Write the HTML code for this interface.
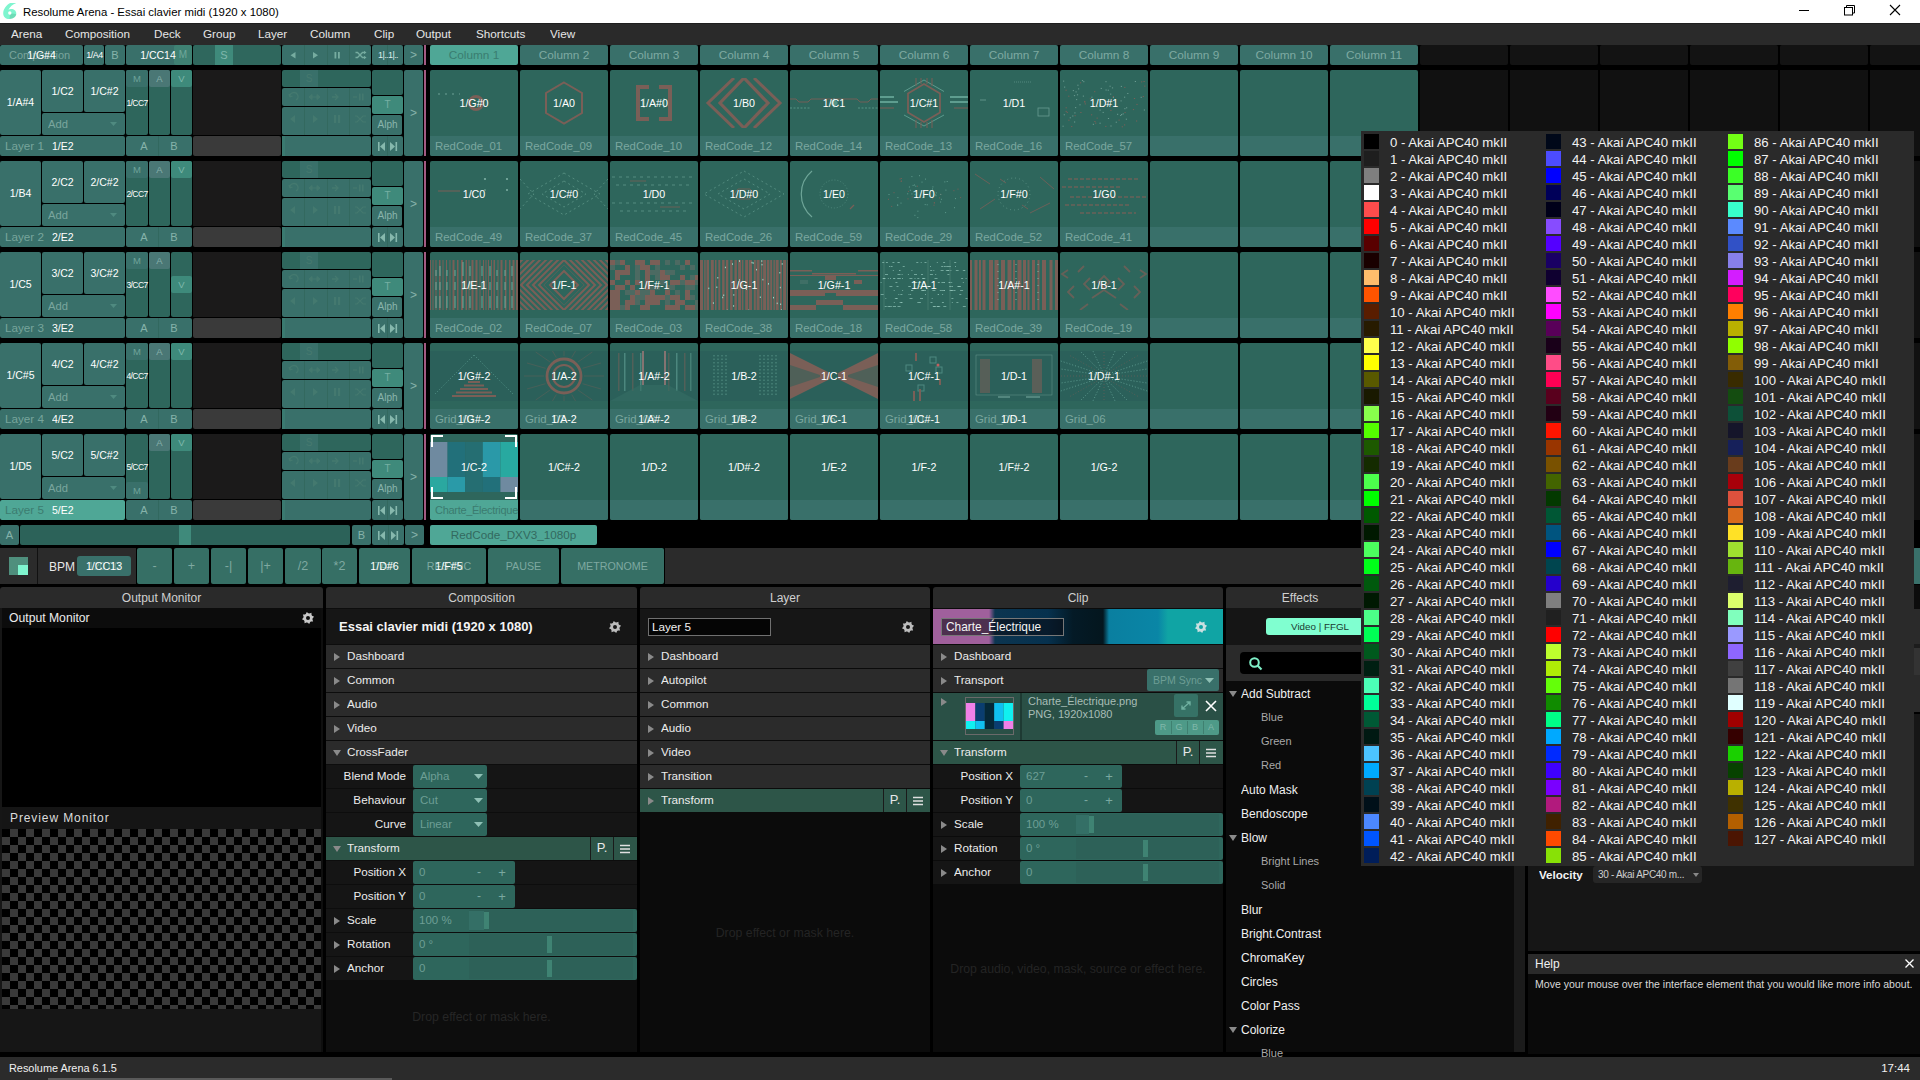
<!DOCTYPE html><html><head><meta charset="utf-8"><style>
html,body{margin:0;padding:0;}
body{width:1920px;height:1080px;position:relative;overflow:hidden;background:#000;font-family:"Liberation Sans",sans-serif;}
div{position:absolute;box-sizing:border-box;}
svg{position:absolute;}
</style></head><body>
<div style="left:0px;top:0px;width:1920px;height:23px;background:#ffffff;"></div>
<svg style="left:0px;top:0px" width="20" height="23" viewBox="0 0 20 23"><path d="M16.3 3 H10.2 C6.5 5 3.2 9 3.2 13.2 C3.2 16.8 5.8 19 9.3 19 C13.2 19 16.3 16.8 16.3 13.6 C16.3 10.6 13.8 8.9 11 9 C10 9 9.2 9.3 8.4 9.8 C10 6.8 12.5 4.6 16.3 3 Z" fill="#7ff5cf"/><path d="M10 13.5 C12.5 13.2 14.5 13.8 16.2 14.2 C15.6 17 12.8 18.8 9.6 18.9 Z" fill="#5fc7a4" fill-opacity="0.55"/><circle cx="9.8" cy="13" r="1.7" fill="#fff"/></svg>
<div style="left:23px;top:1px;width:400px;height:23px;line-height:23px;font-size:11.4px;color:#000;text-align:left;font-weight:normal;white-space:nowrap;overflow:hidden;">Resolume Arena - Essai clavier midi (1920 x 1080)</div>
<svg style="left:1790px;top:0" width="130" height="23" viewBox="0 0 130 23"><line x1="9" y1="10.5" x2="19" y2="10.5" stroke="#000" stroke-width="1"/><rect x="54.5" y="7.5" width="8" height="7.5" fill="none" stroke="#000" stroke-width="1"/><path d="M56.5 7.5 V5.5 H64.5 V13 H62.5" fill="none" stroke="#000" stroke-width="1"/><path d="M100 5 L110 15 M110 5 L100 15" stroke="#000" stroke-width="1.1"/></svg>
<div style="left:0px;top:23px;width:1920px;height:22px;background:#2a2a2a;"></div>
<div style="left:0px;top:23px;width:1920px;height:1px;background:#1e1e1e;"></div>
<div style="left:11px;top:23px;width:120px;height:22px;line-height:22px;font-size:11.7px;color:#e6e6e6;text-align:left;font-weight:normal;white-space:nowrap;overflow:hidden;">Arena</div>
<div style="left:65px;top:23px;width:120px;height:22px;line-height:22px;font-size:11.7px;color:#e6e6e6;text-align:left;font-weight:normal;white-space:nowrap;overflow:hidden;">Composition</div>
<div style="left:154px;top:23px;width:120px;height:22px;line-height:22px;font-size:11.7px;color:#e6e6e6;text-align:left;font-weight:normal;white-space:nowrap;overflow:hidden;">Deck</div>
<div style="left:203px;top:23px;width:120px;height:22px;line-height:22px;font-size:11.7px;color:#e6e6e6;text-align:left;font-weight:normal;white-space:nowrap;overflow:hidden;">Group</div>
<div style="left:258px;top:23px;width:120px;height:22px;line-height:22px;font-size:11.7px;color:#e6e6e6;text-align:left;font-weight:normal;white-space:nowrap;overflow:hidden;">Layer</div>
<div style="left:310px;top:23px;width:120px;height:22px;line-height:22px;font-size:11.7px;color:#e6e6e6;text-align:left;font-weight:normal;white-space:nowrap;overflow:hidden;">Column</div>
<div style="left:374px;top:23px;width:120px;height:22px;line-height:22px;font-size:11.7px;color:#e6e6e6;text-align:left;font-weight:normal;white-space:nowrap;overflow:hidden;">Clip</div>
<div style="left:416px;top:23px;width:120px;height:22px;line-height:22px;font-size:11.7px;color:#e6e6e6;text-align:left;font-weight:normal;white-space:nowrap;overflow:hidden;">Output</div>
<div style="left:476px;top:23px;width:120px;height:22px;line-height:22px;font-size:11.7px;color:#e6e6e6;text-align:left;font-weight:normal;white-space:nowrap;overflow:hidden;">Shortcuts</div>
<div style="left:550px;top:23px;width:120px;height:22px;line-height:22px;font-size:11.7px;color:#e6e6e6;text-align:left;font-weight:normal;white-space:nowrap;overflow:hidden;">View</div>
<div style="left:0px;top:45px;width:83px;height:20px;background:#39706a;border-radius:2px;"></div>
<div style="left:9px;top:45px;width:80px;height:20px;line-height:20px;font-size:11px;color:#7aa59d;text-align:left;font-weight:normal;white-space:nowrap;overflow:hidden;">Composition</div>
<div style="left:0px;top:45px;width:83px;height:20px;line-height:20px;font-size:10.5px;color:#ffffff;text-align:center;font-weight:normal;white-space:nowrap;overflow:hidden;">1/G#4</div>
<div style="left:84px;top:45px;width:20px;height:20px;background:#39706a;border-radius:2px;"></div>
<div style="left:84px;top:45px;width:21px;height:20px;line-height:20px;font-size:9px;color:#ffffff;text-align:center;font-weight:normal;white-space:nowrap;overflow:hidden;letter-spacing:-0.5px;">1/A4</div>
<div style="left:105px;top:45px;width:20px;height:20px;background:#39706a;border-radius:2px;"></div>
<div style="left:105px;top:45px;width:20px;height:20px;line-height:20px;font-size:11px;color:#86b3aa;text-align:center;font-weight:normal;white-space:nowrap;overflow:hidden;">B</div>
<div style="left:126px;top:45px;width:66px;height:20px;background:#39706a;border-radius:2px;"></div>
<div style="left:174px;top:45px;width:18px;height:20px;background:#3f8173;border-radius:2px;"></div>
<div style="left:174px;top:45px;width:18px;height:20px;line-height:20px;font-size:10px;color:#6fa89b;text-align:center;font-weight:normal;white-space:nowrap;overflow:hidden;">M</div>
<div style="left:138px;top:45px;width:40px;height:20px;line-height:20px;font-size:10.5px;color:#ffffff;text-align:center;font-weight:normal;white-space:nowrap;overflow:hidden;">1/CC14</div>
<div style="left:193px;top:45px;width:88px;height:20px;background:#2f675d;border-radius:2px;"></div>
<div style="left:215px;top:45px;width:18px;height:20px;background:#3f8a7b;"></div>
<div style="left:215px;top:45px;width:18px;height:20px;line-height:20px;font-size:11px;color:#7fb8ab;text-align:center;font-weight:normal;white-space:nowrap;overflow:hidden;">S</div>
<div style="left:282px;top:45px;width:89px;height:20px;background:#39706a;border-radius:2px;"></div>
<div style="left:304.25px;top:45px;width:1px;height:20px;background:#33695f;"></div>
<div style="left:326.5px;top:45px;width:1px;height:20px;background:#33695f;"></div>
<div style="left:348.75px;top:45px;width:1px;height:20px;background:#33695f;"></div>
<svg style="left:282px;top:45px" width="90" height="20" viewBox="0 0 90 20" fill="#76aca0"><path d="M13.5 7 L8.5 10.2 L13.5 13.4 Z"/><path d="M31 7 L36 10.2 L31 13.4 Z"/><rect x="52.5" y="7" width="1.8" height="6.5"/><rect x="56" y="7" width="1.8" height="6.5"/><path d="M73.5 7.5 H75.5 L80.5 12.5 H82.5 M73.5 12.5 H75.5 L80.5 7.5 H82.5" stroke="#76aca0" stroke-width="1.3" fill="none"/><path d="M82 5.8 L84.5 7.5 L82 9.2 Z M82 10.8 L84.5 12.5 L82 14.2 Z"/></svg>
<div style="left:372px;top:45px;width:31px;height:20px;background:#39706a;border-radius:2px;"></div>
<div style="left:387px;top:45px;width:1px;height:20px;background:#33695f;"></div>
<div style="left:372px;top:45px;width:32px;height:20px;line-height:20px;font-size:9px;color:#dfeeea;text-align:center;font-weight:normal;white-space:nowrap;overflow:hidden;letter-spacing:-0.6px;">1|..1|..</div>
<div style="left:404px;top:45px;width:19px;height:20px;background:#39706a;border-radius:2px;"></div>
<div style="left:404px;top:45px;width:19px;height:20px;line-height:20px;font-size:12px;color:#86b3aa;text-align:center;font-weight:normal;white-space:nowrap;overflow:hidden;">&gt;</div>
<div style="left:424px;top:45px;width:2px;height:20px;background:#a35a82;"></div>
<div style="left:0px;top:70px;width:41px;height:65px;background:#39706a;border-radius:2px;"></div>
<div style="left:0px;top:70px;width:41px;height:65px;line-height:65px;font-size:10.5px;color:#ffffff;text-align:center;font-weight:normal;white-space:nowrap;overflow:hidden;">1/A#4</div>
<div style="left:42px;top:70px;width:41px;height:42px;background:#39706a;border-radius:2px;"></div>
<div style="left:42px;top:70px;width:41px;height:42px;line-height:42px;font-size:10.5px;color:#ffffff;text-align:center;font-weight:normal;white-space:nowrap;overflow:hidden;">1/C2</div>
<div style="left:84px;top:70px;width:41px;height:42px;background:#39706a;border-radius:2px;"></div>
<div style="left:84px;top:70px;width:41px;height:42px;line-height:42px;font-size:10.5px;color:#ffffff;text-align:center;font-weight:normal;white-space:nowrap;overflow:hidden;">1/C#2</div>
<div style="left:42px;top:113px;width:83px;height:22px;background:#39706a;border-radius:2px;"></div>
<div style="left:48px;top:113px;width:60px;height:22px;line-height:22px;font-size:11.2px;color:#79a69e;text-align:left;font-weight:normal;white-space:nowrap;overflow:hidden;">Add</div>
<svg style="left:110px;top:122px" width="8" height="5"><path d="M0 0 H7 L3.5 4 Z" fill="#4f8a80"/></svg>
<div style="left:126px;top:70px;width:22px;height:65px;background:#2e665c;border-radius:2px;"></div>
<div style="left:149px;top:70px;width:21px;height:65px;background:#2e665c;border-radius:2px;"></div>
<div style="left:171px;top:70px;width:21px;height:65px;background:#2e665c;border-radius:2px;"></div>
<div style="left:126px;top:70px;width:22px;height:17px;background:#39706a;border-radius:2px;"></div>
<div style="left:126px;top:70px;width:22px;height:17px;line-height:17px;font-size:9.5px;color:#6fa39a;text-align:center;font-weight:normal;white-space:nowrap;overflow:hidden;">M</div>
<div style="left:149px;top:70px;width:21px;height:17px;background:#4a7775;border-radius:2px;"></div>
<div style="left:149px;top:70px;width:21px;height:17px;line-height:17px;font-size:9.5px;color:#86b0ab;text-align:center;font-weight:normal;white-space:nowrap;overflow:hidden;">A</div>
<div style="left:171px;top:70px;width:21px;height:17px;background:#3e8a7b;border-radius:2px;"></div>
<div style="left:171px;top:70px;width:21px;height:17px;line-height:17px;font-size:9.5px;color:#7db8ab;text-align:center;font-weight:normal;white-space:nowrap;overflow:hidden;">V</div>
<div style="left:124px;top:95px;width:26px;height:16px;line-height:16px;font-size:8.5px;color:#ffffff;text-align:center;font-weight:normal;white-space:nowrap;overflow:hidden;letter-spacing:-0.6px;">1/CC7</div>
<div style="left:0px;top:136px;width:125px;height:20px;background:#39706a;border-radius:2px;"></div>
<div style="left:5px;top:136px;width:50px;height:20px;line-height:20px;font-size:11.7px;color:#77a59c;text-align:left;font-weight:normal;white-space:nowrap;overflow:hidden;">Layer 1</div>
<div style="left:52px;top:136px;width:40px;height:20px;line-height:20px;font-size:10.5px;color:#ffffff;text-align:left;font-weight:normal;white-space:nowrap;overflow:hidden;">1/E2</div>
<div style="left:126px;top:136px;width:66px;height:20px;background:#39706a;border-radius:2px;"></div>
<div style="left:158px;top:136px;width:1px;height:20px;background:#32685f;"></div>
<div style="left:126px;top:136px;width:36px;height:20px;line-height:20px;font-size:11px;color:#86b3aa;text-align:center;font-weight:normal;white-space:nowrap;overflow:hidden;">A</div>
<div style="left:159px;top:136px;width:30px;height:20px;line-height:20px;font-size:11px;color:#86b3aa;text-align:center;font-weight:normal;white-space:nowrap;overflow:hidden;">B</div>
<div style="left:193px;top:70px;width:88px;height:65px;background:#1b1a1a;"></div>
<div style="left:193px;top:136px;width:88px;height:20px;background:#3a3a3a;border-radius:2px;"></div>
<div style="left:282px;top:70px;width:89px;height:17px;background:#2e665c;border-radius:2px;"></div>
<div style="left:300px;top:70px;width:18px;height:17px;background:#39706a;"></div>
<div style="left:300px;top:70px;width:18px;height:17px;line-height:17px;font-size:10px;color:#46796f;text-align:center;font-weight:normal;white-space:nowrap;overflow:hidden;">S</div>
<div style="left:282px;top:88px;width:89px;height:18px;background:#39706a;border-radius:2px;"></div>
<div style="left:282px;top:107px;width:89px;height:28px;background:#39706a;border-radius:2px;"></div>
<div style="left:304.25px;top:88px;width:1px;height:18px;background:#33695f;"></div>
<div style="left:304.25px;top:107px;width:1px;height:28px;background:#33695f;"></div>
<div style="left:326.5px;top:88px;width:1px;height:18px;background:#33695f;"></div>
<div style="left:326.5px;top:107px;width:1px;height:28px;background:#33695f;"></div>
<div style="left:348.75px;top:88px;width:1px;height:18px;background:#33695f;"></div>
<div style="left:348.75px;top:107px;width:1px;height:28px;background:#33695f;"></div>
<svg style="left:282px;top:88px" width="90" height="47" viewBox="0 0 90 47" fill="#44796f"><path d="M8 9 A4 4 0 1 1 14 12 M8 9 L7 6 M8 9 L10.5 8" stroke="#44796f" stroke-width="1.3" fill="none"/><path d="M27 9 L30 6.5 V11.5 Z M38 9 L35 6.5 V11.5 Z M30 9 H35" stroke="#44796f" stroke-width="1"/><path d="M50 9 H56 M53 6 L56 9 L53 12" stroke="#44796f" stroke-width="1.3" fill="none"/><path d="M71 9 H75" stroke="#44796f" stroke-width="1.3"/><rect x="77" y="5.5" width="1.6" height="7"/><rect x="80" y="5.5" width="1.6" height="7"/><path d="M13 27 L8 31 L13 35 Z"/><path d="M31 27 L36 31 L31 35 Z"/><rect x="52" y="27" width="2.2" height="8"/><rect x="56" y="27" width="2.2" height="8"/><path d="M73 28 H75 L81 34 H84 M73 34 H75 L81 28 H84" stroke="#44796f" stroke-width="1.2" fill="none"/></svg>
<div style="left:282px;top:136px;width:89px;height:20px;background:#39706a;border-radius:2px;"></div>
<div style="left:282px;top:136px;width:3px;height:20px;background:#3a7a70;"></div>
<div style="left:372px;top:70px;width:31px;height:25px;background:#2e665c;border-radius:2px;"></div>
<div style="left:372px;top:96px;width:31px;height:18px;background:#3f8a7b;border-radius:2px;"></div>
<div style="left:372px;top:96px;width:31px;height:18px;line-height:18px;font-size:10px;color:#76b0a3;text-align:center;font-weight:normal;white-space:nowrap;overflow:hidden;">T</div>
<div style="left:372px;top:115px;width:30px;height:20px;background:#39706a;border-radius:2px;"></div>
<div style="left:372px;top:115px;width:31px;height:20px;line-height:20px;font-size:10px;color:#8ab5ad;text-align:center;font-weight:normal;white-space:nowrap;overflow:hidden;">Alph</div>
<div style="left:372px;top:136px;width:31px;height:20px;background:#39706a;border-radius:2px;"></div>
<div style="left:387px;top:136px;width:1px;height:20px;background:#33695f;"></div>
<svg style="left:372px;top:136px" width="31" height="20" viewBox="0 0 31 20" fill="#86b8ad"><rect x="6" y="6" width="1.6" height="9"/><path d="M13 6 L8 10.5 L13 15 Z"/><rect x="23.5" y="6" width="1.6" height="9"/><path d="M18 6 L23 10.5 L18 15 Z"/></svg>
<div style="left:404px;top:70px;width:19px;height:86px;background:#39706a;border-radius:2px;"></div>
<div style="left:404px;top:70px;width:19px;height:86px;line-height:86px;font-size:12px;color:#86b3aa;text-align:center;font-weight:normal;white-space:nowrap;overflow:hidden;">&gt;</div>
<div style="left:424px;top:70px;width:2px;height:86px;background:#a35a82;"></div>
<div style="left:0px;top:161px;width:41px;height:65px;background:#39706a;border-radius:2px;"></div>
<div style="left:0px;top:161px;width:41px;height:65px;line-height:65px;font-size:10.5px;color:#ffffff;text-align:center;font-weight:normal;white-space:nowrap;overflow:hidden;">1/B4</div>
<div style="left:42px;top:161px;width:41px;height:42px;background:#39706a;border-radius:2px;"></div>
<div style="left:42px;top:161px;width:41px;height:42px;line-height:42px;font-size:10.5px;color:#ffffff;text-align:center;font-weight:normal;white-space:nowrap;overflow:hidden;">2/C2</div>
<div style="left:84px;top:161px;width:41px;height:42px;background:#39706a;border-radius:2px;"></div>
<div style="left:84px;top:161px;width:41px;height:42px;line-height:42px;font-size:10.5px;color:#ffffff;text-align:center;font-weight:normal;white-space:nowrap;overflow:hidden;">2/C#2</div>
<div style="left:42px;top:204px;width:83px;height:22px;background:#39706a;border-radius:2px;"></div>
<div style="left:48px;top:204px;width:60px;height:22px;line-height:22px;font-size:11.2px;color:#79a69e;text-align:left;font-weight:normal;white-space:nowrap;overflow:hidden;">Add</div>
<svg style="left:110px;top:213px" width="8" height="5"><path d="M0 0 H7 L3.5 4 Z" fill="#4f8a80"/></svg>
<div style="left:126px;top:161px;width:22px;height:65px;background:#2e665c;border-radius:2px;"></div>
<div style="left:149px;top:161px;width:21px;height:65px;background:#2e665c;border-radius:2px;"></div>
<div style="left:171px;top:161px;width:21px;height:65px;background:#2e665c;border-radius:2px;"></div>
<div style="left:126px;top:161px;width:22px;height:17px;background:#39706a;border-radius:2px;"></div>
<div style="left:126px;top:161px;width:22px;height:17px;line-height:17px;font-size:9.5px;color:#6fa39a;text-align:center;font-weight:normal;white-space:nowrap;overflow:hidden;">M</div>
<div style="left:149px;top:161px;width:21px;height:17px;background:#4a7775;border-radius:2px;"></div>
<div style="left:149px;top:161px;width:21px;height:17px;line-height:17px;font-size:9.5px;color:#86b0ab;text-align:center;font-weight:normal;white-space:nowrap;overflow:hidden;">A</div>
<div style="left:171px;top:161px;width:21px;height:17px;background:#3e8a7b;border-radius:2px;"></div>
<div style="left:171px;top:161px;width:21px;height:17px;line-height:17px;font-size:9.5px;color:#7db8ab;text-align:center;font-weight:normal;white-space:nowrap;overflow:hidden;">V</div>
<div style="left:124px;top:186px;width:26px;height:16px;line-height:16px;font-size:8.5px;color:#ffffff;text-align:center;font-weight:normal;white-space:nowrap;overflow:hidden;letter-spacing:-0.6px;">2/CC7</div>
<div style="left:0px;top:227px;width:125px;height:20px;background:#39706a;border-radius:2px;"></div>
<div style="left:5px;top:227px;width:50px;height:20px;line-height:20px;font-size:11.7px;color:#77a59c;text-align:left;font-weight:normal;white-space:nowrap;overflow:hidden;">Layer 2</div>
<div style="left:52px;top:227px;width:40px;height:20px;line-height:20px;font-size:10.5px;color:#ffffff;text-align:left;font-weight:normal;white-space:nowrap;overflow:hidden;">2/E2</div>
<div style="left:126px;top:227px;width:66px;height:20px;background:#39706a;border-radius:2px;"></div>
<div style="left:158px;top:227px;width:1px;height:20px;background:#32685f;"></div>
<div style="left:126px;top:227px;width:36px;height:20px;line-height:20px;font-size:11px;color:#86b3aa;text-align:center;font-weight:normal;white-space:nowrap;overflow:hidden;">A</div>
<div style="left:159px;top:227px;width:30px;height:20px;line-height:20px;font-size:11px;color:#86b3aa;text-align:center;font-weight:normal;white-space:nowrap;overflow:hidden;">B</div>
<div style="left:193px;top:161px;width:88px;height:65px;background:#1b1a1a;"></div>
<div style="left:193px;top:227px;width:88px;height:20px;background:#3a3a3a;border-radius:2px;"></div>
<div style="left:282px;top:161px;width:89px;height:17px;background:#2e665c;border-radius:2px;"></div>
<div style="left:300px;top:161px;width:18px;height:17px;background:#39706a;"></div>
<div style="left:300px;top:161px;width:18px;height:17px;line-height:17px;font-size:10px;color:#46796f;text-align:center;font-weight:normal;white-space:nowrap;overflow:hidden;">S</div>
<div style="left:282px;top:179px;width:89px;height:18px;background:#39706a;border-radius:2px;"></div>
<div style="left:282px;top:198px;width:89px;height:28px;background:#39706a;border-radius:2px;"></div>
<div style="left:304.25px;top:179px;width:1px;height:18px;background:#33695f;"></div>
<div style="left:304.25px;top:198px;width:1px;height:28px;background:#33695f;"></div>
<div style="left:326.5px;top:179px;width:1px;height:18px;background:#33695f;"></div>
<div style="left:326.5px;top:198px;width:1px;height:28px;background:#33695f;"></div>
<div style="left:348.75px;top:179px;width:1px;height:18px;background:#33695f;"></div>
<div style="left:348.75px;top:198px;width:1px;height:28px;background:#33695f;"></div>
<svg style="left:282px;top:179px" width="90" height="47" viewBox="0 0 90 47" fill="#44796f"><path d="M8 9 A4 4 0 1 1 14 12 M8 9 L7 6 M8 9 L10.5 8" stroke="#44796f" stroke-width="1.3" fill="none"/><path d="M27 9 L30 6.5 V11.5 Z M38 9 L35 6.5 V11.5 Z M30 9 H35" stroke="#44796f" stroke-width="1"/><path d="M50 9 H56 M53 6 L56 9 L53 12" stroke="#44796f" stroke-width="1.3" fill="none"/><path d="M71 9 H75" stroke="#44796f" stroke-width="1.3"/><rect x="77" y="5.5" width="1.6" height="7"/><rect x="80" y="5.5" width="1.6" height="7"/><path d="M13 27 L8 31 L13 35 Z"/><path d="M31 27 L36 31 L31 35 Z"/><rect x="52" y="27" width="2.2" height="8"/><rect x="56" y="27" width="2.2" height="8"/><path d="M73 28 H75 L81 34 H84 M73 34 H75 L81 28 H84" stroke="#44796f" stroke-width="1.2" fill="none"/></svg>
<div style="left:282px;top:227px;width:89px;height:20px;background:#39706a;border-radius:2px;"></div>
<div style="left:282px;top:227px;width:3px;height:20px;background:#3a7a70;"></div>
<div style="left:372px;top:161px;width:31px;height:25px;background:#2e665c;border-radius:2px;"></div>
<div style="left:372px;top:187px;width:31px;height:18px;background:#3f8a7b;border-radius:2px;"></div>
<div style="left:372px;top:187px;width:31px;height:18px;line-height:18px;font-size:10px;color:#76b0a3;text-align:center;font-weight:normal;white-space:nowrap;overflow:hidden;">T</div>
<div style="left:372px;top:206px;width:30px;height:20px;background:#39706a;border-radius:2px;"></div>
<div style="left:372px;top:206px;width:31px;height:20px;line-height:20px;font-size:10px;color:#8ab5ad;text-align:center;font-weight:normal;white-space:nowrap;overflow:hidden;">Alph</div>
<div style="left:372px;top:227px;width:31px;height:20px;background:#39706a;border-radius:2px;"></div>
<div style="left:387px;top:227px;width:1px;height:20px;background:#33695f;"></div>
<svg style="left:372px;top:227px" width="31" height="20" viewBox="0 0 31 20" fill="#86b8ad"><rect x="6" y="6" width="1.6" height="9"/><path d="M13 6 L8 10.5 L13 15 Z"/><rect x="23.5" y="6" width="1.6" height="9"/><path d="M18 6 L23 10.5 L18 15 Z"/></svg>
<div style="left:404px;top:161px;width:19px;height:86px;background:#39706a;border-radius:2px;"></div>
<div style="left:404px;top:161px;width:19px;height:86px;line-height:86px;font-size:12px;color:#86b3aa;text-align:center;font-weight:normal;white-space:nowrap;overflow:hidden;">&gt;</div>
<div style="left:424px;top:161px;width:2px;height:86px;background:#a35a82;"></div>
<div style="left:0px;top:252px;width:41px;height:65px;background:#39706a;border-radius:2px;"></div>
<div style="left:0px;top:252px;width:41px;height:65px;line-height:65px;font-size:10.5px;color:#ffffff;text-align:center;font-weight:normal;white-space:nowrap;overflow:hidden;">1/C5</div>
<div style="left:42px;top:252px;width:41px;height:42px;background:#39706a;border-radius:2px;"></div>
<div style="left:42px;top:252px;width:41px;height:42px;line-height:42px;font-size:10.5px;color:#ffffff;text-align:center;font-weight:normal;white-space:nowrap;overflow:hidden;">3/C2</div>
<div style="left:84px;top:252px;width:41px;height:42px;background:#39706a;border-radius:2px;"></div>
<div style="left:84px;top:252px;width:41px;height:42px;line-height:42px;font-size:10.5px;color:#ffffff;text-align:center;font-weight:normal;white-space:nowrap;overflow:hidden;">3/C#2</div>
<div style="left:42px;top:295px;width:83px;height:22px;background:#39706a;border-radius:2px;"></div>
<div style="left:48px;top:295px;width:60px;height:22px;line-height:22px;font-size:11.2px;color:#79a69e;text-align:left;font-weight:normal;white-space:nowrap;overflow:hidden;">Add</div>
<svg style="left:110px;top:304px" width="8" height="5"><path d="M0 0 H7 L3.5 4 Z" fill="#4f8a80"/></svg>
<div style="left:126px;top:252px;width:22px;height:65px;background:#2e665c;border-radius:2px;"></div>
<div style="left:149px;top:252px;width:21px;height:65px;background:#2e665c;border-radius:2px;"></div>
<div style="left:171px;top:252px;width:21px;height:65px;background:#2e665c;border-radius:2px;"></div>
<div style="left:126px;top:252px;width:22px;height:17px;background:#39706a;border-radius:2px;"></div>
<div style="left:126px;top:252px;width:22px;height:17px;line-height:17px;font-size:9.5px;color:#6fa39a;text-align:center;font-weight:normal;white-space:nowrap;overflow:hidden;">M</div>
<div style="left:149px;top:252px;width:21px;height:17px;background:#4a7775;border-radius:2px;"></div>
<div style="left:149px;top:252px;width:21px;height:17px;line-height:17px;font-size:9.5px;color:#86b0ab;text-align:center;font-weight:normal;white-space:nowrap;overflow:hidden;">A</div>
<div style="left:171px;top:276px;width:21px;height:17px;background:#3e8a7b;border-radius:2px;"></div>
<div style="left:171px;top:276px;width:21px;height:17px;line-height:17px;font-size:9.5px;color:#7db8ab;text-align:center;font-weight:normal;white-space:nowrap;overflow:hidden;">V</div>
<div style="left:124px;top:277px;width:26px;height:16px;line-height:16px;font-size:8.5px;color:#ffffff;text-align:center;font-weight:normal;white-space:nowrap;overflow:hidden;letter-spacing:-0.6px;">3/CC7</div>
<div style="left:0px;top:318px;width:125px;height:20px;background:#39706a;border-radius:2px;"></div>
<div style="left:5px;top:318px;width:50px;height:20px;line-height:20px;font-size:11.7px;color:#77a59c;text-align:left;font-weight:normal;white-space:nowrap;overflow:hidden;">Layer 3</div>
<div style="left:52px;top:318px;width:40px;height:20px;line-height:20px;font-size:10.5px;color:#ffffff;text-align:left;font-weight:normal;white-space:nowrap;overflow:hidden;">3/E2</div>
<div style="left:126px;top:318px;width:66px;height:20px;background:#39706a;border-radius:2px;"></div>
<div style="left:158px;top:318px;width:1px;height:20px;background:#32685f;"></div>
<div style="left:126px;top:318px;width:36px;height:20px;line-height:20px;font-size:11px;color:#86b3aa;text-align:center;font-weight:normal;white-space:nowrap;overflow:hidden;">A</div>
<div style="left:159px;top:318px;width:30px;height:20px;line-height:20px;font-size:11px;color:#86b3aa;text-align:center;font-weight:normal;white-space:nowrap;overflow:hidden;">B</div>
<div style="left:193px;top:252px;width:88px;height:65px;background:#1b1a1a;"></div>
<div style="left:193px;top:318px;width:88px;height:20px;background:#3a3a3a;border-radius:2px;"></div>
<div style="left:282px;top:252px;width:89px;height:17px;background:#2e665c;border-radius:2px;"></div>
<div style="left:300px;top:252px;width:18px;height:17px;background:#39706a;"></div>
<div style="left:300px;top:252px;width:18px;height:17px;line-height:17px;font-size:10px;color:#46796f;text-align:center;font-weight:normal;white-space:nowrap;overflow:hidden;">S</div>
<div style="left:282px;top:270px;width:89px;height:18px;background:#39706a;border-radius:2px;"></div>
<div style="left:282px;top:289px;width:89px;height:28px;background:#39706a;border-radius:2px;"></div>
<div style="left:304.25px;top:270px;width:1px;height:18px;background:#33695f;"></div>
<div style="left:304.25px;top:289px;width:1px;height:28px;background:#33695f;"></div>
<div style="left:326.5px;top:270px;width:1px;height:18px;background:#33695f;"></div>
<div style="left:326.5px;top:289px;width:1px;height:28px;background:#33695f;"></div>
<div style="left:348.75px;top:270px;width:1px;height:18px;background:#33695f;"></div>
<div style="left:348.75px;top:289px;width:1px;height:28px;background:#33695f;"></div>
<svg style="left:282px;top:270px" width="90" height="47" viewBox="0 0 90 47" fill="#44796f"><path d="M8 9 A4 4 0 1 1 14 12 M8 9 L7 6 M8 9 L10.5 8" stroke="#44796f" stroke-width="1.3" fill="none"/><path d="M27 9 L30 6.5 V11.5 Z M38 9 L35 6.5 V11.5 Z M30 9 H35" stroke="#44796f" stroke-width="1"/><path d="M50 9 H56 M53 6 L56 9 L53 12" stroke="#44796f" stroke-width="1.3" fill="none"/><path d="M71 9 H75" stroke="#44796f" stroke-width="1.3"/><rect x="77" y="5.5" width="1.6" height="7"/><rect x="80" y="5.5" width="1.6" height="7"/><path d="M13 27 L8 31 L13 35 Z"/><path d="M31 27 L36 31 L31 35 Z"/><rect x="52" y="27" width="2.2" height="8"/><rect x="56" y="27" width="2.2" height="8"/><path d="M73 28 H75 L81 34 H84 M73 34 H75 L81 28 H84" stroke="#44796f" stroke-width="1.2" fill="none"/></svg>
<div style="left:282px;top:318px;width:89px;height:20px;background:#39706a;border-radius:2px;"></div>
<div style="left:282px;top:318px;width:3px;height:20px;background:#3a7a70;"></div>
<div style="left:372px;top:252px;width:31px;height:25px;background:#2e665c;border-radius:2px;"></div>
<div style="left:372px;top:278px;width:31px;height:18px;background:#3f8a7b;border-radius:2px;"></div>
<div style="left:372px;top:278px;width:31px;height:18px;line-height:18px;font-size:10px;color:#76b0a3;text-align:center;font-weight:normal;white-space:nowrap;overflow:hidden;">T</div>
<div style="left:372px;top:297px;width:30px;height:20px;background:#39706a;border-radius:2px;"></div>
<div style="left:372px;top:297px;width:31px;height:20px;line-height:20px;font-size:10px;color:#8ab5ad;text-align:center;font-weight:normal;white-space:nowrap;overflow:hidden;">Alph</div>
<div style="left:372px;top:318px;width:31px;height:20px;background:#39706a;border-radius:2px;"></div>
<div style="left:387px;top:318px;width:1px;height:20px;background:#33695f;"></div>
<svg style="left:372px;top:318px" width="31" height="20" viewBox="0 0 31 20" fill="#86b8ad"><rect x="6" y="6" width="1.6" height="9"/><path d="M13 6 L8 10.5 L13 15 Z"/><rect x="23.5" y="6" width="1.6" height="9"/><path d="M18 6 L23 10.5 L18 15 Z"/></svg>
<div style="left:404px;top:252px;width:19px;height:86px;background:#39706a;border-radius:2px;"></div>
<div style="left:404px;top:252px;width:19px;height:86px;line-height:86px;font-size:12px;color:#86b3aa;text-align:center;font-weight:normal;white-space:nowrap;overflow:hidden;">&gt;</div>
<div style="left:424px;top:252px;width:2px;height:86px;background:#a35a82;"></div>
<div style="left:0px;top:343px;width:41px;height:65px;background:#39706a;border-radius:2px;"></div>
<div style="left:0px;top:343px;width:41px;height:65px;line-height:65px;font-size:10.5px;color:#ffffff;text-align:center;font-weight:normal;white-space:nowrap;overflow:hidden;">1/C#5</div>
<div style="left:42px;top:343px;width:41px;height:42px;background:#39706a;border-radius:2px;"></div>
<div style="left:42px;top:343px;width:41px;height:42px;line-height:42px;font-size:10.5px;color:#ffffff;text-align:center;font-weight:normal;white-space:nowrap;overflow:hidden;">4/C2</div>
<div style="left:84px;top:343px;width:41px;height:42px;background:#39706a;border-radius:2px;"></div>
<div style="left:84px;top:343px;width:41px;height:42px;line-height:42px;font-size:10.5px;color:#ffffff;text-align:center;font-weight:normal;white-space:nowrap;overflow:hidden;">4/C#2</div>
<div style="left:42px;top:386px;width:83px;height:22px;background:#39706a;border-radius:2px;"></div>
<div style="left:48px;top:386px;width:60px;height:22px;line-height:22px;font-size:11.2px;color:#79a69e;text-align:left;font-weight:normal;white-space:nowrap;overflow:hidden;">Add</div>
<svg style="left:110px;top:395px" width="8" height="5"><path d="M0 0 H7 L3.5 4 Z" fill="#4f8a80"/></svg>
<div style="left:126px;top:343px;width:22px;height:65px;background:#2e665c;border-radius:2px;"></div>
<div style="left:149px;top:343px;width:21px;height:65px;background:#2e665c;border-radius:2px;"></div>
<div style="left:171px;top:343px;width:21px;height:65px;background:#2e665c;border-radius:2px;"></div>
<div style="left:126px;top:343px;width:22px;height:17px;background:#39706a;border-radius:2px;"></div>
<div style="left:126px;top:343px;width:22px;height:17px;line-height:17px;font-size:9.5px;color:#6fa39a;text-align:center;font-weight:normal;white-space:nowrap;overflow:hidden;">M</div>
<div style="left:149px;top:343px;width:21px;height:17px;background:#4a7775;border-radius:2px;"></div>
<div style="left:149px;top:343px;width:21px;height:17px;line-height:17px;font-size:9.5px;color:#86b0ab;text-align:center;font-weight:normal;white-space:nowrap;overflow:hidden;">A</div>
<div style="left:171px;top:343px;width:21px;height:17px;background:#3e8a7b;border-radius:2px;"></div>
<div style="left:171px;top:343px;width:21px;height:17px;line-height:17px;font-size:9.5px;color:#7db8ab;text-align:center;font-weight:normal;white-space:nowrap;overflow:hidden;">V</div>
<div style="left:124px;top:368px;width:26px;height:16px;line-height:16px;font-size:8.5px;color:#ffffff;text-align:center;font-weight:normal;white-space:nowrap;overflow:hidden;letter-spacing:-0.6px;">4/CC7</div>
<div style="left:0px;top:409px;width:125px;height:20px;background:#39706a;border-radius:2px;"></div>
<div style="left:5px;top:409px;width:50px;height:20px;line-height:20px;font-size:11.7px;color:#77a59c;text-align:left;font-weight:normal;white-space:nowrap;overflow:hidden;">Layer 4</div>
<div style="left:52px;top:409px;width:40px;height:20px;line-height:20px;font-size:10.5px;color:#ffffff;text-align:left;font-weight:normal;white-space:nowrap;overflow:hidden;">4/E2</div>
<div style="left:126px;top:409px;width:66px;height:20px;background:#39706a;border-radius:2px;"></div>
<div style="left:158px;top:409px;width:1px;height:20px;background:#32685f;"></div>
<div style="left:126px;top:409px;width:36px;height:20px;line-height:20px;font-size:11px;color:#86b3aa;text-align:center;font-weight:normal;white-space:nowrap;overflow:hidden;">A</div>
<div style="left:159px;top:409px;width:30px;height:20px;line-height:20px;font-size:11px;color:#86b3aa;text-align:center;font-weight:normal;white-space:nowrap;overflow:hidden;">B</div>
<div style="left:193px;top:343px;width:88px;height:65px;background:#1b1a1a;"></div>
<div style="left:193px;top:409px;width:88px;height:20px;background:#3a3a3a;border-radius:2px;"></div>
<div style="left:282px;top:343px;width:89px;height:17px;background:#2e665c;border-radius:2px;"></div>
<div style="left:300px;top:343px;width:18px;height:17px;background:#39706a;"></div>
<div style="left:300px;top:343px;width:18px;height:17px;line-height:17px;font-size:10px;color:#46796f;text-align:center;font-weight:normal;white-space:nowrap;overflow:hidden;">S</div>
<div style="left:282px;top:361px;width:89px;height:18px;background:#39706a;border-radius:2px;"></div>
<div style="left:282px;top:380px;width:89px;height:28px;background:#39706a;border-radius:2px;"></div>
<div style="left:304.25px;top:361px;width:1px;height:18px;background:#33695f;"></div>
<div style="left:304.25px;top:380px;width:1px;height:28px;background:#33695f;"></div>
<div style="left:326.5px;top:361px;width:1px;height:18px;background:#33695f;"></div>
<div style="left:326.5px;top:380px;width:1px;height:28px;background:#33695f;"></div>
<div style="left:348.75px;top:361px;width:1px;height:18px;background:#33695f;"></div>
<div style="left:348.75px;top:380px;width:1px;height:28px;background:#33695f;"></div>
<svg style="left:282px;top:361px" width="90" height="47" viewBox="0 0 90 47" fill="#44796f"><path d="M8 9 A4 4 0 1 1 14 12 M8 9 L7 6 M8 9 L10.5 8" stroke="#44796f" stroke-width="1.3" fill="none"/><path d="M27 9 L30 6.5 V11.5 Z M38 9 L35 6.5 V11.5 Z M30 9 H35" stroke="#44796f" stroke-width="1"/><path d="M50 9 H56 M53 6 L56 9 L53 12" stroke="#44796f" stroke-width="1.3" fill="none"/><path d="M71 9 H75" stroke="#44796f" stroke-width="1.3"/><rect x="77" y="5.5" width="1.6" height="7"/><rect x="80" y="5.5" width="1.6" height="7"/><path d="M13 27 L8 31 L13 35 Z"/><path d="M31 27 L36 31 L31 35 Z"/><rect x="52" y="27" width="2.2" height="8"/><rect x="56" y="27" width="2.2" height="8"/><path d="M73 28 H75 L81 34 H84 M73 34 H75 L81 28 H84" stroke="#44796f" stroke-width="1.2" fill="none"/></svg>
<div style="left:282px;top:409px;width:89px;height:20px;background:#39706a;border-radius:2px;"></div>
<div style="left:282px;top:409px;width:3px;height:20px;background:#3a7a70;"></div>
<div style="left:372px;top:343px;width:31px;height:25px;background:#2e665c;border-radius:2px;"></div>
<div style="left:372px;top:369px;width:31px;height:18px;background:#3f8a7b;border-radius:2px;"></div>
<div style="left:372px;top:369px;width:31px;height:18px;line-height:18px;font-size:10px;color:#76b0a3;text-align:center;font-weight:normal;white-space:nowrap;overflow:hidden;">T</div>
<div style="left:372px;top:388px;width:30px;height:20px;background:#39706a;border-radius:2px;"></div>
<div style="left:372px;top:388px;width:31px;height:20px;line-height:20px;font-size:10px;color:#8ab5ad;text-align:center;font-weight:normal;white-space:nowrap;overflow:hidden;">Alph</div>
<div style="left:372px;top:409px;width:31px;height:20px;background:#39706a;border-radius:2px;"></div>
<div style="left:387px;top:409px;width:1px;height:20px;background:#33695f;"></div>
<svg style="left:372px;top:409px" width="31" height="20" viewBox="0 0 31 20" fill="#86b8ad"><rect x="6" y="6" width="1.6" height="9"/><path d="M13 6 L8 10.5 L13 15 Z"/><rect x="23.5" y="6" width="1.6" height="9"/><path d="M18 6 L23 10.5 L18 15 Z"/></svg>
<div style="left:404px;top:343px;width:19px;height:86px;background:#39706a;border-radius:2px;"></div>
<div style="left:404px;top:343px;width:19px;height:86px;line-height:86px;font-size:12px;color:#86b3aa;text-align:center;font-weight:normal;white-space:nowrap;overflow:hidden;">&gt;</div>
<div style="left:424px;top:343px;width:2px;height:86px;background:#a35a82;"></div>
<div style="left:0px;top:434px;width:41px;height:65px;background:#39706a;border-radius:2px;"></div>
<div style="left:0px;top:434px;width:41px;height:65px;line-height:65px;font-size:10.5px;color:#ffffff;text-align:center;font-weight:normal;white-space:nowrap;overflow:hidden;">1/D5</div>
<div style="left:42px;top:434px;width:41px;height:42px;background:#39706a;border-radius:2px;"></div>
<div style="left:42px;top:434px;width:41px;height:42px;line-height:42px;font-size:10.5px;color:#ffffff;text-align:center;font-weight:normal;white-space:nowrap;overflow:hidden;">5/C2</div>
<div style="left:84px;top:434px;width:41px;height:42px;background:#39706a;border-radius:2px;"></div>
<div style="left:84px;top:434px;width:41px;height:42px;line-height:42px;font-size:10.5px;color:#ffffff;text-align:center;font-weight:normal;white-space:nowrap;overflow:hidden;">5/C#2</div>
<div style="left:42px;top:477px;width:83px;height:22px;background:#39706a;border-radius:2px;"></div>
<div style="left:48px;top:477px;width:60px;height:22px;line-height:22px;font-size:11.2px;color:#79a69e;text-align:left;font-weight:normal;white-space:nowrap;overflow:hidden;">Add</div>
<svg style="left:110px;top:486px" width="8" height="5"><path d="M0 0 H7 L3.5 4 Z" fill="#4f8a80"/></svg>
<div style="left:126px;top:434px;width:22px;height:65px;background:#2e665c;border-radius:2px;"></div>
<div style="left:149px;top:434px;width:21px;height:65px;background:#2e665c;border-radius:2px;"></div>
<div style="left:171px;top:434px;width:21px;height:65px;background:#2e665c;border-radius:2px;"></div>
<div style="left:126px;top:482px;width:22px;height:17px;background:#39706a;border-radius:2px;"></div>
<div style="left:126px;top:482px;width:22px;height:17px;line-height:17px;font-size:9.5px;color:#6fa39a;text-align:center;font-weight:normal;white-space:nowrap;overflow:hidden;">M</div>
<div style="left:149px;top:434px;width:21px;height:17px;background:#4a7775;border-radius:2px;"></div>
<div style="left:149px;top:434px;width:21px;height:17px;line-height:17px;font-size:9.5px;color:#86b0ab;text-align:center;font-weight:normal;white-space:nowrap;overflow:hidden;">A</div>
<div style="left:171px;top:434px;width:21px;height:17px;background:#3e8a7b;border-radius:2px;"></div>
<div style="left:171px;top:434px;width:21px;height:17px;line-height:17px;font-size:9.5px;color:#7db8ab;text-align:center;font-weight:normal;white-space:nowrap;overflow:hidden;">V</div>
<div style="left:124px;top:459px;width:26px;height:16px;line-height:16px;font-size:8.5px;color:#ffffff;text-align:center;font-weight:normal;white-space:nowrap;overflow:hidden;letter-spacing:-0.6px;">5/CC7</div>
<div style="left:0px;top:500px;width:125px;height:20px;background:#4fa796;border-radius:2px;"></div>
<div style="left:5px;top:500px;width:50px;height:20px;line-height:20px;font-size:11.7px;color:#3c7c70;text-align:left;font-weight:normal;white-space:nowrap;overflow:hidden;">Layer 5</div>
<div style="left:52px;top:500px;width:40px;height:20px;line-height:20px;font-size:10.5px;color:#ffffff;text-align:left;font-weight:normal;white-space:nowrap;overflow:hidden;">5/E2</div>
<div style="left:126px;top:500px;width:66px;height:20px;background:#39706a;border-radius:2px;"></div>
<div style="left:158px;top:500px;width:1px;height:20px;background:#32685f;"></div>
<div style="left:126px;top:500px;width:36px;height:20px;line-height:20px;font-size:11px;color:#86b3aa;text-align:center;font-weight:normal;white-space:nowrap;overflow:hidden;">A</div>
<div style="left:159px;top:500px;width:30px;height:20px;line-height:20px;font-size:11px;color:#86b3aa;text-align:center;font-weight:normal;white-space:nowrap;overflow:hidden;">B</div>
<div style="left:193px;top:434px;width:88px;height:65px;background:#1b1a1a;"></div>
<div style="left:193px;top:500px;width:88px;height:20px;background:#3a3a3a;border-radius:2px;"></div>
<div style="left:282px;top:434px;width:89px;height:17px;background:#2e665c;border-radius:2px;"></div>
<div style="left:300px;top:434px;width:18px;height:17px;background:#39706a;"></div>
<div style="left:300px;top:434px;width:18px;height:17px;line-height:17px;font-size:10px;color:#46796f;text-align:center;font-weight:normal;white-space:nowrap;overflow:hidden;">S</div>
<div style="left:282px;top:452px;width:89px;height:18px;background:#39706a;border-radius:2px;"></div>
<div style="left:282px;top:471px;width:89px;height:28px;background:#39706a;border-radius:2px;"></div>
<div style="left:304.25px;top:452px;width:1px;height:18px;background:#33695f;"></div>
<div style="left:304.25px;top:471px;width:1px;height:28px;background:#33695f;"></div>
<div style="left:326.5px;top:452px;width:1px;height:18px;background:#33695f;"></div>
<div style="left:326.5px;top:471px;width:1px;height:28px;background:#33695f;"></div>
<div style="left:348.75px;top:452px;width:1px;height:18px;background:#33695f;"></div>
<div style="left:348.75px;top:471px;width:1px;height:28px;background:#33695f;"></div>
<svg style="left:282px;top:452px" width="90" height="47" viewBox="0 0 90 47" fill="#44796f"><path d="M8 9 A4 4 0 1 1 14 12 M8 9 L7 6 M8 9 L10.5 8" stroke="#44796f" stroke-width="1.3" fill="none"/><path d="M27 9 L30 6.5 V11.5 Z M38 9 L35 6.5 V11.5 Z M30 9 H35" stroke="#44796f" stroke-width="1"/><path d="M50 9 H56 M53 6 L56 9 L53 12" stroke="#44796f" stroke-width="1.3" fill="none"/><path d="M71 9 H75" stroke="#44796f" stroke-width="1.3"/><rect x="77" y="5.5" width="1.6" height="7"/><rect x="80" y="5.5" width="1.6" height="7"/><path d="M13 27 L8 31 L13 35 Z"/><path d="M31 27 L36 31 L31 35 Z"/><rect x="52" y="27" width="2.2" height="8"/><rect x="56" y="27" width="2.2" height="8"/><path d="M73 28 H75 L81 34 H84 M73 34 H75 L81 28 H84" stroke="#44796f" stroke-width="1.2" fill="none"/></svg>
<div style="left:282px;top:500px;width:89px;height:20px;background:#39706a;border-radius:2px;"></div>
<div style="left:282px;top:500px;width:3px;height:20px;background:#3a7a70;"></div>
<div style="left:372px;top:434px;width:31px;height:25px;background:#2e665c;border-radius:2px;"></div>
<div style="left:372px;top:460px;width:31px;height:18px;background:#3f8a7b;border-radius:2px;"></div>
<div style="left:372px;top:460px;width:31px;height:18px;line-height:18px;font-size:10px;color:#76b0a3;text-align:center;font-weight:normal;white-space:nowrap;overflow:hidden;">T</div>
<div style="left:372px;top:479px;width:30px;height:20px;background:#39706a;border-radius:2px;"></div>
<div style="left:372px;top:479px;width:31px;height:20px;line-height:20px;font-size:10px;color:#8ab5ad;text-align:center;font-weight:normal;white-space:nowrap;overflow:hidden;">Alph</div>
<div style="left:372px;top:500px;width:31px;height:20px;background:#39706a;border-radius:2px;"></div>
<div style="left:387px;top:500px;width:1px;height:20px;background:#33695f;"></div>
<svg style="left:372px;top:500px" width="31" height="20" viewBox="0 0 31 20" fill="#86b8ad"><rect x="6" y="6" width="1.6" height="9"/><path d="M13 6 L8 10.5 L13 15 Z"/><rect x="23.5" y="6" width="1.6" height="9"/><path d="M18 6 L23 10.5 L18 15 Z"/></svg>
<div style="left:404px;top:434px;width:19px;height:86px;background:#39706a;border-radius:2px;"></div>
<div style="left:404px;top:434px;width:19px;height:86px;line-height:86px;font-size:12px;color:#86b3aa;text-align:center;font-weight:normal;white-space:nowrap;overflow:hidden;">&gt;</div>
<div style="left:424px;top:434px;width:2px;height:86px;background:#a35a82;"></div>
<div style="left:430px;top:45px;width:88px;height:20px;background:#4fa796;border-radius:2px;"></div>
<div style="left:430px;top:45px;width:88px;height:20px;line-height:20px;font-size:11.8px;color:#3a7d70;text-align:center;font-weight:normal;white-space:nowrap;overflow:hidden;">Column 1</div>
<div style="left:520px;top:45px;width:88px;height:20px;background:#39706a;border-radius:2px;"></div>
<div style="left:520px;top:45px;width:88px;height:20px;line-height:20px;font-size:11.8px;color:#7eaaa2;text-align:center;font-weight:normal;white-space:nowrap;overflow:hidden;">Column 2</div>
<div style="left:610px;top:45px;width:88px;height:20px;background:#39706a;border-radius:2px;"></div>
<div style="left:610px;top:45px;width:88px;height:20px;line-height:20px;font-size:11.8px;color:#7eaaa2;text-align:center;font-weight:normal;white-space:nowrap;overflow:hidden;">Column 3</div>
<div style="left:700px;top:45px;width:88px;height:20px;background:#39706a;border-radius:2px;"></div>
<div style="left:700px;top:45px;width:88px;height:20px;line-height:20px;font-size:11.8px;color:#7eaaa2;text-align:center;font-weight:normal;white-space:nowrap;overflow:hidden;">Column 4</div>
<div style="left:790px;top:45px;width:88px;height:20px;background:#39706a;border-radius:2px;"></div>
<div style="left:790px;top:45px;width:88px;height:20px;line-height:20px;font-size:11.8px;color:#7eaaa2;text-align:center;font-weight:normal;white-space:nowrap;overflow:hidden;">Column 5</div>
<div style="left:880px;top:45px;width:88px;height:20px;background:#39706a;border-radius:2px;"></div>
<div style="left:880px;top:45px;width:88px;height:20px;line-height:20px;font-size:11.8px;color:#7eaaa2;text-align:center;font-weight:normal;white-space:nowrap;overflow:hidden;">Column 6</div>
<div style="left:970px;top:45px;width:88px;height:20px;background:#39706a;border-radius:2px;"></div>
<div style="left:970px;top:45px;width:88px;height:20px;line-height:20px;font-size:11.8px;color:#7eaaa2;text-align:center;font-weight:normal;white-space:nowrap;overflow:hidden;">Column 7</div>
<div style="left:1060px;top:45px;width:88px;height:20px;background:#39706a;border-radius:2px;"></div>
<div style="left:1060px;top:45px;width:88px;height:20px;line-height:20px;font-size:11.8px;color:#7eaaa2;text-align:center;font-weight:normal;white-space:nowrap;overflow:hidden;">Column 8</div>
<div style="left:1150px;top:45px;width:88px;height:20px;background:#39706a;border-radius:2px;"></div>
<div style="left:1150px;top:45px;width:88px;height:20px;line-height:20px;font-size:11.8px;color:#7eaaa2;text-align:center;font-weight:normal;white-space:nowrap;overflow:hidden;">Column 9</div>
<div style="left:1240px;top:45px;width:88px;height:20px;background:#39706a;border-radius:2px;"></div>
<div style="left:1240px;top:45px;width:88px;height:20px;line-height:20px;font-size:11.8px;color:#7eaaa2;text-align:center;font-weight:normal;white-space:nowrap;overflow:hidden;">Column 10</div>
<div style="left:1330px;top:45px;width:88px;height:20px;background:#39706a;border-radius:2px;"></div>
<div style="left:1330px;top:45px;width:88px;height:20px;line-height:20px;font-size:11.8px;color:#7eaaa2;text-align:center;font-weight:normal;white-space:nowrap;overflow:hidden;">Column 11</div>
<div style="left:1420px;top:45px;width:88px;height:20px;background:#131313;border-radius:2px;"></div>
<div style="left:1420px;top:70px;width:88px;height:86px;background:#111111;border-radius:0 0 2px 2px;"></div>
<div style="left:1420px;top:161px;width:88px;height:86px;background:#111111;border-radius:0 0 2px 2px;"></div>
<div style="left:1420px;top:252px;width:88px;height:86px;background:#111111;border-radius:0 0 2px 2px;"></div>
<div style="left:1420px;top:343px;width:88px;height:86px;background:#111111;border-radius:0 0 2px 2px;"></div>
<div style="left:1420px;top:434px;width:88px;height:86px;background:#111111;border-radius:0 0 2px 2px;"></div>
<div style="left:1510px;top:45px;width:88px;height:20px;background:#131313;border-radius:2px;"></div>
<div style="left:1510px;top:70px;width:88px;height:86px;background:#111111;border-radius:0 0 2px 2px;"></div>
<div style="left:1510px;top:161px;width:88px;height:86px;background:#111111;border-radius:0 0 2px 2px;"></div>
<div style="left:1510px;top:252px;width:88px;height:86px;background:#111111;border-radius:0 0 2px 2px;"></div>
<div style="left:1510px;top:343px;width:88px;height:86px;background:#111111;border-radius:0 0 2px 2px;"></div>
<div style="left:1510px;top:434px;width:88px;height:86px;background:#111111;border-radius:0 0 2px 2px;"></div>
<div style="left:1600px;top:45px;width:88px;height:20px;background:#131313;border-radius:2px;"></div>
<div style="left:1600px;top:70px;width:88px;height:86px;background:#111111;border-radius:0 0 2px 2px;"></div>
<div style="left:1600px;top:161px;width:88px;height:86px;background:#111111;border-radius:0 0 2px 2px;"></div>
<div style="left:1600px;top:252px;width:88px;height:86px;background:#111111;border-radius:0 0 2px 2px;"></div>
<div style="left:1600px;top:343px;width:88px;height:86px;background:#111111;border-radius:0 0 2px 2px;"></div>
<div style="left:1600px;top:434px;width:88px;height:86px;background:#111111;border-radius:0 0 2px 2px;"></div>
<div style="left:1690px;top:45px;width:88px;height:20px;background:#131313;border-radius:2px;"></div>
<div style="left:1690px;top:70px;width:88px;height:86px;background:#111111;border-radius:0 0 2px 2px;"></div>
<div style="left:1690px;top:161px;width:88px;height:86px;background:#111111;border-radius:0 0 2px 2px;"></div>
<div style="left:1690px;top:252px;width:88px;height:86px;background:#111111;border-radius:0 0 2px 2px;"></div>
<div style="left:1690px;top:343px;width:88px;height:86px;background:#111111;border-radius:0 0 2px 2px;"></div>
<div style="left:1690px;top:434px;width:88px;height:86px;background:#111111;border-radius:0 0 2px 2px;"></div>
<div style="left:1780px;top:45px;width:88px;height:20px;background:#131313;border-radius:2px;"></div>
<div style="left:1780px;top:70px;width:88px;height:86px;background:#111111;border-radius:0 0 2px 2px;"></div>
<div style="left:1780px;top:161px;width:88px;height:86px;background:#111111;border-radius:0 0 2px 2px;"></div>
<div style="left:1780px;top:252px;width:88px;height:86px;background:#111111;border-radius:0 0 2px 2px;"></div>
<div style="left:1780px;top:343px;width:88px;height:86px;background:#111111;border-radius:0 0 2px 2px;"></div>
<div style="left:1780px;top:434px;width:88px;height:86px;background:#111111;border-radius:0 0 2px 2px;"></div>
<div style="left:1870px;top:45px;width:88px;height:20px;background:#131313;border-radius:2px;"></div>
<div style="left:1870px;top:70px;width:88px;height:86px;background:#111111;border-radius:0 0 2px 2px;"></div>
<div style="left:1870px;top:161px;width:88px;height:86px;background:#111111;border-radius:0 0 2px 2px;"></div>
<div style="left:1870px;top:252px;width:88px;height:86px;background:#111111;border-radius:0 0 2px 2px;"></div>
<div style="left:1870px;top:343px;width:88px;height:86px;background:#111111;border-radius:0 0 2px 2px;"></div>
<div style="left:1870px;top:434px;width:88px;height:86px;background:#111111;border-radius:0 0 2px 2px;"></div>
<div style="left:430px;top:70px;width:88px;height:86px;background:#2e665c;border-radius:2px;"></div>
<svg style="left:430px;top:78px" width="88" height="50" viewBox="0 0 88 50"><circle cx="46" cy="25" r="6.5" fill="none" stroke="#7a5f57" stroke-width="3"/><path d="M8 16 H30" stroke="#7fb0a5" stroke-width="0.8" stroke-dasharray="2 5"/></svg>
<div style="left:430px;top:136px;width:88px;height:20px;background:#39706a;border-radius:0 0 2px 2px;"></div>
<div style="left:435px;top:136px;width:84px;height:20px;line-height:20px;font-size:11.4px;color:#7ba79f;text-align:left;font-weight:normal;white-space:nowrap;overflow:hidden;">RedCode_01</div>
<div style="left:430px;top:78px;width:88px;height:50px;line-height:50px;font-size:10.7px;color:#ffffff;text-align:center;font-weight:normal;white-space:nowrap;overflow:hidden;">1/G#0</div>
<div style="left:520px;top:70px;width:88px;height:86px;background:#2e665c;border-radius:2px;"></div>
<svg style="left:520px;top:78px" width="88" height="50" viewBox="0 0 88 50"><path d="M44 4.5 L62 15 V35 L44 45.5 L26 35 V15 Z" fill="none" stroke="#7a5f57" stroke-width="2"/></svg>
<div style="left:520px;top:136px;width:88px;height:20px;background:#39706a;border-radius:0 0 2px 2px;"></div>
<div style="left:525px;top:136px;width:84px;height:20px;line-height:20px;font-size:11.4px;color:#7ba79f;text-align:left;font-weight:normal;white-space:nowrap;overflow:hidden;">RedCode_09</div>
<div style="left:520px;top:78px;width:88px;height:50px;line-height:50px;font-size:10.7px;color:#ffffff;text-align:center;font-weight:normal;white-space:nowrap;overflow:hidden;">1/A0</div>
<div style="left:610px;top:70px;width:88px;height:86px;background:#2e665c;border-radius:2px;"></div>
<svg style="left:610px;top:78px" width="88" height="50" viewBox="0 0 88 50"><path d="M39 9 H28 V41 H39 M49 9 H60 V41 H49" fill="none" stroke="#7a5f57" stroke-width="4"/><path d="M34 20 V30 M54 20 V30" stroke="#7fc4b4" stroke-width="1" stroke-opacity="0.6"/></svg>
<div style="left:610px;top:136px;width:88px;height:20px;background:#39706a;border-radius:0 0 2px 2px;"></div>
<div style="left:615px;top:136px;width:84px;height:20px;line-height:20px;font-size:11.4px;color:#7ba79f;text-align:left;font-weight:normal;white-space:nowrap;overflow:hidden;">RedCode_10</div>
<div style="left:610px;top:78px;width:88px;height:50px;line-height:50px;font-size:10.7px;color:#ffffff;text-align:center;font-weight:normal;white-space:nowrap;overflow:hidden;">1/A#0</div>
<div style="left:700px;top:70px;width:88px;height:86px;background:#2e665c;border-radius:2px;"></div>
<svg style="left:700px;top:78px" width="88" height="50" viewBox="0 0 88 50"><path d="M34 0 L8 25 L34 50 M54 0 L80 25 L54 50" fill="none" stroke="#7a5f57" stroke-width="3"/><path d="M44 0 L68 25 L44 50 L20 25 Z" fill="none" stroke="#7a5f57" stroke-width="3.2"/></svg>
<div style="left:700px;top:136px;width:88px;height:20px;background:#39706a;border-radius:0 0 2px 2px;"></div>
<div style="left:705px;top:136px;width:84px;height:20px;line-height:20px;font-size:11.4px;color:#7ba79f;text-align:left;font-weight:normal;white-space:nowrap;overflow:hidden;">RedCode_12</div>
<div style="left:700px;top:78px;width:88px;height:50px;line-height:50px;font-size:10.7px;color:#ffffff;text-align:center;font-weight:normal;white-space:nowrap;overflow:hidden;">1/B0</div>
<div style="left:790px;top:70px;width:88px;height:86px;background:#2e665c;border-radius:2px;"></div>
<svg style="left:790px;top:78px" width="88" height="50" viewBox="0 0 88 50"><path d="M0 21 H6 L9 24 H18 L21 21 H67 L70 24 H78 L81 21 H88" fill="none" stroke="#7a5f57" stroke-width="0.9"/><path d="M0 30 H20 M68 30 H88" stroke="#7fc4b4" stroke-opacity="0.6" stroke-width="0.8" stroke-dasharray="2 1.5"/><path d="M44 20 L48 25 L44 30 L40 25 Z" fill="#7fc4b4" fill-opacity="0.5"/></svg>
<div style="left:790px;top:136px;width:88px;height:20px;background:#39706a;border-radius:0 0 2px 2px;"></div>
<div style="left:795px;top:136px;width:84px;height:20px;line-height:20px;font-size:11.4px;color:#7ba79f;text-align:left;font-weight:normal;white-space:nowrap;overflow:hidden;">RedCode_14</div>
<div style="left:790px;top:78px;width:88px;height:50px;line-height:50px;font-size:10.7px;color:#ffffff;text-align:center;font-weight:normal;white-space:nowrap;overflow:hidden;">1/C1</div>
<div style="left:880px;top:70px;width:88px;height:86px;background:#2e665c;border-radius:2px;"></div>
<svg style="left:880px;top:78px" width="88" height="50" viewBox="0 0 88 50"><path d="M44 6 L60 15.5 V34.5 L44 44 L28 34.5 V15.5 Z" fill="none" stroke="#7a5f57" stroke-width="1.8"/><path d="M44 2 L64 13.5 M44 2 L24 13.5 M24 37 L44 48 L64 37" fill="none" stroke="#7fc4b4" stroke-width="0.8" stroke-opacity="0.7"/><path d="M0 19 H14 M0 24 H18 M70 19 H88 M70 24 H88" stroke="#6fb0a0" stroke-width="1.6"/><path d="M0 30 H14 M74 30 H88" stroke="#7a5f57" stroke-width="1.2"/><path d="M36 0 V8 M41 0 V6 M47 0 V6 M52 0 V8 M36 42 V50 M41 44 V50 M47 44 V50 M52 42 V50" stroke="#7a5f57" stroke-width="1"/></svg>
<div style="left:880px;top:136px;width:88px;height:20px;background:#39706a;border-radius:0 0 2px 2px;"></div>
<div style="left:885px;top:136px;width:84px;height:20px;line-height:20px;font-size:11.4px;color:#7ba79f;text-align:left;font-weight:normal;white-space:nowrap;overflow:hidden;">RedCode_13</div>
<div style="left:880px;top:78px;width:88px;height:50px;line-height:50px;font-size:10.7px;color:#ffffff;text-align:center;font-weight:normal;white-space:nowrap;overflow:hidden;">1/C#1</div>
<div style="left:970px;top:70px;width:88px;height:86px;background:#2e665c;border-radius:2px;"></div>
<svg style="left:970px;top:78px" width="88" height="50" viewBox="0 0 88 50"><rect x="68" y="30" width="11" height="8" fill="none" stroke="#8fc0b5" stroke-width="0.8" stroke-opacity="0.6"/><path d="M10 22 H16" stroke="#8fc0b5" stroke-opacity="0.5"/><path d="M44 4 H62" stroke="#8fc0b5" stroke-width="1" stroke-opacity="0.4" stroke-dasharray="1 1"/></svg>
<div style="left:970px;top:136px;width:88px;height:20px;background:#39706a;border-radius:0 0 2px 2px;"></div>
<div style="left:975px;top:136px;width:84px;height:20px;line-height:20px;font-size:11.4px;color:#7ba79f;text-align:left;font-weight:normal;white-space:nowrap;overflow:hidden;">RedCode_16</div>
<div style="left:970px;top:78px;width:88px;height:50px;line-height:50px;font-size:10.7px;color:#ffffff;text-align:center;font-weight:normal;white-space:nowrap;overflow:hidden;">1/D1</div>
<div style="left:1060px;top:70px;width:88px;height:86px;background:#2e665c;border-radius:2px;"></div>
<svg style="left:1060px;top:78px" width="88" height="50" viewBox="0 0 88 50"><rect x="5.6" y="29.3" width="1.2" height="1" fill="#7a5f57"/><rect x="45.2" y="47.9" width="1.2" height="1" fill="#7a5f57"/><rect x="83.8" y="31.5" width="1.2" height="1" fill="#6a9a90"/><rect x="3.7" y="36.3" width="1.2" height="1" fill="#6a9a90"/><rect x="52.8" y="19.1" width="1.2" height="1" fill="#6a9a90"/><rect x="57.0" y="35.8" width="1.2" height="1" fill="#6a9a90"/><rect x="47.9" y="40.0" width="1.2" height="1" fill="#6a9a90"/><rect x="49.5" y="7.7" width="1.2" height="1" fill="#6a9a90"/><rect x="15.0" y="29.1" width="1.2" height="1" fill="#6a9a90"/><rect x="66.0" y="29.3" width="1.2" height="1" fill="#6a9a90"/><rect x="45.5" y="11.5" width="1.2" height="1" fill="#6a9a90"/><rect x="73.9" y="20.0" width="1.2" height="1" fill="#7a5f57"/><rect x="39.5" y="31.6" width="1.2" height="1" fill="#6a9a90"/><rect x="81.1" y="3.4" width="1.2" height="1" fill="#7a5f57"/><rect x="45.4" y="3.2" width="1.2" height="1" fill="#6a9a90"/><rect x="50.1" y="15.6" width="1.2" height="1" fill="#6a9a90"/><rect x="31.3" y="18.7" width="1.2" height="1" fill="#6a9a90"/><rect x="24.2" y="23.6" width="1.2" height="1" fill="#7a5f57"/><rect x="6.7" y="33.9" width="1.2" height="1" fill="#7a5f57"/><rect x="15.5" y="13.4" width="1.2" height="1" fill="#6a9a90"/><rect x="14.3" y="34.4" width="1.2" height="1" fill="#6a9a90"/><rect x="83.5" y="3.0" width="1.2" height="1" fill="#7a5f57"/><rect x="58.5" y="41.6" width="1.2" height="1" fill="#7a5f57"/><rect x="74.8" y="3.0" width="1.2" height="1" fill="#6a9a90"/><rect x="4.0" y="8.6" width="1.2" height="1" fill="#6a9a90"/><rect x="39.5" y="44.7" width="1.2" height="1" fill="#6a9a90"/><rect x="39.5" y="26.6" width="1.2" height="1" fill="#6a9a90"/><rect x="16.0" y="21.1" width="1.2" height="1" fill="#6a9a90"/><rect x="36.6" y="39.6" width="1.2" height="1" fill="#7a5f57"/><rect x="11.1" y="48.1" width="1.2" height="1" fill="#7a5f57"/><rect x="14.0" y="43.5" width="1.2" height="1" fill="#6a9a90"/><rect x="76.0" y="42.5" width="1.2" height="1" fill="#7a5f57"/><rect x="50.3" y="31.9" width="1.2" height="1" fill="#7a5f57"/><rect x="52.8" y="18.0" width="1.2" height="1" fill="#7a5f57"/><rect x="35.2" y="27.6" width="1.2" height="1" fill="#7a5f57"/><rect x="64.0" y="18.7" width="1.2" height="1" fill="#6a9a90"/><rect x="37.0" y="28.2" width="1.2" height="1" fill="#6a9a90"/><rect x="76.4" y="25.9" width="1.2" height="1" fill="#7a5f57"/><rect x="8.3" y="41.7" width="1.2" height="1" fill="#7a5f57"/><rect x="24.7" y="25.4" width="1.2" height="1" fill="#7a5f57"/><rect x="55.7" y="43.7" width="1.2" height="1" fill="#6a9a90"/><rect x="61.0" y="36.0" width="1.2" height="1" fill="#6a9a90"/><rect x="3.0" y="2.6" width="1.2" height="1" fill="#6a9a90"/><rect x="65.8" y="40.7" width="1.2" height="1" fill="#6a9a90"/><rect x="21.9" y="2.1" width="1.2" height="1" fill="#6a9a90"/><rect x="5.6" y="32.9" width="1.2" height="1" fill="#7a5f57"/><rect x="60.1" y="37.0" width="1.2" height="1" fill="#6a9a90"/><rect x="45.5" y="24.0" width="1.2" height="1" fill="#7a5f57"/><rect x="23.2" y="3.2" width="1.2" height="1" fill="#6a9a90"/><rect x="14.5" y="37.2" width="1.2" height="1" fill="#7a5f57"/><rect x="40.7" y="9.9" width="1.2" height="1" fill="#6a9a90"/><rect x="12.2" y="37.5" width="1.2" height="1" fill="#6a9a90"/><rect x="47.9" y="26.8" width="1.2" height="1" fill="#6a9a90"/><rect x="60.5" y="22.4" width="1.2" height="1" fill="#6a9a90"/><rect x="17.3" y="6.7" width="1.2" height="1" fill="#6a9a90"/><rect x="18.0" y="10.4" width="1.2" height="1" fill="#6a9a90"/><rect x="84.2" y="7.6" width="1.2" height="1" fill="#7a5f57"/><rect x="22.8" y="17.6" width="1.2" height="1" fill="#6a9a90"/><rect x="47.7" y="11.7" width="1.2" height="1" fill="#6a9a90"/><rect x="16.9" y="16.3" width="1.2" height="1" fill="#6a9a90"/><rect x="64.5" y="34.1" width="1.2" height="1" fill="#7a5f57"/><rect x="20.3" y="34.0" width="1.2" height="1" fill="#7a5f57"/><rect x="19.4" y="26.3" width="1.2" height="1" fill="#6a9a90"/><rect x="34.3" y="43.0" width="1.2" height="1" fill="#7a5f57"/><rect x="82.7" y="18.0" width="1.2" height="1" fill="#7a5f57"/><rect x="34.1" y="13.2" width="1.2" height="1" fill="#7a5f57"/><rect x="29.8" y="20.2" width="1.2" height="1" fill="#7a5f57"/><rect x="61.7" y="48.3" width="1.2" height="1" fill="#7a5f57"/><rect x="13.9" y="17.1" width="1.2" height="1" fill="#6a9a90"/><rect x="31.0" y="36.3" width="1.2" height="1" fill="#7a5f57"/><rect x="20.0" y="4.3" width="1.2" height="1" fill="#7a5f57"/><rect x="42.6" y="33.9" width="1.2" height="1" fill="#6a9a90"/><rect x="12.8" y="12.1" width="1.2" height="1" fill="#6a9a90"/><rect x="72.9" y="31.1" width="1.2" height="1" fill="#7a5f57"/><rect x="64.0" y="46.4" width="1.2" height="1" fill="#7a5f57"/><rect x="51.9" y="9.4" width="1.2" height="1" fill="#6a9a90"/><rect x="64.3" y="30.2" width="1.2" height="1" fill="#6a9a90"/><rect x="50.4" y="47.5" width="1.2" height="1" fill="#6a9a90"/><rect x="8.2" y="17.7" width="1.2" height="1" fill="#7a5f57"/><rect x="60.8" y="7.9" width="1.2" height="1" fill="#6a9a90"/><rect x="2.5" y="47.7" width="1.2" height="1" fill="#6a9a90"/><rect x="62.6" y="35.4" width="1.2" height="1" fill="#6a9a90"/><rect x="5.5" y="11.7" width="1.2" height="1" fill="#7a5f57"/><rect x="64.2" y="8.9" width="1.2" height="1" fill="#7a5f57"/><rect x="24.1" y="22.9" width="1.2" height="1" fill="#7a5f57"/><rect x="32.8" y="45.8" width="1.2" height="1" fill="#6a9a90"/><rect x="9.7" y="39.3" width="1.2" height="1" fill="#6a9a90"/><rect x="67.2" y="15.0" width="1.2" height="1" fill="#6a9a90"/><rect x="80.6" y="18.8" width="1.2" height="1" fill="#6a9a90"/><rect x="35.1" y="44.6" width="1.2" height="1" fill="#7a5f57"/></svg>
<div style="left:1060px;top:136px;width:88px;height:20px;background:#39706a;border-radius:0 0 2px 2px;"></div>
<div style="left:1065px;top:136px;width:84px;height:20px;line-height:20px;font-size:11.4px;color:#7ba79f;text-align:left;font-weight:normal;white-space:nowrap;overflow:hidden;">RedCode_57</div>
<div style="left:1060px;top:78px;width:88px;height:50px;line-height:50px;font-size:10.7px;color:#ffffff;text-align:center;font-weight:normal;white-space:nowrap;overflow:hidden;">1/D#1</div>
<div style="left:1150px;top:70px;width:88px;height:86px;background:#2e665c;border-radius:2px;"></div>
<div style="left:1150px;top:136px;width:88px;height:20px;background:#39706a;border-radius:0 0 2px 2px;"></div>
<div style="left:1240px;top:70px;width:88px;height:86px;background:#2e665c;border-radius:2px;"></div>
<div style="left:1240px;top:136px;width:88px;height:20px;background:#39706a;border-radius:0 0 2px 2px;"></div>
<div style="left:1330px;top:70px;width:88px;height:86px;background:#2e665c;border-radius:2px;"></div>
<div style="left:1330px;top:136px;width:88px;height:20px;background:#39706a;border-radius:0 0 2px 2px;"></div>
<div style="left:430px;top:161px;width:88px;height:86px;background:#2e665c;border-radius:2px;"></div>
<svg style="left:430px;top:169px" width="88" height="50" viewBox="0 0 88 50"><path d="M8 22 H30" stroke="#7a5f57" stroke-width="1"/><circle cx="55" cy="10" r="1.1" fill="#7fb0a5"/><circle cx="77" cy="10" r="1.1" fill="#7fb0a5"/><circle cx="77" cy="21" r="1" fill="#7fb0a5"/><circle cx="55" cy="21" r="0.8" fill="#7fb0a5"/></svg>
<div style="left:430px;top:227px;width:88px;height:20px;background:#39706a;border-radius:0 0 2px 2px;"></div>
<div style="left:435px;top:227px;width:84px;height:20px;line-height:20px;font-size:11.4px;color:#7ba79f;text-align:left;font-weight:normal;white-space:nowrap;overflow:hidden;">RedCode_49</div>
<div style="left:430px;top:169px;width:88px;height:50px;line-height:50px;font-size:10.7px;color:#ffffff;text-align:center;font-weight:normal;white-space:nowrap;overflow:hidden;">1/C0</div>
<div style="left:520px;top:161px;width:88px;height:86px;background:#2e665c;border-radius:2px;"></div>
<svg style="left:520px;top:169px" width="88" height="50" viewBox="0 0 88 50"><path d="M44 4 L80 25 L44 46 L8 25 Z M44 12 L66 25 L44 38 L22 25 Z M0 10 L14 25 L0 40 M88 10 L74 25 L88 40" fill="none" stroke="#5d9588" stroke-width="0.8" stroke-dasharray="2 3"/></svg>
<div style="left:520px;top:227px;width:88px;height:20px;background:#39706a;border-radius:0 0 2px 2px;"></div>
<div style="left:525px;top:227px;width:84px;height:20px;line-height:20px;font-size:11.4px;color:#7ba79f;text-align:left;font-weight:normal;white-space:nowrap;overflow:hidden;">RedCode_37</div>
<div style="left:520px;top:169px;width:88px;height:50px;line-height:50px;font-size:10.7px;color:#ffffff;text-align:center;font-weight:normal;white-space:nowrap;overflow:hidden;">1/C#0</div>
<div style="left:610px;top:161px;width:88px;height:86px;background:#2e665c;border-radius:2px;"></div>
<svg style="left:610px;top:169px" width="88" height="50" viewBox="0 0 88 50"><path d="M2 8 H86 M6 16 H82 M2 34 H86 M10 42 H80" stroke="#5f978a" stroke-width="0.8" stroke-dasharray="3 4"/><path d="M20 12 H36 M50 38 H70" stroke="#7a5f57" stroke-width="0.8"/></svg>
<div style="left:610px;top:227px;width:88px;height:20px;background:#39706a;border-radius:0 0 2px 2px;"></div>
<div style="left:615px;top:227px;width:84px;height:20px;line-height:20px;font-size:11.4px;color:#7ba79f;text-align:left;font-weight:normal;white-space:nowrap;overflow:hidden;">RedCode_45</div>
<div style="left:610px;top:169px;width:88px;height:50px;line-height:50px;font-size:10.7px;color:#ffffff;text-align:center;font-weight:normal;white-space:nowrap;overflow:hidden;">1/D0</div>
<div style="left:700px;top:161px;width:88px;height:86px;background:#2e665c;border-radius:2px;"></div>
<svg style="left:700px;top:169px" width="88" height="50" viewBox="0 0 88 50"><path d="M44 2 L84 25 L44 48 L4 25 Z M44 10 L70 25 L44 40 L18 25 Z" fill="none" stroke="#5a9386" stroke-width="0.8" stroke-dasharray="2 3"/><path d="M38 20 H50 L54 25 L50 30 H38 L34 25 Z" fill="none" stroke="#7a5f57" stroke-width="0.8"/></svg>
<div style="left:700px;top:227px;width:88px;height:20px;background:#39706a;border-radius:0 0 2px 2px;"></div>
<div style="left:705px;top:227px;width:84px;height:20px;line-height:20px;font-size:11.4px;color:#7ba79f;text-align:left;font-weight:normal;white-space:nowrap;overflow:hidden;">RedCode_26</div>
<div style="left:700px;top:169px;width:88px;height:50px;line-height:50px;font-size:10.7px;color:#ffffff;text-align:center;font-weight:normal;white-space:nowrap;overflow:hidden;">1/D#0</div>
<div style="left:790px;top:161px;width:88px;height:86px;background:#2e665c;border-radius:2px;"></div>
<svg style="left:790px;top:169px" width="88" height="50" viewBox="0 0 88 50"><path d="M22 2 A30 30 0 0 0 22 48" fill="none" stroke="#6ea598" stroke-width="1.2"/><circle cx="44" cy="25" r="14" fill="none" stroke="#5a9386" stroke-width="0.7" stroke-dasharray="1 2"/><path d="M60 40 L64 36" stroke="#7a5f57" stroke-width="1.2"/></svg>
<div style="left:790px;top:227px;width:88px;height:20px;background:#39706a;border-radius:0 0 2px 2px;"></div>
<div style="left:795px;top:227px;width:84px;height:20px;line-height:20px;font-size:11.4px;color:#7ba79f;text-align:left;font-weight:normal;white-space:nowrap;overflow:hidden;">RedCode_59</div>
<div style="left:790px;top:169px;width:88px;height:50px;line-height:50px;font-size:10.7px;color:#ffffff;text-align:center;font-weight:normal;white-space:nowrap;overflow:hidden;">1/E0</div>
<div style="left:880px;top:161px;width:88px;height:86px;background:#2e665c;border-radius:2px;"></div>
<svg style="left:880px;top:169px" width="88" height="50" viewBox="0 0 88 50"><rect x="27.9" y="21.9" width="1" height="1" fill="#7a5f57"/><rect x="52.4" y="17.4" width="1" height="1" fill="#5f9a8d"/><rect x="27.2" y="24.3" width="1" height="1" fill="#5f9a8d"/><rect x="11.2" y="36.9" width="1" height="1" fill="#7a5f57"/><rect x="60.1" y="32.5" width="1" height="1" fill="#5f9a8d"/><rect x="46.7" y="35.3" width="1" height="1" fill="#5f9a8d"/><rect x="60.3" y="24.9" width="1" height="1" fill="#7a5f57"/><rect x="28.9" y="17.5" width="1" height="1" fill="#5f9a8d"/><rect x="41.5" y="12.6" width="1" height="1" fill="#5f9a8d"/><rect x="53.5" y="35.7" width="1" height="1" fill="#7a5f57"/><rect x="17.2" y="35.8" width="1" height="1" fill="#5f9a8d"/><rect x="33.1" y="22.2" width="1" height="1" fill="#5f9a8d"/><rect x="36.9" y="16.7" width="1" height="1" fill="#7a5f57"/><rect x="31.4" y="24.4" width="1" height="1" fill="#5f9a8d"/><rect x="17.1" y="35.4" width="1" height="1" fill="#5f9a8d"/><rect x="13.5" y="23.2" width="1" height="1" fill="#7a5f57"/><rect x="45.0" y="9.6" width="1" height="1" fill="#5f9a8d"/><rect x="32.6" y="15.9" width="1" height="1" fill="#5f9a8d"/><rect x="20.7" y="12.0" width="1" height="1" fill="#7a5f57"/><rect x="74.0" y="38.2" width="1" height="1" fill="#5f9a8d"/><rect x="37.4" y="29.5" width="1" height="1" fill="#5f9a8d"/><rect x="53.8" y="33.3" width="1" height="1" fill="#7a5f57"/><rect x="60.9" y="29.8" width="1" height="1" fill="#5f9a8d"/><rect x="20.5" y="33.6" width="1" height="1" fill="#5f9a8d"/><rect x="8.0" y="29.8" width="1" height="1" fill="#7a5f57"/><rect x="35.3" y="16.7" width="1" height="1" fill="#5f9a8d"/><rect x="64.3" y="12.4" width="1" height="1" fill="#5f9a8d"/><rect x="73.4" y="21.2" width="1" height="1" fill="#7a5f57"/><rect x="55.8" y="23.4" width="1" height="1" fill="#5f9a8d"/><rect x="37.3" y="48.1" width="1" height="1" fill="#5f9a8d"/><rect x="80.1" y="28.1" width="1" height="1" fill="#7a5f57"/><rect x="52.3" y="21.8" width="1" height="1" fill="#5f9a8d"/><rect x="65.1" y="43.1" width="1" height="1" fill="#5f9a8d"/><rect x="77.5" y="19.6" width="1" height="1" fill="#7a5f57"/><rect x="39.0" y="6.2" width="1" height="1" fill="#5f9a8d"/><rect x="42.1" y="28.1" width="1" height="1" fill="#5f9a8d"/><rect x="19.6" y="9.5" width="1" height="1" fill="#7a5f57"/><rect x="65.4" y="20.6" width="1" height="1" fill="#5f9a8d"/><rect x="55.1" y="25.4" width="1" height="1" fill="#5f9a8d"/><rect x="31.7" y="27.5" width="1" height="1" fill="#7a5f57"/><rect x="55.5" y="26.2" width="1" height="1" fill="#5f9a8d"/><rect x="34.5" y="25.0" width="1" height="1" fill="#5f9a8d"/><rect x="52.2" y="29.3" width="1" height="1" fill="#7a5f57"/><rect x="75.0" y="29.1" width="1" height="1" fill="#5f9a8d"/><rect x="52.0" y="19.5" width="1" height="1" fill="#5f9a8d"/><rect x="20.8" y="9.0" width="1" height="1" fill="#7a5f57"/><rect x="44.7" y="35.1" width="1" height="1" fill="#5f9a8d"/><rect x="66.7" y="12.0" width="1" height="1" fill="#5f9a8d"/><rect x="20.8" y="11.4" width="1" height="1" fill="#7a5f57"/><rect x="29.8" y="20.7" width="1" height="1" fill="#5f9a8d"/><rect x="31.4" y="7.1" width="1" height="1" fill="#5f9a8d"/><rect x="59.1" y="28.4" width="1" height="1" fill="#7a5f57"/><rect x="34.4" y="45.8" width="1" height="1" fill="#5f9a8d"/><rect x="37.4" y="41.7" width="1" height="1" fill="#5f9a8d"/><rect x="27.5" y="29.4" width="1" height="1" fill="#7a5f57"/><rect x="8.5" y="25.0" width="1" height="1" fill="#5f9a8d"/><rect x="34.0" y="15.5" width="1" height="1" fill="#5f9a8d"/><rect x="53.9" y="33.4" width="1" height="1" fill="#7a5f57"/><rect x="17.4" y="28.1" width="1" height="1" fill="#5f9a8d"/><rect x="60.2" y="24.9" width="1" height="1" fill="#5f9a8d"/></svg>
<div style="left:880px;top:227px;width:88px;height:20px;background:#39706a;border-radius:0 0 2px 2px;"></div>
<div style="left:885px;top:227px;width:84px;height:20px;line-height:20px;font-size:11.4px;color:#7ba79f;text-align:left;font-weight:normal;white-space:nowrap;overflow:hidden;">RedCode_29</div>
<div style="left:880px;top:169px;width:88px;height:50px;line-height:50px;font-size:10.7px;color:#ffffff;text-align:center;font-weight:normal;white-space:nowrap;overflow:hidden;">1/F0</div>
<div style="left:970px;top:161px;width:88px;height:86px;background:#2e665c;border-radius:2px;"></div>
<svg style="left:970px;top:169px" width="88" height="50" viewBox="0 0 88 50"><path d="M5 5 L20 15 M70 8 L84 20 M10 40 L25 30 M60 44 L80 34 M30 10 L36 14 M52 36 L58 40" stroke="#7a5f57" stroke-width="1" stroke-opacity="0.8"/><circle cx="44" cy="25" r="16" fill="none" stroke="#6a9f92" stroke-width="0.7" stroke-dasharray="1 3"/></svg>
<div style="left:970px;top:227px;width:88px;height:20px;background:#39706a;border-radius:0 0 2px 2px;"></div>
<div style="left:975px;top:227px;width:84px;height:20px;line-height:20px;font-size:11.4px;color:#7ba79f;text-align:left;font-weight:normal;white-space:nowrap;overflow:hidden;">RedCode_52</div>
<div style="left:970px;top:169px;width:88px;height:50px;line-height:50px;font-size:10.7px;color:#ffffff;text-align:center;font-weight:normal;white-space:nowrap;overflow:hidden;">1/F#0</div>
<div style="left:1060px;top:161px;width:88px;height:86px;background:#2e665c;border-radius:2px;"></div>
<svg style="left:1060px;top:169px" width="88" height="50" viewBox="0 0 88 50"><path d="M8 10 H80 M2 18 H60 M10 28 H86 M5 36 H70 M20 44 H76" stroke="#7a5f57" stroke-width="1.3" stroke-dasharray="4 2" stroke-opacity="0.8"/></svg>
<div style="left:1060px;top:227px;width:88px;height:20px;background:#39706a;border-radius:0 0 2px 2px;"></div>
<div style="left:1065px;top:227px;width:84px;height:20px;line-height:20px;font-size:11.4px;color:#7ba79f;text-align:left;font-weight:normal;white-space:nowrap;overflow:hidden;">RedCode_41</div>
<div style="left:1060px;top:169px;width:88px;height:50px;line-height:50px;font-size:10.7px;color:#ffffff;text-align:center;font-weight:normal;white-space:nowrap;overflow:hidden;">1/G0</div>
<div style="left:1150px;top:161px;width:88px;height:86px;background:#2e665c;border-radius:2px;"></div>
<div style="left:1150px;top:227px;width:88px;height:20px;background:#39706a;border-radius:0 0 2px 2px;"></div>
<div style="left:1240px;top:161px;width:88px;height:86px;background:#2e665c;border-radius:2px;"></div>
<div style="left:1240px;top:227px;width:88px;height:20px;background:#39706a;border-radius:0 0 2px 2px;"></div>
<div style="left:1330px;top:161px;width:88px;height:86px;background:#2e665c;border-radius:2px;"></div>
<div style="left:1330px;top:227px;width:88px;height:20px;background:#39706a;border-radius:0 0 2px 2px;"></div>
<div style="left:430px;top:252px;width:88px;height:86px;background:#2e665c;border-radius:2px;"></div>
<svg style="left:430px;top:260px" width="88" height="50" viewBox="0 0 88 50"><rect x="0.0" y="0" width="1" height="50" fill="#7a5f57"/><rect x="2.5" y="0" width="1" height="50" fill="#7a5f57"/><rect x="5.5" y="0" width="1" height="50" fill="#7a5f57"/><rect x="9.0" y="0" width="1.5" height="50" fill="#7a5f57"/><rect x="12.5" y="0" width="1" height="50" fill="#7a5f57"/><rect x="16.0" y="0" width="1" height="50" fill="#7a5f57"/><rect x="19.5" y="0" width="1" height="50" fill="#7a5f57"/><rect x="22.5" y="0" width="2" height="50" fill="#7a5f57"/><rect x="27.0" y="0" width="1.5" height="50" fill="#7a5f57"/><rect x="31.0" y="0" width="2" height="50" fill="#7a5f57"/><rect x="35.5" y="0" width="1.5" height="50" fill="#7a5f57"/><rect x="38.5" y="0" width="1" height="50" fill="#7a5f57"/><rect x="41.5" y="0" width="2" height="50" fill="#7a5f57"/><rect x="45.5" y="0" width="2" height="50" fill="#7a5f57"/><rect x="49.5" y="0" width="1" height="50" fill="#7a5f57"/><rect x="53.0" y="0" width="1" height="50" fill="#7a5f57"/><rect x="55.5" y="0" width="1" height="50" fill="#7a5f57"/><rect x="58.0" y="0" width="1" height="50" fill="#7a5f57"/><rect x="61.0" y="0" width="1" height="50" fill="#7a5f57"/><rect x="63.5" y="0" width="1.5" height="50" fill="#7a5f57"/><rect x="67.5" y="0" width="1" height="50" fill="#7a5f57"/><rect x="70.5" y="0" width="2" height="50" fill="#7a5f57"/><rect x="75.0" y="0" width="1.5" height="50" fill="#7a5f57"/><rect x="79.0" y="0" width="1.5" height="50" fill="#7a5f57"/><rect x="82.5" y="0" width="2" height="50" fill="#7a5f57"/><rect x="86.0" y="0" width="2" height="50" fill="#7a5f57"/><path d="M6 10 V16 M6 22 V30 M6 36 V48" stroke="#7fc4b4" stroke-width="0.9" stroke-opacity="0.8"/><path d="M10 6 V16 M10 22 V30 M10 36 V48" stroke="#7fc4b4" stroke-width="0.9" stroke-opacity="0.8"/><path d="M17 10 V16 M17 22 V30 M17 36 V48" stroke="#7fc4b4" stroke-width="0.9" stroke-opacity="0.8"/><path d="M25 10 V16 M25 22 V30 M25 36 V48" stroke="#7fc4b4" stroke-width="0.9" stroke-opacity="0.8"/><path d="M33 2 V16 M33 22 V30 M33 36 V48" stroke="#7fc4b4" stroke-width="0.9" stroke-opacity="0.8"/><path d="M40 6 V16 M40 22 V30 M40 36 V48" stroke="#7fc4b4" stroke-width="0.9" stroke-opacity="0.8"/><path d="M52 6 V16 M52 22 V30 M52 36 V48" stroke="#7fc4b4" stroke-width="0.9" stroke-opacity="0.8"/><path d="M60 6 V16 M60 22 V30 M60 36 V48" stroke="#7fc4b4" stroke-width="0.9" stroke-opacity="0.8"/><path d="M67 10 V16 M67 22 V30 M67 36 V48" stroke="#7fc4b4" stroke-width="0.9" stroke-opacity="0.8"/><path d="M75 10 V16 M75 22 V30 M75 36 V48" stroke="#7fc4b4" stroke-width="0.9" stroke-opacity="0.8"/><path d="M82 6 V16 M82 22 V30 M82 36 V48" stroke="#7fc4b4" stroke-width="0.9" stroke-opacity="0.8"/></svg>
<div style="left:430px;top:318px;width:88px;height:20px;background:#39706a;border-radius:0 0 2px 2px;"></div>
<div style="left:435px;top:318px;width:84px;height:20px;line-height:20px;font-size:11.4px;color:#7ba79f;text-align:left;font-weight:normal;white-space:nowrap;overflow:hidden;">RedCode_02</div>
<div style="left:430px;top:260px;width:88px;height:50px;line-height:50px;font-size:10.7px;color:#ffffff;text-align:center;font-weight:normal;white-space:nowrap;overflow:hidden;">1/E-1</div>
<div style="left:520px;top:252px;width:88px;height:86px;background:#2e665c;border-radius:2px;"></div>
<svg style="left:520px;top:260px" width="88" height="50" viewBox="0 0 88 50"><rect x="0" y="0" width="88" height="50" fill="#7a5f57"/><path d="M44 3 L66 25 L44 47 L22 25 Z" fill="none" stroke="#2e665c" stroke-width="2.2"/><path d="M44 -3 L72 25 L44 53 L16 25 Z" fill="none" stroke="#2e665c" stroke-width="2.2"/><path d="M44 -9 L78 25 L44 59 L10 25 Z" fill="none" stroke="#2e665c" stroke-width="2.2"/><path d="M44 -15 L84 25 L44 65 L4 25 Z" fill="none" stroke="#2e665c" stroke-width="2.2"/><path d="M44 -21 L90 25 L44 71 L-2 25 Z" fill="none" stroke="#2e665c" stroke-width="2.2"/><path d="M44 -27 L96 25 L44 77 L-8 25 Z" fill="none" stroke="#2e665c" stroke-width="2.2"/><path d="M44 -33 L102 25 L44 83 L-14 25 Z" fill="none" stroke="#2e665c" stroke-width="2.2"/><path d="M44 -39 L108 25 L44 89 L-20 25 Z" fill="none" stroke="#2e665c" stroke-width="2.2"/><path d="M44 5 L64 25 L44 45 L24 25 Z" fill="#2e665c"/><path d="M44 11 L58 25 L44 39 L30 25 Z" fill="none" stroke="#7a5f57" stroke-width="2"/></svg>
<div style="left:520px;top:318px;width:88px;height:20px;background:#39706a;border-radius:0 0 2px 2px;"></div>
<div style="left:525px;top:318px;width:84px;height:20px;line-height:20px;font-size:11.4px;color:#7ba79f;text-align:left;font-weight:normal;white-space:nowrap;overflow:hidden;">RedCode_07</div>
<div style="left:520px;top:260px;width:88px;height:50px;line-height:50px;font-size:10.7px;color:#ffffff;text-align:center;font-weight:normal;white-space:nowrap;overflow:hidden;">1/F-1</div>
<div style="left:610px;top:252px;width:88px;height:86px;background:#2e665c;border-radius:2px;"></div>
<svg style="left:610px;top:260px" width="88" height="50" viewBox="0 0 88 50"><rect x="0" y="0" width="5" height="5" fill="#7a5f57"/><rect x="5" y="0" width="5" height="5" fill="#4c6a62"/><rect x="10" y="0" width="5" height="5" fill="#7a5f57"/><rect x="25" y="0" width="5" height="5" fill="#7a5f57"/><rect x="30" y="0" width="5" height="5" fill="#7a5f57"/><rect x="40" y="0" width="5" height="5" fill="#7a5f57"/><rect x="45" y="0" width="5" height="5" fill="#7a5f57"/><rect x="55" y="0" width="5" height="5" fill="#4c6a62"/><rect x="65" y="0" width="5" height="5" fill="#4c6a62"/><rect x="75" y="0" width="5" height="5" fill="#7a5f57"/><rect x="0" y="5" width="5" height="5" fill="#4c6a62"/><rect x="15" y="5" width="5" height="5" fill="#7a5f57"/><rect x="25" y="5" width="5" height="5" fill="#4c6a62"/><rect x="30" y="5" width="5" height="5" fill="#7a5f57"/><rect x="35" y="5" width="5" height="5" fill="#7a5f57"/><rect x="45" y="5" width="5" height="5" fill="#4c6a62"/><rect x="70" y="5" width="5" height="5" fill="#4c6a62"/><rect x="80" y="5" width="5" height="5" fill="#4c6a62"/><rect x="5" y="10" width="5" height="5" fill="#7a5f57"/><rect x="10" y="10" width="5" height="5" fill="#7a5f57"/><rect x="15" y="10" width="5" height="5" fill="#7a5f57"/><rect x="25" y="10" width="5" height="5" fill="#4c6a62"/><rect x="35" y="10" width="5" height="5" fill="#7a5f57"/><rect x="40" y="10" width="5" height="5" fill="#4c6a62"/><rect x="45" y="10" width="5" height="5" fill="#4c6a62"/><rect x="50" y="10" width="5" height="5" fill="#7a5f57"/><rect x="55" y="10" width="5" height="5" fill="#4c6a62"/><rect x="60" y="10" width="5" height="5" fill="#4c6a62"/><rect x="5" y="15" width="5" height="5" fill="#7a5f57"/><rect x="25" y="15" width="5" height="5" fill="#4c6a62"/><rect x="35" y="15" width="5" height="5" fill="#7a5f57"/><rect x="45" y="15" width="5" height="5" fill="#4c6a62"/><rect x="50" y="15" width="5" height="5" fill="#7a5f57"/><rect x="55" y="15" width="5" height="5" fill="#7a5f57"/><rect x="70" y="15" width="5" height="5" fill="#7a5f57"/><rect x="80" y="15" width="5" height="5" fill="#4c6a62"/><rect x="85" y="15" width="5" height="5" fill="#7a5f57"/><rect x="0" y="20" width="5" height="5" fill="#7a5f57"/><rect x="15" y="20" width="5" height="5" fill="#7a5f57"/><rect x="25" y="20" width="5" height="5" fill="#7a5f57"/><rect x="35" y="20" width="5" height="5" fill="#7a5f57"/><rect x="50" y="20" width="5" height="5" fill="#4c6a62"/><rect x="60" y="20" width="5" height="5" fill="#7a5f57"/><rect x="65" y="20" width="5" height="5" fill="#7a5f57"/><rect x="70" y="20" width="5" height="5" fill="#4c6a62"/><rect x="75" y="20" width="5" height="5" fill="#7a5f57"/><rect x="80" y="20" width="5" height="5" fill="#7a5f57"/><rect x="85" y="20" width="5" height="5" fill="#4c6a62"/><rect x="5" y="25" width="5" height="5" fill="#7a5f57"/><rect x="10" y="25" width="5" height="5" fill="#7a5f57"/><rect x="20" y="25" width="5" height="5" fill="#7a5f57"/><rect x="35" y="25" width="5" height="5" fill="#7a5f57"/><rect x="40" y="25" width="5" height="5" fill="#4c6a62"/><rect x="45" y="25" width="5" height="5" fill="#4c6a62"/><rect x="55" y="25" width="5" height="5" fill="#4c6a62"/><rect x="60" y="25" width="5" height="5" fill="#4c6a62"/><rect x="75" y="25" width="5" height="5" fill="#4c6a62"/><rect x="80" y="25" width="5" height="5" fill="#4c6a62"/><rect x="0" y="30" width="5" height="5" fill="#7a5f57"/><rect x="5" y="30" width="5" height="5" fill="#7a5f57"/><rect x="15" y="30" width="5" height="5" fill="#4c6a62"/><rect x="20" y="30" width="5" height="5" fill="#4c6a62"/><rect x="25" y="30" width="5" height="5" fill="#7a5f57"/><rect x="30" y="30" width="5" height="5" fill="#4c6a62"/><rect x="35" y="30" width="5" height="5" fill="#4c6a62"/><rect x="40" y="30" width="5" height="5" fill="#7a5f57"/><rect x="55" y="30" width="5" height="5" fill="#7a5f57"/><rect x="65" y="30" width="5" height="5" fill="#4c6a62"/><rect x="75" y="30" width="5" height="5" fill="#7a5f57"/><rect x="0" y="35" width="5" height="5" fill="#7a5f57"/><rect x="5" y="35" width="5" height="5" fill="#7a5f57"/><rect x="20" y="35" width="5" height="5" fill="#7a5f57"/><rect x="25" y="35" width="5" height="5" fill="#4c6a62"/><rect x="30" y="35" width="5" height="5" fill="#4c6a62"/><rect x="35" y="35" width="5" height="5" fill="#7a5f57"/><rect x="40" y="35" width="5" height="5" fill="#7a5f57"/><rect x="45" y="35" width="5" height="5" fill="#7a5f57"/><rect x="50" y="35" width="5" height="5" fill="#7a5f57"/><rect x="55" y="35" width="5" height="5" fill="#4c6a62"/><rect x="60" y="35" width="5" height="5" fill="#7a5f57"/><rect x="65" y="35" width="5" height="5" fill="#7a5f57"/><rect x="75" y="35" width="5" height="5" fill="#7a5f57"/><rect x="80" y="35" width="5" height="5" fill="#4c6a62"/><rect x="0" y="40" width="5" height="5" fill="#7a5f57"/><rect x="5" y="40" width="5" height="5" fill="#7a5f57"/><rect x="15" y="40" width="5" height="5" fill="#7a5f57"/><rect x="20" y="40" width="5" height="5" fill="#7a5f57"/><rect x="25" y="40" width="5" height="5" fill="#4c6a62"/><rect x="35" y="40" width="5" height="5" fill="#7a5f57"/><rect x="40" y="40" width="5" height="5" fill="#7a5f57"/><rect x="45" y="40" width="5" height="5" fill="#7a5f57"/><rect x="55" y="40" width="5" height="5" fill="#4c6a62"/><rect x="65" y="40" width="5" height="5" fill="#7a5f57"/><rect x="70" y="40" width="5" height="5" fill="#7a5f57"/><rect x="85" y="40" width="5" height="5" fill="#4c6a62"/><rect x="0" y="45" width="5" height="5" fill="#7a5f57"/><rect x="5" y="45" width="5" height="5" fill="#7a5f57"/><rect x="10" y="45" width="5" height="5" fill="#4c6a62"/><rect x="15" y="45" width="5" height="5" fill="#7a5f57"/><rect x="30" y="45" width="5" height="5" fill="#7a5f57"/><rect x="35" y="45" width="5" height="5" fill="#7a5f57"/><rect x="55" y="45" width="5" height="5" fill="#7a5f57"/><rect x="60" y="45" width="5" height="5" fill="#7a5f57"/><rect x="65" y="45" width="5" height="5" fill="#7a5f57"/><rect x="75" y="45" width="5" height="5" fill="#7a5f57"/><rect x="80" y="45" width="5" height="5" fill="#7a5f57"/><rect x="85" y="45" width="5" height="5" fill="#4c6a62"/></svg>
<div style="left:610px;top:318px;width:88px;height:20px;background:#39706a;border-radius:0 0 2px 2px;"></div>
<div style="left:615px;top:318px;width:84px;height:20px;line-height:20px;font-size:11.4px;color:#7ba79f;text-align:left;font-weight:normal;white-space:nowrap;overflow:hidden;">RedCode_03</div>
<div style="left:610px;top:260px;width:88px;height:50px;line-height:50px;font-size:10.7px;color:#ffffff;text-align:center;font-weight:normal;white-space:nowrap;overflow:hidden;">1/F#-1</div>
<div style="left:700px;top:252px;width:88px;height:86px;background:#2e665c;border-radius:2px;"></div>
<svg style="left:700px;top:260px" width="88" height="50" viewBox="0 0 88 50"><rect x="0.0" y="0" width="3" height="50" fill="#7a5f57"/><rect x="4.2" y="0" width="1.5" height="50" fill="#7a5f57"/><rect x="6.5" y="0" width="2.5" height="50" fill="#7a5f57"/><rect x="10.8" y="0" width="3" height="50" fill="#7a5f57"/><rect x="15.0" y="0" width="1.5" height="50" fill="#7a5f57"/><rect x="18.3" y="0" width="2" height="50" fill="#7a5f57"/><rect x="22.1" y="0" width="2.5" height="50" fill="#7a5f57"/><rect x="25.8" y="0" width="2.5" height="50" fill="#7a5f57"/><rect x="30.1" y="0" width="2.5" height="50" fill="#7a5f57"/><rect x="34.4" y="0" width="2.5" height="50" fill="#7a5f57"/><rect x="38.1" y="0" width="3" height="50" fill="#7a5f57"/><rect x="41.9" y="0" width="1.5" height="50" fill="#7a5f57"/><rect x="45.2" y="0" width="3" height="50" fill="#7a5f57"/><rect x="49.0" y="0" width="3" height="50" fill="#7a5f57"/><rect x="53.8" y="0" width="2" height="50" fill="#7a5f57"/><rect x="56.6" y="0" width="3" height="50" fill="#7a5f57"/><rect x="60.8" y="0" width="1.5" height="50" fill="#7a5f57"/><rect x="63.1" y="0" width="3" height="50" fill="#7a5f57"/><rect x="66.9" y="0" width="2.5" height="50" fill="#7a5f57"/><rect x="70.2" y="0" width="2" height="50" fill="#7a5f57"/><rect x="73.4" y="0" width="1.5" height="50" fill="#7a5f57"/><rect x="75.7" y="0" width="3" height="50" fill="#7a5f57"/><rect x="79.9" y="0" width="2" height="50" fill="#7a5f57"/><rect x="83.1" y="0" width="3" height="50" fill="#7a5f57"/><rect x="87.3" y="0" width="3" height="50" fill="#7a5f57"/><rect x="56.0" y="8.9" width="1" height="1.5" fill="#9fd8c8"/><rect x="23.2" y="34.5" width="1" height="1.5" fill="#9fd8c8"/><rect x="61.5" y="3.9" width="1" height="1.5" fill="#9fd8c8"/><rect x="46.0" y="28.4" width="1" height="1.5" fill="#9fd8c8"/><rect x="26.8" y="49.6" width="1" height="1.5" fill="#9fd8c8"/><rect x="12.9" y="42.3" width="1" height="1.5" fill="#9fd8c8"/><rect x="79.3" y="12.0" width="1" height="1.5" fill="#9fd8c8"/><rect x="32.0" y="3.3" width="1" height="1.5" fill="#9fd8c8"/><rect x="80.9" y="49.3" width="1" height="1.5" fill="#9fd8c8"/><rect x="73.0" y="36.9" width="1" height="1.5" fill="#9fd8c8"/><rect x="80.1" y="43.5" width="1" height="1.5" fill="#9fd8c8"/><rect x="51.5" y="1.8" width="1" height="1.5" fill="#9fd8c8"/><rect x="33.3" y="34.2" width="1" height="1.5" fill="#9fd8c8"/><rect x="81.7" y="3.2" width="1" height="1.5" fill="#9fd8c8"/><rect x="52.7" y="2.3" width="1" height="1.5" fill="#9fd8c8"/><rect x="39.0" y="0.3" width="1" height="1.5" fill="#9fd8c8"/><rect x="33.1" y="45.2" width="1" height="1.5" fill="#9fd8c8"/><rect x="76.7" y="42.6" width="1" height="1.5" fill="#9fd8c8"/><rect x="59.8" y="36.5" width="1" height="1.5" fill="#9fd8c8"/><rect x="17.3" y="17.0" width="1" height="1.5" fill="#9fd8c8"/><rect x="22.2" y="36.7" width="1" height="1.5" fill="#9fd8c8"/><rect x="68.0" y="23.1" width="1" height="1.5" fill="#9fd8c8"/><rect x="48.1" y="49.6" width="1" height="1.5" fill="#9fd8c8"/><rect x="24.9" y="6.7" width="1" height="1.5" fill="#9fd8c8"/><rect x="16.3" y="26.5" width="1" height="1.5" fill="#9fd8c8"/><rect x="62.4" y="18.9" width="1" height="1.5" fill="#9fd8c8"/><rect x="8.3" y="27.6" width="1" height="1.5" fill="#9fd8c8"/><rect x="79.8" y="26.8" width="1" height="1.5" fill="#9fd8c8"/><rect x="39.0" y="19.2" width="1" height="1.5" fill="#9fd8c8"/><rect x="61.3" y="0.3" width="1" height="1.5" fill="#9fd8c8"/></svg>
<div style="left:700px;top:318px;width:88px;height:20px;background:#39706a;border-radius:0 0 2px 2px;"></div>
<div style="left:705px;top:318px;width:84px;height:20px;line-height:20px;font-size:11.4px;color:#7ba79f;text-align:left;font-weight:normal;white-space:nowrap;overflow:hidden;">RedCode_38</div>
<div style="left:700px;top:260px;width:88px;height:50px;line-height:50px;font-size:10.7px;color:#ffffff;text-align:center;font-weight:normal;white-space:nowrap;overflow:hidden;">1/G-1</div>
<div style="left:790px;top:252px;width:88px;height:86px;background:#2e665c;border-radius:2px;"></div>
<svg style="left:790px;top:260px" width="88" height="50" viewBox="0 0 88 50"><rect x="0" y="10" width="22" height="1.5" fill="#7a5f57"/><rect x="68" y="10" width="20" height="1.5" fill="#7a5f57"/><rect x="22" y="13" width="44" height="1.5" fill="#7a5f57"/><rect x="0" y="15" width="88" height="1" fill="#7a5f57"/><rect x="35" y="16" width="11" height="4" fill="#7a5f57"/><rect x="64" y="20" width="8" height="4" fill="#7a5f57"/><rect x="0" y="30" width="88" height="6" fill="#7a5f57"/><rect x="26" y="40" width="27" height="5" fill="#7a5f57"/><rect x="0" y="45" width="26" height="5" fill="#7a5f57"/><rect x="53" y="45" width="35" height="5" fill="#7a5f57"/><rect x="35" y="33" width="11" height="3" fill="#2e665c"/><rect x="10" y="20" width="8" height="4" fill="#3f6f66"/></svg>
<div style="left:790px;top:318px;width:88px;height:20px;background:#39706a;border-radius:0 0 2px 2px;"></div>
<div style="left:795px;top:318px;width:84px;height:20px;line-height:20px;font-size:11.4px;color:#7ba79f;text-align:left;font-weight:normal;white-space:nowrap;overflow:hidden;">RedCode_18</div>
<div style="left:790px;top:260px;width:88px;height:50px;line-height:50px;font-size:10.7px;color:#ffffff;text-align:center;font-weight:normal;white-space:nowrap;overflow:hidden;">1/G#-1</div>
<div style="left:880px;top:252px;width:88px;height:86px;background:#2e665c;border-radius:2px;"></div>
<svg style="left:880px;top:260px" width="88" height="50" viewBox="0 0 88 50"><rect x="49.9" y="14" width="3" height="1" fill="#9fd0c4" fill-opacity="0.6"/><rect x="55.2" y="14" width="1" height="1" fill="#9fd0c4" fill-opacity="0.6"/><rect x="16.5" y="26" width="2" height="1" fill="#9fd0c4" fill-opacity="0.6"/><rect x="81.1" y="18" width="2" height="1" fill="#9fd0c4" fill-opacity="0.6"/><rect x="69.1" y="26" width="2" height="1" fill="#9fd0c4" fill-opacity="0.6"/><rect x="75.0" y="6" width="1" height="1" fill="#9fd0c4" fill-opacity="0.6"/><rect x="42.1" y="30" width="1" height="1" fill="#9fd0c4" fill-opacity="0.6"/><rect x="38.9" y="42" width="2" height="1" fill="#9fd0c4" fill-opacity="0.6"/><rect x="56.8" y="2" width="1" height="1" fill="#9fd0c4" fill-opacity="0.6"/><rect x="67.4" y="10" width="2" height="1" fill="#9fd0c4" fill-opacity="0.6"/><rect x="3.0" y="18" width="2" height="1" fill="#9fd0c4" fill-opacity="0.6"/><rect x="14.8" y="38" width="3" height="1" fill="#9fd0c4" fill-opacity="0.6"/><rect x="20.9" y="42" width="1" height="1" fill="#9fd0c4" fill-opacity="0.6"/><rect x="13.7" y="30" width="1" height="1" fill="#9fd0c4" fill-opacity="0.6"/><rect x="11.2" y="46" width="1" height="1" fill="#9fd0c4" fill-opacity="0.6"/><rect x="2.6" y="18" width="3" height="1" fill="#9fd0c4" fill-opacity="0.6"/><rect x="61.8" y="30" width="3" height="1" fill="#9fd0c4" fill-opacity="0.6"/><rect x="71.4" y="38" width="2" height="1" fill="#9fd0c4" fill-opacity="0.6"/><rect x="50.5" y="42" width="2" height="1" fill="#9fd0c4" fill-opacity="0.6"/><rect x="50.2" y="10" width="2" height="1" fill="#9fd0c4" fill-opacity="0.6"/><rect x="22.1" y="30" width="1" height="1" fill="#9fd0c4" fill-opacity="0.6"/><rect x="52.4" y="30" width="3" height="1" fill="#9fd0c4" fill-opacity="0.6"/><rect x="53.3" y="10" width="1" height="1" fill="#9fd0c4" fill-opacity="0.6"/><rect x="42.4" y="18" width="2" height="1" fill="#9fd0c4" fill-opacity="0.6"/><rect x="59.8" y="30" width="2" height="1" fill="#9fd0c4" fill-opacity="0.6"/><rect x="60.6" y="10" width="3" height="1" fill="#9fd0c4" fill-opacity="0.6"/><rect x="75.8" y="10" width="1" height="1" fill="#9fd0c4" fill-opacity="0.6"/><rect x="44.5" y="2" width="2" height="1" fill="#9fd0c4" fill-opacity="0.6"/><rect x="5.0" y="14" width="3" height="1" fill="#9fd0c4" fill-opacity="0.6"/><rect x="5.9" y="2" width="2" height="1" fill="#9fd0c4" fill-opacity="0.6"/><rect x="4.7" y="46" width="2" height="1" fill="#9fd0c4" fill-opacity="0.6"/><rect x="57.2" y="46" width="3" height="1" fill="#9fd0c4" fill-opacity="0.6"/><rect x="28.5" y="34" width="1" height="1" fill="#9fd0c4" fill-opacity="0.6"/><rect x="71.2" y="22" width="1" height="1" fill="#9fd0c4" fill-opacity="0.6"/><rect x="84.3" y="10" width="1" height="1" fill="#9fd0c4" fill-opacity="0.6"/><rect x="17.5" y="14" width="3" height="1" fill="#9fd0c4" fill-opacity="0.6"/><rect x="72.0" y="26" width="1" height="1" fill="#9fd0c4" fill-opacity="0.6"/><rect x="64.0" y="30" width="1" height="1" fill="#9fd0c4" fill-opacity="0.6"/><rect x="17.5" y="46" width="3" height="1" fill="#9fd0c4" fill-opacity="0.6"/><rect x="18.6" y="2" width="1" height="1" fill="#9fd0c4" fill-opacity="0.6"/><rect x="12.4" y="2" width="2" height="1" fill="#9fd0c4" fill-opacity="0.6"/><rect x="68.5" y="22" width="2" height="1" fill="#9fd0c4" fill-opacity="0.6"/><rect x="7.5" y="46" width="2" height="1" fill="#9fd0c4" fill-opacity="0.6"/><rect x="79.3" y="34" width="2" height="1" fill="#9fd0c4" fill-opacity="0.6"/><rect x="52.8" y="46" width="2" height="1" fill="#9fd0c4" fill-opacity="0.6"/><rect x="39.3" y="26" width="1" height="1" fill="#9fd0c4" fill-opacity="0.6"/><rect x="29.5" y="38" width="3" height="1" fill="#9fd0c4" fill-opacity="0.6"/><rect x="70.7" y="26" width="1" height="1" fill="#9fd0c4" fill-opacity="0.6"/><rect x="50.0" y="6" width="1" height="1" fill="#9fd0c4" fill-opacity="0.6"/><rect x="77.8" y="26" width="3" height="1" fill="#9fd0c4" fill-opacity="0.6"/><rect x="9.9" y="46" width="1" height="1" fill="#9fd0c4" fill-opacity="0.6"/><rect x="9.4" y="26" width="3" height="1" fill="#9fd0c4" fill-opacity="0.6"/><rect x="20.4" y="34" width="2" height="1" fill="#9fd0c4" fill-opacity="0.6"/><rect x="77.4" y="26" width="3" height="1" fill="#9fd0c4" fill-opacity="0.6"/><rect x="76.6" y="10" width="2" height="1" fill="#9fd0c4" fill-opacity="0.6"/><rect x="10.0" y="18" width="1" height="1" fill="#9fd0c4" fill-opacity="0.6"/><rect x="36.3" y="2" width="2" height="1" fill="#9fd0c4" fill-opacity="0.6"/><rect x="53.4" y="46" width="3" height="1" fill="#9fd0c4" fill-opacity="0.6"/><rect x="17.3" y="18" width="1" height="1" fill="#9fd0c4" fill-opacity="0.6"/><rect x="31.4" y="10" width="1" height="1" fill="#9fd0c4" fill-opacity="0.6"/><rect x="9.0" y="6" width="1" height="1" fill="#9fd0c4" fill-opacity="0.6"/><rect x="28.2" y="26" width="2" height="1" fill="#9fd0c4" fill-opacity="0.6"/><rect x="13.0" y="46" width="3" height="1" fill="#9fd0c4" fill-opacity="0.6"/><rect x="17.8" y="18" width="3" height="1" fill="#9fd0c4" fill-opacity="0.6"/><rect x="22.7" y="6" width="2" height="1" fill="#9fd0c4" fill-opacity="0.6"/><rect x="57.0" y="46" width="2" height="1" fill="#9fd0c4" fill-opacity="0.6"/><rect x="0.6" y="22" width="1" height="1" fill="#9fd0c4" fill-opacity="0.6"/><rect x="82.8" y="46" width="3" height="1" fill="#9fd0c4" fill-opacity="0.6"/><rect x="85.5" y="38" width="2" height="1" fill="#9fd0c4" fill-opacity="0.6"/><rect x="45.0" y="34" width="1" height="1" fill="#9fd0c4" fill-opacity="0.6"/><rect x="41.0" y="14" width="2" height="1" fill="#9fd0c4" fill-opacity="0.6"/><rect x="19.1" y="10" width="1" height="1" fill="#9fd0c4" fill-opacity="0.6"/><rect x="80.1" y="30" width="3" height="1" fill="#9fd0c4" fill-opacity="0.6"/><rect x="43.0" y="30" width="3" height="1" fill="#9fd0c4" fill-opacity="0.6"/><rect x="12.8" y="10" width="1" height="1" fill="#9fd0c4" fill-opacity="0.6"/><rect x="15.9" y="38" width="1" height="1" fill="#9fd0c4" fill-opacity="0.6"/><rect x="51.7" y="38" width="1" height="1" fill="#9fd0c4" fill-opacity="0.6"/><rect x="70.4" y="10" width="1" height="1" fill="#9fd0c4" fill-opacity="0.6"/><rect x="40.0" y="38" width="3" height="1" fill="#9fd0c4" fill-opacity="0.6"/><rect x="57.8" y="22" width="2" height="1" fill="#9fd0c4" fill-opacity="0.6"/><rect x="44.8" y="26" width="3" height="1" fill="#9fd0c4" fill-opacity="0.6"/><rect x="61.2" y="6" width="2" height="1" fill="#9fd0c4" fill-opacity="0.6"/><rect x="57.8" y="34" width="1" height="1" fill="#9fd0c4" fill-opacity="0.6"/><rect x="69.9" y="6" width="1" height="1" fill="#9fd0c4" fill-opacity="0.6"/><rect x="42.3" y="18" width="3" height="1" fill="#9fd0c4" fill-opacity="0.6"/><rect x="29.7" y="26" width="1" height="1" fill="#9fd0c4" fill-opacity="0.6"/><rect x="54.5" y="18" width="3" height="1" fill="#9fd0c4" fill-opacity="0.6"/><rect x="15.4" y="22" width="2" height="1" fill="#9fd0c4" fill-opacity="0.6"/><rect x="19.5" y="10" width="1" height="1" fill="#9fd0c4" fill-opacity="0.6"/><rect x="69.5" y="30" width="3" height="1" fill="#9fd0c4" fill-opacity="0.6"/><rect x="7.8" y="18" width="1" height="1" fill="#9fd0c4" fill-opacity="0.6"/><rect x="0.7" y="34" width="3" height="1" fill="#9fd0c4" fill-opacity="0.6"/><rect x="68.9" y="6" width="1" height="1" fill="#9fd0c4" fill-opacity="0.6"/><rect x="65.8" y="10" width="3" height="1" fill="#9fd0c4" fill-opacity="0.6"/><rect x="37.3" y="18" width="2" height="1" fill="#9fd0c4" fill-opacity="0.6"/><rect x="61.4" y="22" width="3" height="1" fill="#9fd0c4" fill-opacity="0.6"/><rect x="62.1" y="34" width="1" height="1" fill="#9fd0c4" fill-opacity="0.6"/><rect x="74.2" y="2" width="2" height="1" fill="#9fd0c4" fill-opacity="0.6"/><rect x="76.4" y="42" width="2" height="1" fill="#9fd0c4" fill-opacity="0.6"/><rect x="85.6" y="18" width="1" height="1" fill="#9fd0c4" fill-opacity="0.6"/><rect x="30.1" y="34" width="1" height="1" fill="#9fd0c4" fill-opacity="0.6"/><rect x="13.3" y="18" width="2" height="1" fill="#9fd0c4" fill-opacity="0.6"/><rect x="13.8" y="42" width="1" height="1" fill="#9fd0c4" fill-opacity="0.6"/><rect x="31.2" y="30" width="1" height="1" fill="#9fd0c4" fill-opacity="0.6"/><rect x="21.6" y="14" width="1" height="1" fill="#9fd0c4" fill-opacity="0.6"/><rect x="82.8" y="10" width="2" height="1" fill="#9fd0c4" fill-opacity="0.6"/><rect x="73.5" y="30" width="2" height="1" fill="#9fd0c4" fill-opacity="0.6"/><rect x="69.2" y="22" width="1" height="1" fill="#9fd0c4" fill-opacity="0.6"/><rect x="31.7" y="22" width="1" height="1" fill="#9fd0c4" fill-opacity="0.6"/><rect x="57.8" y="34" width="1" height="1" fill="#9fd0c4" fill-opacity="0.6"/><rect x="63.8" y="6" width="2" height="1" fill="#9fd0c4" fill-opacity="0.6"/><rect x="71.8" y="42" width="1" height="1" fill="#9fd0c4" fill-opacity="0.6"/><rect x="13.4" y="18" width="1" height="1" fill="#9fd0c4" fill-opacity="0.6"/><rect x="34.1" y="22" width="2" height="1" fill="#9fd0c4" fill-opacity="0.6"/><rect x="64.0" y="22" width="1" height="1" fill="#9fd0c4" fill-opacity="0.6"/><rect x="34.4" y="22" width="3" height="1" fill="#9fd0c4" fill-opacity="0.6"/><rect x="34.0" y="14" width="3" height="1" fill="#9fd0c4" fill-opacity="0.6"/><rect x="34.5" y="18" width="1" height="1" fill="#9fd0c4" fill-opacity="0.6"/><rect x="63.1" y="2" width="2" height="1" fill="#9fd0c4" fill-opacity="0.6"/><rect x="63.3" y="46" width="3" height="1" fill="#9fd0c4" fill-opacity="0.6"/><rect x="40.7" y="2" width="1" height="1" fill="#9fd0c4" fill-opacity="0.6"/><rect x="2.2" y="2" width="2" height="1" fill="#9fd0c4" fill-opacity="0.6"/><rect x="19.6" y="42" width="3" height="1" fill="#9fd0c4" fill-opacity="0.6"/><rect x="70.4" y="30" width="3" height="1" fill="#9fd0c4" fill-opacity="0.6"/><rect x="5.3" y="38" width="1" height="1" fill="#9fd0c4" fill-opacity="0.6"/><rect x="82.8" y="22" width="1" height="1" fill="#9fd0c4" fill-opacity="0.6"/><rect x="17.4" y="2" width="2" height="1" fill="#9fd0c4" fill-opacity="0.6"/><rect x="66.2" y="6" width="3" height="1" fill="#9fd0c4" fill-opacity="0.6"/><rect x="29.4" y="18" width="3" height="1" fill="#9fd0c4" fill-opacity="0.6"/><rect x="27.9" y="14" width="1" height="1" fill="#9fd0c4" fill-opacity="0.6"/><rect x="31.3" y="30" width="2" height="1" fill="#9fd0c4" fill-opacity="0.6"/><rect x="18.3" y="34" width="1" height="1" fill="#9fd0c4" fill-opacity="0.6"/><rect x="22.0" y="18" width="1" height="1" fill="#9fd0c4" fill-opacity="0.6"/><rect x="9.0" y="46" width="1" height="1" fill="#9fd0c4" fill-opacity="0.6"/><rect x="61.9" y="42" width="2" height="1" fill="#9fd0c4" fill-opacity="0.6"/><rect x="10.6" y="6" width="2" height="1" fill="#9fd0c4" fill-opacity="0.6"/><rect x="67.4" y="14" width="2" height="1" fill="#9fd0c4" fill-opacity="0.6"/><rect x="37.3" y="42" width="2" height="1" fill="#9fd0c4" fill-opacity="0.6"/><rect x="38.2" y="22" width="3" height="1" fill="#9fd0c4" fill-opacity="0.6"/><rect x="41.1" y="30" width="3" height="1" fill="#9fd0c4" fill-opacity="0.6"/><path d="M4 0 V50 M48 0 V50 M70 0 V50" stroke="#7fb0a5" stroke-width="0.5" stroke-opacity="0.5"/></svg>
<div style="left:880px;top:318px;width:88px;height:20px;background:#39706a;border-radius:0 0 2px 2px;"></div>
<div style="left:885px;top:318px;width:84px;height:20px;line-height:20px;font-size:11.4px;color:#7ba79f;text-align:left;font-weight:normal;white-space:nowrap;overflow:hidden;">RedCode_58</div>
<div style="left:880px;top:260px;width:88px;height:50px;line-height:50px;font-size:10.7px;color:#ffffff;text-align:center;font-weight:normal;white-space:nowrap;overflow:hidden;">1/A-1</div>
<div style="left:970px;top:252px;width:88px;height:86px;background:#2e665c;border-radius:2px;"></div>
<svg style="left:970px;top:260px" width="88" height="50" viewBox="0 0 88 50"><rect x="0.0" y="0" width="2" height="50" fill="#7a5f57"/><rect x="4.5" y="0" width="3" height="50" fill="#7a5f57"/><rect x="9.0" y="0" width="2" height="50" fill="#7a5f57"/><rect x="12.5" y="0" width="3" height="50" fill="#7a5f57"/><rect x="19.0" y="0" width="4" height="50" fill="#7a5f57"/><rect x="24.5" y="0" width="4" height="50" fill="#7a5f57"/><rect x="31.0" y="0" width="4" height="50" fill="#7a5f57"/><rect x="37.5" y="0" width="4" height="50" fill="#7a5f57"/><rect x="43.0" y="0" width="2" height="50" fill="#7a5f57"/><rect x="47.5" y="0" width="4" height="50" fill="#7a5f57"/><rect x="53.0" y="0" width="3" height="50" fill="#7a5f57"/><rect x="57.5" y="0" width="2" height="50" fill="#7a5f57"/><rect x="62.0" y="0" width="3" height="50" fill="#7a5f57"/><rect x="67.5" y="0" width="2" height="50" fill="#7a5f57"/><rect x="72.0" y="0" width="4" height="50" fill="#7a5f57"/><rect x="79.5" y="0" width="3" height="50" fill="#7a5f57"/><rect x="85.0" y="0" width="4" height="50" fill="#7a5f57"/><path d="M28 4 V46 M46 4 V46 M68 4 V46" stroke="#8fc8b8" stroke-width="0.8" stroke-dasharray="1 6"/></svg>
<div style="left:970px;top:318px;width:88px;height:20px;background:#39706a;border-radius:0 0 2px 2px;"></div>
<div style="left:975px;top:318px;width:84px;height:20px;line-height:20px;font-size:11.4px;color:#7ba79f;text-align:left;font-weight:normal;white-space:nowrap;overflow:hidden;">RedCode_39</div>
<div style="left:970px;top:260px;width:88px;height:50px;line-height:50px;font-size:10.7px;color:#ffffff;text-align:center;font-weight:normal;white-space:nowrap;overflow:hidden;">1/A#-1</div>
<div style="left:1060px;top:252px;width:88px;height:86px;background:#2e665c;border-radius:2px;"></div>
<svg style="left:1060px;top:260px" width="88" height="50" viewBox="0 0 88 50"><path d="M44 16 L50 22 L44 28 L38 22 Z M44 30 L56 38 M44 30 L32 38 M8 10 L2 14 L8 18 M80 10 L86 14 L80 18 M14 26 L8 32 L14 38 M74 26 L80 32 L74 38 M24 6 L18 12 M64 6 L70 12 M28 44 L20 50 M60 44 L68 50 M30 18 L24 24 L30 30 M58 18 L64 24 L58 30" fill="none" stroke="#7a5f57" stroke-width="1.8" stroke-opacity="0.75"/></svg>
<div style="left:1060px;top:318px;width:88px;height:20px;background:#39706a;border-radius:0 0 2px 2px;"></div>
<div style="left:1065px;top:318px;width:84px;height:20px;line-height:20px;font-size:11.4px;color:#7ba79f;text-align:left;font-weight:normal;white-space:nowrap;overflow:hidden;">RedCode_19</div>
<div style="left:1060px;top:260px;width:88px;height:50px;line-height:50px;font-size:10.7px;color:#ffffff;text-align:center;font-weight:normal;white-space:nowrap;overflow:hidden;">1/B-1</div>
<div style="left:1150px;top:252px;width:88px;height:86px;background:#2e665c;border-radius:2px;"></div>
<div style="left:1150px;top:318px;width:88px;height:20px;background:#39706a;border-radius:0 0 2px 2px;"></div>
<div style="left:1240px;top:252px;width:88px;height:86px;background:#2e665c;border-radius:2px;"></div>
<div style="left:1240px;top:318px;width:88px;height:20px;background:#39706a;border-radius:0 0 2px 2px;"></div>
<div style="left:1330px;top:252px;width:88px;height:86px;background:#2e665c;border-radius:2px;"></div>
<div style="left:1330px;top:318px;width:88px;height:20px;background:#39706a;border-radius:0 0 2px 2px;"></div>
<div style="left:430px;top:343px;width:88px;height:86px;background:#2e665c;border-radius:2px;"></div>
<svg style="left:430px;top:351px" width="88" height="50" viewBox="0 0 88 50"><rect x="0" y="0" width="88" height="50" fill="#2b605a"/><path d="M44 4 L84 44 M44 4 L4 44" stroke="#6fb8a8" stroke-width="0.8" stroke-dasharray="1 2" stroke-opacity="0.7"/><rect x="38.0" y="30.0" width="12" height="2" fill="#7a5f57"/><rect x="34.0" y="33.5" width="20" height="2" fill="#7a5f57"/><rect x="30.0" y="37.0" width="28" height="2" fill="#7a5f57"/><rect x="26.0" y="40.5" width="36" height="2" fill="#7a5f57"/><rect x="22.0" y="44.0" width="44" height="2" fill="#7a5f57"/></svg>
<div style="left:430px;top:409px;width:88px;height:20px;background:#39706a;border-radius:0 0 2px 2px;"></div>
<div style="left:435px;top:409px;width:84px;height:20px;line-height:20px;font-size:11.4px;color:#7ba79f;text-align:left;font-weight:normal;white-space:nowrap;overflow:hidden;">Grid_01</div>
<div style="left:430px;top:351px;width:88px;height:50px;line-height:50px;font-size:10.7px;color:#ffffff;text-align:center;font-weight:normal;white-space:nowrap;overflow:hidden;">1/G#-2</div>
<div style="left:430px;top:409px;width:88px;height:20px;line-height:20px;font-size:10.7px;color:#ffffff;text-align:center;font-weight:normal;white-space:nowrap;overflow:hidden;">1/G#-2</div>
<div style="left:520px;top:343px;width:88px;height:86px;background:#2e665c;border-radius:2px;"></div>
<svg style="left:520px;top:351px" width="88" height="50" viewBox="0 0 88 50"><rect x="0" y="0" width="88" height="50" fill="#2b605a"/><circle cx="44" cy="25" r="17" fill="none" stroke="#7a5f57" stroke-width="2.8"/><circle cx="44" cy="25" r="11" fill="none" stroke="#7a5f57" stroke-width="2"/><path d="M64.0 25.0 L84.0 25.0" stroke="#7a5f57" stroke-width="0.6" stroke-opacity="0.6"/><path d="M62.5 32.7 L81.0 38.0" stroke="#7a5f57" stroke-width="0.6" stroke-opacity="0.6"/><path d="M58.1 39.1 L72.3 49.0" stroke="#7a5f57" stroke-width="0.6" stroke-opacity="0.6"/><path d="M51.7 43.5 L59.3 56.4" stroke="#7a5f57" stroke-width="0.6" stroke-opacity="0.6"/><path d="M44.0 45.0 L44.0 59.0" stroke="#7a5f57" stroke-width="0.6" stroke-opacity="0.6"/><path d="M36.3 43.5 L28.7 56.4" stroke="#7a5f57" stroke-width="0.6" stroke-opacity="0.6"/><path d="M29.9 39.1 L15.7 49.0" stroke="#7a5f57" stroke-width="0.6" stroke-opacity="0.6"/><path d="M25.5 32.7 L7.0 38.0" stroke="#7a5f57" stroke-width="0.6" stroke-opacity="0.6"/><path d="M24.0 25.0 L4.0 25.0" stroke="#7a5f57" stroke-width="0.6" stroke-opacity="0.6"/><path d="M25.5 17.3 L7.0 12.0" stroke="#7a5f57" stroke-width="0.6" stroke-opacity="0.6"/><path d="M29.9 10.9 L15.7 1.0" stroke="#7a5f57" stroke-width="0.6" stroke-opacity="0.6"/><path d="M36.3 6.5 L28.7 -6.4" stroke="#7a5f57" stroke-width="0.6" stroke-opacity="0.6"/><path d="M44.0 5.0 L44.0 -9.0" stroke="#7a5f57" stroke-width="0.6" stroke-opacity="0.6"/><path d="M51.7 6.5 L59.3 -6.4" stroke="#7a5f57" stroke-width="0.6" stroke-opacity="0.6"/><path d="M58.1 10.9 L72.3 1.0" stroke="#7a5f57" stroke-width="0.6" stroke-opacity="0.6"/><path d="M62.5 17.3 L81.0 12.0" stroke="#7a5f57" stroke-width="0.6" stroke-opacity="0.6"/></svg>
<div style="left:520px;top:409px;width:88px;height:20px;background:#39706a;border-radius:0 0 2px 2px;"></div>
<div style="left:525px;top:409px;width:84px;height:20px;line-height:20px;font-size:11.4px;color:#7ba79f;text-align:left;font-weight:normal;white-space:nowrap;overflow:hidden;">Grid_02</div>
<div style="left:520px;top:351px;width:88px;height:50px;line-height:50px;font-size:10.7px;color:#ffffff;text-align:center;font-weight:normal;white-space:nowrap;overflow:hidden;">1/A-2</div>
<div style="left:520px;top:409px;width:88px;height:20px;line-height:20px;font-size:10.7px;color:#ffffff;text-align:center;font-weight:normal;white-space:nowrap;overflow:hidden;">1/A-2</div>
<div style="left:610px;top:343px;width:88px;height:86px;background:#2e665c;border-radius:2px;"></div>
<svg style="left:610px;top:351px" width="88" height="50" viewBox="0 0 88 50"><rect x="0" y="0" width="88" height="50" fill="#2b605a"/><rect x="8" y="2" width="1.5" height="38" fill="#7a5f57" fill-opacity="0.5"/><rect x="14" y="2" width="1.5" height="38" fill="#7fc4b4" fill-opacity="0.4"/><rect x="22" y="2" width="1.5" height="38" fill="#7a5f57" fill-opacity="0.5"/><rect x="30" y="2" width="1.5" height="38" fill="#7fc4b4" fill-opacity="0.4"/><rect x="58" y="2" width="1.5" height="38" fill="#7a5f57" fill-opacity="0.5"/><rect x="66" y="2" width="1.5" height="38" fill="#7fc4b4" fill-opacity="0.4"/><rect x="74" y="2" width="1.5" height="38" fill="#7a5f57" fill-opacity="0.5"/><rect x="80" y="2" width="1.5" height="38" fill="#7fc4b4" fill-opacity="0.3"/><rect x="32" y="0" width="2" height="34" fill="#c08080" fill-opacity="0.6"/><rect x="54" y="0" width="2" height="34" fill="#c08080" fill-opacity="0.6"/><path d="M0 50 L30 34 H58 L88 50" fill="#356e64" fill-opacity="0.6"/></svg>
<div style="left:610px;top:409px;width:88px;height:20px;background:#39706a;border-radius:0 0 2px 2px;"></div>
<div style="left:615px;top:409px;width:84px;height:20px;line-height:20px;font-size:11.4px;color:#7ba79f;text-align:left;font-weight:normal;white-space:nowrap;overflow:hidden;">Grid_03</div>
<div style="left:610px;top:351px;width:88px;height:50px;line-height:50px;font-size:10.7px;color:#ffffff;text-align:center;font-weight:normal;white-space:nowrap;overflow:hidden;">1/A#-2</div>
<div style="left:610px;top:409px;width:88px;height:20px;line-height:20px;font-size:10.7px;color:#ffffff;text-align:center;font-weight:normal;white-space:nowrap;overflow:hidden;">1/A#-2</div>
<div style="left:700px;top:343px;width:88px;height:86px;background:#2e665c;border-radius:2px;"></div>
<svg style="left:700px;top:351px" width="88" height="50" viewBox="0 0 88 50"><rect x="0" y="0" width="88" height="50" fill="#2b605a"/><path d="M14 4 V44" stroke="#7fc4b4" stroke-width="1" stroke-dasharray="1.5 2" stroke-opacity="0.5"/><path d="M18 4 V44" stroke="#7fc4b4" stroke-width="1" stroke-dasharray="1.5 2" stroke-opacity="0.5"/><path d="M22 4 V44" stroke="#7fc4b4" stroke-width="1" stroke-dasharray="1.5 2" stroke-opacity="0.5"/><path d="M26 4 V44" stroke="#7fc4b4" stroke-width="1" stroke-dasharray="1.5 2" stroke-opacity="0.5"/><path d="M60 4 V44" stroke="#7fc4b4" stroke-width="1" stroke-dasharray="1.5 2" stroke-opacity="0.5"/><path d="M64 4 V44" stroke="#7fc4b4" stroke-width="1" stroke-dasharray="1.5 2" stroke-opacity="0.5"/><path d="M68 4 V44" stroke="#7fc4b4" stroke-width="1" stroke-dasharray="1.5 2" stroke-opacity="0.5"/><path d="M72 4 V44" stroke="#7fc4b4" stroke-width="1" stroke-dasharray="1.5 2" stroke-opacity="0.5"/><path d="M76 4 V44" stroke="#7fc4b4" stroke-width="1" stroke-dasharray="1.5 2" stroke-opacity="0.5"/></svg>
<div style="left:700px;top:409px;width:88px;height:20px;background:#39706a;border-radius:0 0 2px 2px;"></div>
<div style="left:705px;top:409px;width:84px;height:20px;line-height:20px;font-size:11.4px;color:#7ba79f;text-align:left;font-weight:normal;white-space:nowrap;overflow:hidden;">Grid_04</div>
<div style="left:700px;top:351px;width:88px;height:50px;line-height:50px;font-size:10.7px;color:#ffffff;text-align:center;font-weight:normal;white-space:nowrap;overflow:hidden;">1/B-2</div>
<div style="left:700px;top:409px;width:88px;height:20px;line-height:20px;font-size:10.7px;color:#ffffff;text-align:center;font-weight:normal;white-space:nowrap;overflow:hidden;">1/B-2</div>
<div style="left:790px;top:343px;width:88px;height:86px;background:#2e665c;border-radius:2px;"></div>
<svg style="left:790px;top:351px" width="88" height="50" viewBox="0 0 88 50"><rect x="0" y="0" width="88" height="50" fill="#2b605a"/><path d="M0 2 L40 22 V28 L0 48 Z M88 2 L48 22 V28 L88 48 Z" fill="#7a5f57"/><path d="M0 14 L30 24 V26 L0 36 Z M88 14 L58 24 V26 L88 36 Z" fill="#2b605a" fill-opacity="0.55"/></svg>
<div style="left:790px;top:409px;width:88px;height:20px;background:#39706a;border-radius:0 0 2px 2px;"></div>
<div style="left:795px;top:409px;width:84px;height:20px;line-height:20px;font-size:11.4px;color:#7ba79f;text-align:left;font-weight:normal;white-space:nowrap;overflow:hidden;">Grid_05</div>
<div style="left:790px;top:351px;width:88px;height:50px;line-height:50px;font-size:10.7px;color:#ffffff;text-align:center;font-weight:normal;white-space:nowrap;overflow:hidden;">1/C-1</div>
<div style="left:790px;top:409px;width:88px;height:20px;line-height:20px;font-size:10.7px;color:#ffffff;text-align:center;font-weight:normal;white-space:nowrap;overflow:hidden;">1/C-1</div>
<div style="left:880px;top:343px;width:88px;height:86px;background:#2e665c;border-radius:2px;"></div>
<svg style="left:880px;top:351px" width="88" height="50" viewBox="0 0 88 50"><rect x="0" y="0" width="88" height="50" fill="#2b605a"/><rect x="26" y="14" width="6" height="6" fill="none" stroke="#8fd8c8" stroke-opacity="0.35"/><rect x="50" y="6" width="6" height="6" fill="none" stroke="#8fd8c8" stroke-opacity="0.35"/><rect x="56" y="16" width="6" height="6" fill="none" stroke="#8fd8c8" stroke-opacity="0.35"/><rect x="38" y="34" width="6" height="6" fill="none" stroke="#8fd8c8" stroke-opacity="0.35"/><path d="M36 2 V10 M60 28 V34 M34 40 V50 M40 38 V50" stroke="#7a5f57" stroke-width="2"/><circle cx="58" cy="14" r="1.5" fill="#c06060"/></svg>
<div style="left:880px;top:409px;width:88px;height:20px;background:#39706a;border-radius:0 0 2px 2px;"></div>
<div style="left:885px;top:409px;width:84px;height:20px;line-height:20px;font-size:11.4px;color:#7ba79f;text-align:left;font-weight:normal;white-space:nowrap;overflow:hidden;">Grid_01</div>
<div style="left:880px;top:351px;width:88px;height:50px;line-height:50px;font-size:10.7px;color:#ffffff;text-align:center;font-weight:normal;white-space:nowrap;overflow:hidden;">1/C#-1</div>
<div style="left:880px;top:409px;width:88px;height:20px;line-height:20px;font-size:10.7px;color:#ffffff;text-align:center;font-weight:normal;white-space:nowrap;overflow:hidden;">1/C#-1</div>
<div style="left:970px;top:343px;width:88px;height:86px;background:#2e665c;border-radius:2px;"></div>
<svg style="left:970px;top:351px" width="88" height="50" viewBox="0 0 88 50"><rect x="0" y="0" width="88" height="50" fill="#2b605a"/><rect x="10" y="8" width="10" height="34" fill="#7a5f57" fill-opacity="0.55"/><rect x="62" y="8" width="10" height="34" fill="#7a5f57" fill-opacity="0.6"/><rect x="6" y="4" width="76" height="40" fill="none" stroke="#7fb0a5" stroke-width="0.6" stroke-opacity="0.6"/><path d="M28 46 H40 M56 46 H70" stroke="#8fc0b5" stroke-width="0.8"/></svg>
<div style="left:970px;top:409px;width:88px;height:20px;background:#39706a;border-radius:0 0 2px 2px;"></div>
<div style="left:975px;top:409px;width:84px;height:20px;line-height:20px;font-size:11.4px;color:#7ba79f;text-align:left;font-weight:normal;white-space:nowrap;overflow:hidden;">Grid_06</div>
<div style="left:970px;top:351px;width:88px;height:50px;line-height:50px;font-size:10.7px;color:#ffffff;text-align:center;font-weight:normal;white-space:nowrap;overflow:hidden;">1/D-1</div>
<div style="left:970px;top:409px;width:88px;height:20px;line-height:20px;font-size:10.7px;color:#ffffff;text-align:center;font-weight:normal;white-space:nowrap;overflow:hidden;">1/D-1</div>
<div style="left:1060px;top:343px;width:88px;height:86px;background:#2e665c;border-radius:2px;"></div>
<svg style="left:1060px;top:351px" width="88" height="50" viewBox="0 0 88 50"><rect x="0" y="0" width="88" height="50" fill="#2b605a"/><path d="M50.0 25.0 L94.0 25.0" stroke="#7a5f57" stroke-width="0.8" stroke-dasharray="1 2" stroke-opacity="0.7"/><path d="M49.8 26.3 L92.3 32.8" stroke="#7fc4b4" stroke-width="0.8" stroke-dasharray="1 2" stroke-opacity="0.7"/><path d="M49.2 27.5 L87.3 40.0" stroke="#7fc4b4" stroke-width="0.8" stroke-dasharray="1 2" stroke-opacity="0.7"/><path d="M48.2 28.5 L79.4 46.2" stroke="#7a5f57" stroke-width="0.8" stroke-dasharray="1 2" stroke-opacity="0.7"/><path d="M47.0 29.3 L69.0 51.0" stroke="#7fc4b4" stroke-width="0.8" stroke-dasharray="1 2" stroke-opacity="0.7"/><path d="M45.6 29.8 L56.9 54.0" stroke="#7fc4b4" stroke-width="0.8" stroke-dasharray="1 2" stroke-opacity="0.7"/><path d="M44.0 30.0 L44.0 55.0" stroke="#7a5f57" stroke-width="0.8" stroke-dasharray="1 2" stroke-opacity="0.7"/><path d="M42.4 29.8 L31.1 54.0" stroke="#7fc4b4" stroke-width="0.8" stroke-dasharray="1 2" stroke-opacity="0.7"/><path d="M41.0 29.3 L19.0 51.0" stroke="#7fc4b4" stroke-width="0.8" stroke-dasharray="1 2" stroke-opacity="0.7"/><path d="M39.8 28.5 L8.6 46.2" stroke="#7a5f57" stroke-width="0.8" stroke-dasharray="1 2" stroke-opacity="0.7"/><path d="M38.8 27.5 L0.7 40.0" stroke="#7fc4b4" stroke-width="0.8" stroke-dasharray="1 2" stroke-opacity="0.7"/><path d="M38.2 26.3 L-4.3 32.8" stroke="#7fc4b4" stroke-width="0.8" stroke-dasharray="1 2" stroke-opacity="0.7"/><path d="M38.0 25.0 L-6.0 25.0" stroke="#7a5f57" stroke-width="0.8" stroke-dasharray="1 2" stroke-opacity="0.7"/><path d="M38.2 23.7 L-4.3 17.2" stroke="#7fc4b4" stroke-width="0.8" stroke-dasharray="1 2" stroke-opacity="0.7"/><path d="M38.8 22.5 L0.7 10.0" stroke="#7fc4b4" stroke-width="0.8" stroke-dasharray="1 2" stroke-opacity="0.7"/><path d="M39.8 21.5 L8.6 3.8" stroke="#7a5f57" stroke-width="0.8" stroke-dasharray="1 2" stroke-opacity="0.7"/><path d="M41.0 20.7 L19.0 -1.0" stroke="#7fc4b4" stroke-width="0.8" stroke-dasharray="1 2" stroke-opacity="0.7"/><path d="M42.4 20.2 L31.1 -4.0" stroke="#7fc4b4" stroke-width="0.8" stroke-dasharray="1 2" stroke-opacity="0.7"/><path d="M44.0 20.0 L44.0 -5.0" stroke="#7a5f57" stroke-width="0.8" stroke-dasharray="1 2" stroke-opacity="0.7"/><path d="M45.6 20.2 L56.9 -4.0" stroke="#7fc4b4" stroke-width="0.8" stroke-dasharray="1 2" stroke-opacity="0.7"/><path d="M47.0 20.7 L69.0 -1.0" stroke="#7fc4b4" stroke-width="0.8" stroke-dasharray="1 2" stroke-opacity="0.7"/><path d="M48.2 21.5 L79.4 3.8" stroke="#7a5f57" stroke-width="0.8" stroke-dasharray="1 2" stroke-opacity="0.7"/><path d="M49.2 22.5 L87.3 10.0" stroke="#7fc4b4" stroke-width="0.8" stroke-dasharray="1 2" stroke-opacity="0.7"/><path d="M49.8 23.7 L92.3 17.2" stroke="#7fc4b4" stroke-width="0.8" stroke-dasharray="1 2" stroke-opacity="0.7"/></svg>
<div style="left:1060px;top:409px;width:88px;height:20px;background:#39706a;border-radius:0 0 2px 2px;"></div>
<div style="left:1065px;top:409px;width:84px;height:20px;line-height:20px;font-size:11.4px;color:#7ba79f;text-align:left;font-weight:normal;white-space:nowrap;overflow:hidden;">Grid_06</div>
<div style="left:1060px;top:351px;width:88px;height:50px;line-height:50px;font-size:10.7px;color:#ffffff;text-align:center;font-weight:normal;white-space:nowrap;overflow:hidden;">1/D#-1</div>
<div style="left:1150px;top:343px;width:88px;height:86px;background:#2e665c;border-radius:2px;"></div>
<div style="left:1150px;top:409px;width:88px;height:20px;background:#39706a;border-radius:0 0 2px 2px;"></div>
<div style="left:1240px;top:343px;width:88px;height:86px;background:#2e665c;border-radius:2px;"></div>
<div style="left:1240px;top:409px;width:88px;height:20px;background:#39706a;border-radius:0 0 2px 2px;"></div>
<div style="left:1330px;top:343px;width:88px;height:86px;background:#2e665c;border-radius:2px;"></div>
<div style="left:1330px;top:409px;width:88px;height:20px;background:#39706a;border-radius:0 0 2px 2px;"></div>
<div style="left:430px;top:434px;width:88px;height:86px;background:#2e665c;border-radius:2px;"></div>
<div style="left:430px;top:500px;width:88px;height:20px;background:#4fa796;border-radius:0 0 2px 2px;"></div>
<svg style="left:430px;top:442px" width="88" height="50" viewBox="0 0 88 50"><rect x="0" y="0" width="17.6" height="35" fill="#6f8aa0"/><rect x="17.6" y="0" width="17.6" height="35" fill="#22707a"/><rect x="35.2" y="0" width="17.6" height="35" fill="#256e72"/><rect x="52.8" y="0" width="17.6" height="35" fill="#2a99a8"/><rect x="70.4" y="0" width="17.6" height="35" fill="#28a9a0"/><rect x="0" y="35" width="17.6" height="15" fill="#2aa8a0"/><rect x="17.6" y="35" width="17.6" height="15" fill="#2a9aa8"/><rect x="35.2" y="35" width="17.6" height="15" fill="#256e72"/><rect x="52.8" y="35" width="17.6" height="15" fill="#22707a"/><rect x="70.4" y="35" width="17.6" height="15" fill="#6f8aa0"/></svg>
<svg style="left:430px;top:434px" width="88" height="66" viewBox="0 0 88 66" fill="none" stroke="#fff" stroke-width="2"><path d="M2 13 V2 H13 M75 2 H86 V13 M2 53 V64 H13 M75 64 H86 V53"/></svg>
<div style="left:435px;top:500px;width:84px;height:20px;line-height:20px;font-size:11px;color:#3b7b6f;text-align:left;font-weight:normal;white-space:nowrap;overflow:hidden;letter-spacing:-0.3px;">Charte_&#201;lectrique</div>
<div style="left:430px;top:442px;width:88px;height:50px;line-height:50px;font-size:10.7px;color:#ffffff;text-align:center;font-weight:normal;white-space:nowrap;overflow:hidden;">1/C-2</div>
<div style="left:520px;top:434px;width:88px;height:86px;background:#2e665c;border-radius:2px;"></div>
<div style="left:520px;top:500px;width:88px;height:20px;background:#39706a;border-radius:0 0 2px 2px;"></div>
<div style="left:520px;top:442px;width:88px;height:50px;line-height:50px;font-size:10.7px;color:#ffffff;text-align:center;font-weight:normal;white-space:nowrap;overflow:hidden;">1/C#-2</div>
<div style="left:610px;top:434px;width:88px;height:86px;background:#2e665c;border-radius:2px;"></div>
<div style="left:610px;top:500px;width:88px;height:20px;background:#39706a;border-radius:0 0 2px 2px;"></div>
<div style="left:610px;top:442px;width:88px;height:50px;line-height:50px;font-size:10.7px;color:#ffffff;text-align:center;font-weight:normal;white-space:nowrap;overflow:hidden;">1/D-2</div>
<div style="left:700px;top:434px;width:88px;height:86px;background:#2e665c;border-radius:2px;"></div>
<div style="left:700px;top:500px;width:88px;height:20px;background:#39706a;border-radius:0 0 2px 2px;"></div>
<div style="left:700px;top:442px;width:88px;height:50px;line-height:50px;font-size:10.7px;color:#ffffff;text-align:center;font-weight:normal;white-space:nowrap;overflow:hidden;">1/D#-2</div>
<div style="left:790px;top:434px;width:88px;height:86px;background:#2e665c;border-radius:2px;"></div>
<div style="left:790px;top:500px;width:88px;height:20px;background:#39706a;border-radius:0 0 2px 2px;"></div>
<div style="left:790px;top:442px;width:88px;height:50px;line-height:50px;font-size:10.7px;color:#ffffff;text-align:center;font-weight:normal;white-space:nowrap;overflow:hidden;">1/E-2</div>
<div style="left:880px;top:434px;width:88px;height:86px;background:#2e665c;border-radius:2px;"></div>
<div style="left:880px;top:500px;width:88px;height:20px;background:#39706a;border-radius:0 0 2px 2px;"></div>
<div style="left:880px;top:442px;width:88px;height:50px;line-height:50px;font-size:10.7px;color:#ffffff;text-align:center;font-weight:normal;white-space:nowrap;overflow:hidden;">1/F-2</div>
<div style="left:970px;top:434px;width:88px;height:86px;background:#2e665c;border-radius:2px;"></div>
<div style="left:970px;top:500px;width:88px;height:20px;background:#39706a;border-radius:0 0 2px 2px;"></div>
<div style="left:970px;top:442px;width:88px;height:50px;line-height:50px;font-size:10.7px;color:#ffffff;text-align:center;font-weight:normal;white-space:nowrap;overflow:hidden;">1/F#-2</div>
<div style="left:1060px;top:434px;width:88px;height:86px;background:#2e665c;border-radius:2px;"></div>
<div style="left:1060px;top:500px;width:88px;height:20px;background:#39706a;border-radius:0 0 2px 2px;"></div>
<div style="left:1060px;top:442px;width:88px;height:50px;line-height:50px;font-size:10.7px;color:#ffffff;text-align:center;font-weight:normal;white-space:nowrap;overflow:hidden;">1/G-2</div>
<div style="left:1150px;top:434px;width:88px;height:86px;background:#2e665c;border-radius:2px;"></div>
<div style="left:1150px;top:500px;width:88px;height:20px;background:#39706a;border-radius:0 0 2px 2px;"></div>
<div style="left:1240px;top:434px;width:88px;height:86px;background:#2e665c;border-radius:2px;"></div>
<div style="left:1240px;top:500px;width:88px;height:20px;background:#39706a;border-radius:0 0 2px 2px;"></div>
<div style="left:1330px;top:434px;width:88px;height:86px;background:#2e665c;border-radius:2px;"></div>
<div style="left:1330px;top:500px;width:88px;height:20px;background:#39706a;border-radius:0 0 2px 2px;"></div>
<div style="left:0px;top:525px;width:19px;height:20px;background:#39706a;border-radius:2px;"></div>
<div style="left:0px;top:525px;width:19px;height:20px;line-height:20px;font-size:11px;color:#86b3aa;text-align:center;font-weight:normal;white-space:nowrap;overflow:hidden;">A</div>
<div style="left:20px;top:525px;width:330px;height:20px;background:#2c6259;border-radius:2px;"></div>
<div style="left:179px;top:525px;width:12px;height:20px;background:#3f8a7b;"></div>
<div style="left:352px;top:525px;width:19px;height:20px;background:#39706a;border-radius:2px;"></div>
<div style="left:352px;top:525px;width:19px;height:20px;line-height:20px;font-size:11px;color:#86b3aa;text-align:center;font-weight:normal;white-space:nowrap;overflow:hidden;">B</div>
<div style="left:372px;top:525px;width:32px;height:20px;background:#39706a;border-radius:2px;"></div>
<div style="left:388px;top:525px;width:1px;height:20px;background:#33695f;"></div>
<svg style="left:372px;top:525px" width="32" height="20" viewBox="0 0 32 20" fill="#86b8ad"><rect x="6" y="6" width="1.6" height="9"/><path d="M13 6 L8 10.5 L13 15 Z"/><rect x="24.5" y="6" width="1.6" height="9"/><path d="M19 6 L24 10.5 L19 15 Z"/></svg>
<div style="left:405px;top:525px;width:19px;height:20px;background:#39706a;border-radius:2px;"></div>
<div style="left:405px;top:525px;width:19px;height:20px;line-height:20px;font-size:12px;color:#86b3aa;text-align:center;font-weight:normal;white-space:nowrap;overflow:hidden;">&gt;</div>
<div style="left:430px;top:525px;width:167px;height:20px;background:#4fa796;border-radius:2px;"></div>
<div style="left:430px;top:525px;width:167px;height:20px;line-height:20px;font-size:11.7px;color:#33695f;text-align:center;font-weight:normal;white-space:nowrap;overflow:hidden;">RedCode_DXV3_1080p</div>
<div style="left:0px;top:548px;width:1920px;height:36px;background:#2b2b2b;"></div>
<div style="left:37px;top:548px;width:1px;height:36px;background:#111;"></div>
<div style="left:9px;top:557px;width:19px;height:18px;background:#4f8f7d;"></div>
<div style="left:18px;top:565px;width:10px;height:10px;background:#7ff5cf;"></div>
<div style="left:49px;top:549px;width:40px;height:36px;line-height:36px;font-size:12px;color:#e8e8e8;text-align:left;font-weight:normal;white-space:nowrap;overflow:hidden;">BPM</div>
<div style="left:77px;top:556px;width:54px;height:20px;background:#39706a;border-radius:3px;"></div>
<div style="left:77px;top:556px;width:54px;height:20px;line-height:20px;font-size:10.5px;color:#6d9f96;text-align:center;font-weight:normal;white-space:nowrap;overflow:hidden;">120.00</div>
<div style="left:77px;top:556px;width:54px;height:20px;line-height:20px;font-size:10.7px;color:#ffffff;text-align:center;font-weight:normal;white-space:nowrap;overflow:hidden;">1/CC13</div>
<div style="left:136px;top:548px;width:1px;height:36px;background:#111;"></div>
<div style="left:136px;top:548px;width:529px;height:36px;background:#000;"></div>
<div style="left:137px;top:548px;width:35px;height:36px;background:#366f65;border-radius:2px;"></div>
<div style="left:137px;top:548px;width:35px;height:36px;line-height:36px;font-size:12.5px;color:#7fa9a1;text-align:center;font-weight:normal;white-space:nowrap;overflow:hidden;">-</div>
<div style="left:174px;top:548px;width:35px;height:36px;background:#366f65;border-radius:2px;"></div>
<div style="left:174px;top:548px;width:35px;height:36px;line-height:36px;font-size:12.5px;color:#7fa9a1;text-align:center;font-weight:normal;white-space:nowrap;overflow:hidden;">+</div>
<div style="left:211px;top:548px;width:35px;height:36px;background:#366f65;border-radius:2px;"></div>
<div style="left:211px;top:548px;width:35px;height:36px;line-height:36px;font-size:12.5px;color:#7fa9a1;text-align:center;font-weight:normal;white-space:nowrap;overflow:hidden;">-|</div>
<div style="left:248px;top:548px;width:35px;height:36px;background:#366f65;border-radius:2px;"></div>
<div style="left:248px;top:548px;width:35px;height:36px;line-height:36px;font-size:12.5px;color:#7fa9a1;text-align:center;font-weight:normal;white-space:nowrap;overflow:hidden;">|+</div>
<div style="left:285px;top:548px;width:36px;height:36px;background:#366f65;border-radius:2px;"></div>
<div style="left:285px;top:548px;width:36px;height:36px;line-height:36px;font-size:12.5px;color:#7fa9a1;text-align:center;font-weight:normal;white-space:nowrap;overflow:hidden;">/2</div>
<div style="left:322px;top:548px;width:35px;height:36px;background:#366f65;border-radius:2px;"></div>
<div style="left:322px;top:548px;width:35px;height:36px;line-height:36px;font-size:12.5px;color:#7fa9a1;text-align:center;font-weight:normal;white-space:nowrap;overflow:hidden;">*2</div>
<div style="left:359px;top:548px;width:51px;height:36px;background:#366f65;border-radius:2px;"></div>
<div style="left:412px;top:548px;width:74px;height:36px;background:#366f65;border-radius:2px;"></div>
<div style="left:412px;top:548px;width:74px;height:36px;line-height:36px;font-size:10.7px;color:#7fa9a1;text-align:center;font-weight:normal;white-space:nowrap;overflow:hidden;">RESYNC</div>
<div style="left:488px;top:548px;width:71px;height:36px;background:#366f65;border-radius:2px;"></div>
<div style="left:488px;top:548px;width:71px;height:36px;line-height:36px;font-size:10.7px;color:#7fa9a1;text-align:center;font-weight:normal;white-space:nowrap;overflow:hidden;">PAUSE</div>
<div style="left:561px;top:548px;width:103px;height:36px;background:#366f65;border-radius:2px;"></div>
<div style="left:561px;top:548px;width:103px;height:36px;line-height:36px;font-size:10.7px;color:#7fa9a1;text-align:center;font-weight:normal;white-space:nowrap;overflow:hidden;">METRONOME</div>
<div style="left:359px;top:548px;width:51px;height:36px;line-height:36px;font-size:11px;color:#6d9f96;text-align:center;font-weight:normal;white-space:nowrap;overflow:hidden;">TAP</div>
<div style="left:359px;top:548px;width:51px;height:36px;line-height:36px;font-size:10.7px;color:#ffffff;text-align:center;font-weight:normal;white-space:nowrap;overflow:hidden;">1/D#6</div>
<div style="left:412px;top:548px;width:74px;height:36px;line-height:36px;font-size:10.7px;color:#ffffff;text-align:center;font-weight:normal;white-space:nowrap;overflow:hidden;">1/F#5</div>
<div style="left:1912px;top:548px;width:8px;height:36px;background:#39706a;border-radius:3px 0 0 3px;"></div>
<div style="left:0px;top:587px;width:323px;height:21px;background:#2a2a2a;border-radius:3px 3px 0 0;"></div>
<div style="left:0px;top:588px;width:323px;height:21px;line-height:21px;font-size:12px;color:#d0d0d0;text-align:center;font-weight:normal;white-space:nowrap;overflow:hidden;">Output Monitor</div>
<div style="left:0px;top:608px;width:321px;height:444px;background:#161616;"></div>
<div style="left:321px;top:608px;width:2px;height:444px;background:#0e0e0e;"></div>
<div style="left:2px;top:608px;width:319px;height:20px;background:#0c0c0c;"></div>
<div style="left:9px;top:608px;width:200px;height:20px;line-height:20px;font-size:12.2px;color:#ececec;text-align:left;font-weight:normal;white-space:nowrap;overflow:hidden;">Output Monitor</div>
<svg style="left:301px;top:611px" width="14" height="14" viewBox="0 0 14 14"><polygon points="13.08,5.79 11.22,7.84 12.16,10.44 9.39,10.58 8.21,13.08 6.16,11.22 3.56,12.16 3.42,9.39 0.92,8.21 2.78,6.16 1.84,3.56 4.61,3.42 5.79,0.92 7.84,2.78 10.44,1.84 10.58,4.61" fill="#c8c8c8"/><circle cx="7" cy="7" r="4.4" fill="#c8c8c8"/><circle cx="7" cy="7" r="2" fill="#0c0c0c"/></svg>
<div style="left:2px;top:628px;width:319px;height:179px;background:#000;"></div>
<div style="left:2px;top:807px;width:319px;height:22px;background:#151515;"></div>
<div style="left:10px;top:807px;width:200px;height:22px;line-height:22px;font-size:12px;color:#dcdcdc;text-align:left;font-weight:normal;white-space:nowrap;overflow:hidden;letter-spacing:0.9px;">Preview Monitor</div>
<div style="left:2px;top:829px;width:319px;height:180px;background:#000;background-image:linear-gradient(45deg,#3a3a3a 25%,transparent 25%,transparent 75%,#3a3a3a 75%),linear-gradient(45deg,#3a3a3a 25%,transparent 25%,transparent 75%,#3a3a3a 75%);background-size:16px 16px;background-position:0 0,8px 8px;"></div>
<div style="left:326px;top:587px;width:311px;height:21px;background:#2a2a2a;border-radius:3px 3px 0 0;"></div>
<div style="left:326px;top:588px;width:311px;height:21px;line-height:21px;font-size:12px;color:#d0d0d0;text-align:center;font-weight:normal;white-space:nowrap;overflow:hidden;">Composition</div>
<div style="left:326px;top:608px;width:311px;height:444px;background:#0d0d0d;"></div>
<div style="left:326px;top:609px;width:311px;height:35px;background:#161616;"></div>
<div style="left:339px;top:609px;width:260px;height:35px;line-height:35px;font-size:13px;color:#f4f4f4;text-align:left;font-weight:bold;white-space:nowrap;overflow:hidden;">Essai clavier midi (1920 x 1080)</div>
<svg style="left:608px;top:620px" width="14" height="14" viewBox="0 0 14 14"><polygon points="13.08,5.79 11.22,7.84 12.16,10.44 9.39,10.58 8.21,13.08 6.16,11.22 3.56,12.16 3.42,9.39 0.92,8.21 2.78,6.16 1.84,3.56 4.61,3.42 5.79,0.92 7.84,2.78 10.44,1.84 10.58,4.61" fill="#bdbdbd"/><circle cx="7" cy="7" r="4.4" fill="#bdbdbd"/><circle cx="7" cy="7" r="2" fill="#161616"/></svg>
<div style="left:326px;top:645px;width:311px;height:23px;background:#2b2b2b;"></div>
<svg style="left:333px;top:652px" width="8" height="10" viewBox="0 0 8 10"><path d="M1 1 L7 5 L1 9 Z" fill="#8a8a8a"/></svg>
<div style="left:347px;top:644px;width:200px;height:23px;line-height:23px;font-size:11.7px;color:#ececec;text-align:left;font-weight:normal;white-space:nowrap;overflow:hidden;">Dashboard</div>
<div style="left:326px;top:669px;width:311px;height:23px;background:#2b2b2b;"></div>
<svg style="left:333px;top:676px" width="8" height="10" viewBox="0 0 8 10"><path d="M1 1 L7 5 L1 9 Z" fill="#8a8a8a"/></svg>
<div style="left:347px;top:668px;width:200px;height:23px;line-height:23px;font-size:11.7px;color:#ececec;text-align:left;font-weight:normal;white-space:nowrap;overflow:hidden;">Common</div>
<div style="left:326px;top:693px;width:311px;height:23px;background:#2b2b2b;"></div>
<svg style="left:333px;top:700px" width="8" height="10" viewBox="0 0 8 10"><path d="M1 1 L7 5 L1 9 Z" fill="#8a8a8a"/></svg>
<div style="left:347px;top:692px;width:200px;height:23px;line-height:23px;font-size:11.7px;color:#ececec;text-align:left;font-weight:normal;white-space:nowrap;overflow:hidden;">Audio</div>
<div style="left:326px;top:717px;width:311px;height:23px;background:#2b2b2b;"></div>
<svg style="left:333px;top:724px" width="8" height="10" viewBox="0 0 8 10"><path d="M1 1 L7 5 L1 9 Z" fill="#8a8a8a"/></svg>
<div style="left:347px;top:716px;width:200px;height:23px;line-height:23px;font-size:11.7px;color:#ececec;text-align:left;font-weight:normal;white-space:nowrap;overflow:hidden;">Video</div>
<div style="left:326px;top:741px;width:311px;height:23px;background:#2b2b2b;"></div>
<svg style="left:332px;top:749px" width="10" height="8" viewBox="0 0 10 8"><path d="M1 1 H9 L5 7 Z" fill="#8a8a8a"/></svg>
<div style="left:347px;top:740px;width:200px;height:23px;line-height:23px;font-size:11.7px;color:#ececec;text-align:left;font-weight:normal;white-space:nowrap;overflow:hidden;">CrossFader</div>
<div style="left:326px;top:765px;width:311px;height:23px;background:#151515;"></div>
<div style="left:326px;top:764px;width:80px;height:23px;line-height:23px;font-size:11.7px;color:#ececec;text-align:right;font-weight:normal;white-space:nowrap;overflow:hidden;">Blend Mode</div>
<div style="left:413px;top:765px;width:74px;height:23px;background:#2e665c;border-radius:2px;"></div>
<div style="left:420px;top:765px;width:60px;height:23px;line-height:23px;font-size:11.5px;color:#6d9e95;text-align:left;font-weight:normal;white-space:nowrap;overflow:hidden;">Alpha</div>
<svg style="left:474px;top:774px" width="9" height="6"><path d="M0 0 H9 L4.5 5 Z" fill="#8fc0b5"/></svg>
<div style="left:326px;top:789px;width:311px;height:23px;background:#151515;"></div>
<div style="left:326px;top:788px;width:80px;height:23px;line-height:23px;font-size:11.7px;color:#ececec;text-align:right;font-weight:normal;white-space:nowrap;overflow:hidden;">Behaviour</div>
<div style="left:413px;top:789px;width:74px;height:23px;background:#2e665c;border-radius:2px;"></div>
<div style="left:420px;top:789px;width:60px;height:23px;line-height:23px;font-size:11.5px;color:#6d9e95;text-align:left;font-weight:normal;white-space:nowrap;overflow:hidden;">Cut</div>
<svg style="left:474px;top:798px" width="9" height="6"><path d="M0 0 H9 L4.5 5 Z" fill="#8fc0b5"/></svg>
<div style="left:326px;top:813px;width:311px;height:23px;background:#151515;"></div>
<div style="left:326px;top:812px;width:80px;height:23px;line-height:23px;font-size:11.7px;color:#ececec;text-align:right;font-weight:normal;white-space:nowrap;overflow:hidden;">Curve</div>
<div style="left:413px;top:813px;width:74px;height:23px;background:#2e665c;border-radius:2px;"></div>
<div style="left:420px;top:813px;width:60px;height:23px;line-height:23px;font-size:11.5px;color:#6d9e95;text-align:left;font-weight:normal;white-space:nowrap;overflow:hidden;">Linear</div>
<svg style="left:474px;top:822px" width="9" height="6"><path d="M0 0 H9 L4.5 5 Z" fill="#8fc0b5"/></svg>
<div style="left:326px;top:837px;width:311px;height:23px;background:#2d5548;"></div>
<svg style="left:332px;top:845px" width="10" height="8" viewBox="0 0 10 8"><path d="M1 1 H9 L5 7 Z" fill="#8a8a8a"/></svg>
<div style="left:347px;top:836px;width:200px;height:23px;line-height:23px;font-size:11.7px;color:#ececec;text-align:left;font-weight:normal;white-space:nowrap;overflow:hidden;">Transform</div>
<div style="left:590px;top:837px;width:1px;height:23px;background:#1a1a1a;"></div>
<div style="left:613px;top:837px;width:1px;height:23px;background:#1a1a1a;"></div>
<div style="left:591px;top:836px;width:22px;height:23px;line-height:23px;font-size:13px;color:#e8e8e8;text-align:center;font-weight:normal;white-space:nowrap;overflow:hidden;">P.</div>
<svg style="left:619px;top:844px" width="12" height="10" viewBox="0 0 12 10"><path d="M1 1.5 H11 M1 5 H11 M1 8.5 H11" stroke="#e0e0e0" stroke-width="1.3"/></svg>
<div style="left:326px;top:861px;width:311px;height:23px;background:#151515;"></div>
<div style="left:326px;top:860px;width:80px;height:23px;line-height:23px;font-size:11.7px;color:#ececec;text-align:right;font-weight:normal;white-space:nowrap;overflow:hidden;">Position X</div>
<div style="left:413px;top:861px;width:102px;height:23px;background:#2e665c;border-radius:2px;"></div>
<div style="left:419px;top:861px;width:60px;height:23px;line-height:23px;font-size:11.5px;color:#6d9e95;text-align:left;font-weight:normal;white-space:nowrap;overflow:hidden;">0</div>
<div style="left:473px;top:861px;width:12px;height:23px;line-height:23px;font-size:12px;color:#7aa9a0;text-align:center;font-weight:normal;white-space:nowrap;overflow:hidden;">-</div>
<div style="left:496px;top:861px;width:12px;height:23px;line-height:23px;font-size:13px;color:#7aa9a0;text-align:center;font-weight:normal;white-space:nowrap;overflow:hidden;">+</div>
<div style="left:326px;top:885px;width:311px;height:23px;background:#151515;"></div>
<div style="left:326px;top:884px;width:80px;height:23px;line-height:23px;font-size:11.7px;color:#ececec;text-align:right;font-weight:normal;white-space:nowrap;overflow:hidden;">Position Y</div>
<div style="left:413px;top:885px;width:102px;height:23px;background:#2e665c;border-radius:2px;"></div>
<div style="left:419px;top:885px;width:60px;height:23px;line-height:23px;font-size:11.5px;color:#6d9e95;text-align:left;font-weight:normal;white-space:nowrap;overflow:hidden;">0</div>
<div style="left:473px;top:885px;width:12px;height:23px;line-height:23px;font-size:12px;color:#7aa9a0;text-align:center;font-weight:normal;white-space:nowrap;overflow:hidden;">-</div>
<div style="left:496px;top:885px;width:12px;height:23px;line-height:23px;font-size:13px;color:#7aa9a0;text-align:center;font-weight:normal;white-space:nowrap;overflow:hidden;">+</div>
<div style="left:326px;top:909px;width:311px;height:23px;background:#151515;"></div>
<svg style="left:333px;top:916px" width="8" height="10" viewBox="0 0 8 10"><path d="M1 1 L7 5 L1 9 Z" fill="#8a8a8a"/></svg>
<div style="left:347px;top:908px;width:80px;height:23px;line-height:23px;font-size:11.7px;color:#ececec;text-align:left;font-weight:normal;white-space:nowrap;overflow:hidden;">Scale</div>
<div style="left:413px;top:909px;width:224px;height:23px;background:#2e665c;border-radius:2px;"></div>
<div style="left:469px;top:910px;width:164px;height:21px;background:#2d6158;"></div>
<div style="left:419px;top:909px;width:60px;height:23px;line-height:23px;font-size:11.5px;color:#6d9e95;text-align:left;font-weight:normal;white-space:nowrap;overflow:hidden;">100 %</div>
<div style="left:469px;top:911px;width:15px;height:19px;background:#346f66;"></div>
<div style="left:484px;top:912px;width:5px;height:17px;background:#3f8373;"></div>
<div style="left:326px;top:933px;width:311px;height:23px;background:#151515;"></div>
<svg style="left:333px;top:940px" width="8" height="10" viewBox="0 0 8 10"><path d="M1 1 L7 5 L1 9 Z" fill="#8a8a8a"/></svg>
<div style="left:347px;top:932px;width:80px;height:23px;line-height:23px;font-size:11.7px;color:#ececec;text-align:left;font-weight:normal;white-space:nowrap;overflow:hidden;">Rotation</div>
<div style="left:413px;top:933px;width:224px;height:23px;background:#2e665c;border-radius:2px;"></div>
<div style="left:469px;top:934px;width:164px;height:21px;background:#2d6158;"></div>
<div style="left:419px;top:933px;width:60px;height:23px;line-height:23px;font-size:11.5px;color:#6d9e95;text-align:left;font-weight:normal;white-space:nowrap;overflow:hidden;">0 &#176;</div>
<div style="left:547px;top:936px;width:5px;height:17px;background:#3f8373;"></div>
<div style="left:326px;top:957px;width:311px;height:23px;background:#151515;"></div>
<svg style="left:333px;top:964px" width="8" height="10" viewBox="0 0 8 10"><path d="M1 1 L7 5 L1 9 Z" fill="#8a8a8a"/></svg>
<div style="left:347px;top:956px;width:80px;height:23px;line-height:23px;font-size:11.7px;color:#ececec;text-align:left;font-weight:normal;white-space:nowrap;overflow:hidden;">Anchor</div>
<div style="left:413px;top:957px;width:224px;height:23px;background:#2e665c;border-radius:2px;"></div>
<div style="left:469px;top:958px;width:164px;height:21px;background:#2d6158;"></div>
<div style="left:419px;top:957px;width:60px;height:23px;line-height:23px;font-size:11.5px;color:#6d9e95;text-align:left;font-weight:normal;white-space:nowrap;overflow:hidden;">0</div>
<div style="left:547px;top:960px;width:5px;height:17px;background:#3f8373;"></div>
<div style="left:326px;top:1005px;width:311px;height:24px;line-height:24px;font-size:12.3px;color:#262626;text-align:center;font-weight:normal;white-space:nowrap;overflow:hidden;">Drop effect or mask here.</div>
<div style="left:640px;top:587px;width:290px;height:21px;background:#2a2a2a;border-radius:3px 3px 0 0;"></div>
<div style="left:640px;top:588px;width:290px;height:21px;line-height:21px;font-size:12px;color:#d0d0d0;text-align:center;font-weight:normal;white-space:nowrap;overflow:hidden;">Layer</div>
<div style="left:640px;top:608px;width:290px;height:444px;background:#0b0b0b;"></div>
<div style="left:640px;top:609px;width:290px;height:35px;background:#161616;"></div>
<div style="left:648px;top:618px;width:123px;height:18px;background:#050505;border:1px solid #707070;"></div>
<div style="left:652px;top:618px;width:110px;height:18px;line-height:18px;font-size:11.7px;color:#f0f0f0;text-align:left;font-weight:normal;white-space:nowrap;overflow:hidden;">Layer 5</div>
<svg style="left:901px;top:620px" width="14" height="14" viewBox="0 0 14 14"><polygon points="13.08,5.79 11.22,7.84 12.16,10.44 9.39,10.58 8.21,13.08 6.16,11.22 3.56,12.16 3.42,9.39 0.92,8.21 2.78,6.16 1.84,3.56 4.61,3.42 5.79,0.92 7.84,2.78 10.44,1.84 10.58,4.61" fill="#bdbdbd"/><circle cx="7" cy="7" r="4.4" fill="#bdbdbd"/><circle cx="7" cy="7" r="2" fill="#161616"/></svg>
<div style="left:640px;top:645px;width:290px;height:23px;background:#2b2b2b;"></div>
<svg style="left:647px;top:652px" width="8" height="10" viewBox="0 0 8 10"><path d="M1 1 L7 5 L1 9 Z" fill="#8a8a8a"/></svg>
<div style="left:661px;top:644px;width:200px;height:23px;line-height:23px;font-size:11.7px;color:#ececec;text-align:left;font-weight:normal;white-space:nowrap;overflow:hidden;">Dashboard</div>
<div style="left:640px;top:669px;width:290px;height:23px;background:#2b2b2b;"></div>
<svg style="left:647px;top:676px" width="8" height="10" viewBox="0 0 8 10"><path d="M1 1 L7 5 L1 9 Z" fill="#8a8a8a"/></svg>
<div style="left:661px;top:668px;width:200px;height:23px;line-height:23px;font-size:11.7px;color:#ececec;text-align:left;font-weight:normal;white-space:nowrap;overflow:hidden;">Autopilot</div>
<div style="left:640px;top:693px;width:290px;height:23px;background:#2b2b2b;"></div>
<svg style="left:647px;top:700px" width="8" height="10" viewBox="0 0 8 10"><path d="M1 1 L7 5 L1 9 Z" fill="#8a8a8a"/></svg>
<div style="left:661px;top:692px;width:200px;height:23px;line-height:23px;font-size:11.7px;color:#ececec;text-align:left;font-weight:normal;white-space:nowrap;overflow:hidden;">Common</div>
<div style="left:640px;top:717px;width:290px;height:23px;background:#2b2b2b;"></div>
<svg style="left:647px;top:724px" width="8" height="10" viewBox="0 0 8 10"><path d="M1 1 L7 5 L1 9 Z" fill="#8a8a8a"/></svg>
<div style="left:661px;top:716px;width:200px;height:23px;line-height:23px;font-size:11.7px;color:#ececec;text-align:left;font-weight:normal;white-space:nowrap;overflow:hidden;">Audio</div>
<div style="left:640px;top:741px;width:290px;height:23px;background:#2b2b2b;"></div>
<svg style="left:647px;top:748px" width="8" height="10" viewBox="0 0 8 10"><path d="M1 1 L7 5 L1 9 Z" fill="#8a8a8a"/></svg>
<div style="left:661px;top:740px;width:200px;height:23px;line-height:23px;font-size:11.7px;color:#ececec;text-align:left;font-weight:normal;white-space:nowrap;overflow:hidden;">Video</div>
<div style="left:640px;top:765px;width:290px;height:23px;background:#2b2b2b;"></div>
<svg style="left:647px;top:772px" width="8" height="10" viewBox="0 0 8 10"><path d="M1 1 L7 5 L1 9 Z" fill="#8a8a8a"/></svg>
<div style="left:661px;top:764px;width:200px;height:23px;line-height:23px;font-size:11.7px;color:#ececec;text-align:left;font-weight:normal;white-space:nowrap;overflow:hidden;">Transition</div>
<div style="left:640px;top:789px;width:290px;height:23px;background:#2d5548;"></div>
<svg style="left:647px;top:796px" width="8" height="10" viewBox="0 0 8 10"><path d="M1 1 L7 5 L1 9 Z" fill="#8a8a8a"/></svg>
<div style="left:661px;top:788px;width:200px;height:23px;line-height:23px;font-size:11.7px;color:#ececec;text-align:left;font-weight:normal;white-space:nowrap;overflow:hidden;">Transform</div>
<div style="left:883px;top:789px;width:1px;height:23px;background:#1a1a1a;"></div>
<div style="left:906px;top:789px;width:1px;height:23px;background:#1a1a1a;"></div>
<div style="left:884px;top:788px;width:22px;height:23px;line-height:23px;font-size:13px;color:#e8e8e8;text-align:center;font-weight:normal;white-space:nowrap;overflow:hidden;">P.</div>
<svg style="left:912px;top:796px" width="12" height="10" viewBox="0 0 12 10"><path d="M1 1.5 H11 M1 5 H11 M1 8.5 H11" stroke="#e0e0e0" stroke-width="1.3"/></svg>
<div style="left:640px;top:921px;width:290px;height:24px;line-height:24px;font-size:12.3px;color:#242424;text-align:center;font-weight:normal;white-space:nowrap;overflow:hidden;">Drop effect or mask here.</div>
<div style="left:933px;top:587px;width:290px;height:21px;background:#2a2a2a;border-radius:3px 3px 0 0;"></div>
<div style="left:933px;top:588px;width:290px;height:21px;line-height:21px;font-size:12px;color:#d0d0d0;text-align:center;font-weight:normal;white-space:nowrap;overflow:hidden;">Clip</div>
<div style="left:933px;top:608px;width:290px;height:444px;background:#0b0b0b;"></div>
<div style="left:933px;top:609px;width:290px;height:35px;background:#0a1a24;background:linear-gradient(90deg,#a0609c 0px,#a0609c 56px,#0c3550 62px,#06314e 115px,#041a26 140px,#04161e 170px,#0a7fa0 176px,#0a86a6 225px,#10a4a4 235px,#10a4a4 290px);"></div>
<div style="left:941px;top:618px;width:123px;height:18px;background:rgba(10,10,16,0.55);border:1px solid #777;"></div>
<div style="left:946px;top:618px;width:115px;height:18px;line-height:18px;font-size:11.9px;color:#f4f4f4;text-align:left;font-weight:normal;white-space:nowrap;overflow:hidden;">Charte_&#201;lectrique</div>
<svg style="left:1194px;top:620px" width="14" height="14" viewBox="0 0 14 14"><polygon points="13.08,5.79 11.22,7.84 12.16,10.44 9.39,10.58 8.21,13.08 6.16,11.22 3.56,12.16 3.42,9.39 0.92,8.21 2.78,6.16 1.84,3.56 4.61,3.42 5.79,0.92 7.84,2.78 10.44,1.84 10.58,4.61" fill="#c9dfe0"/><circle cx="7" cy="7" r="4.4" fill="#c9dfe0"/><circle cx="7" cy="7" r="2" fill="#10a4a4"/></svg>
<div style="left:933px;top:645px;width:290px;height:23px;background:#2b2b2b;"></div>
<svg style="left:940px;top:652px" width="8" height="10" viewBox="0 0 8 10"><path d="M1 1 L7 5 L1 9 Z" fill="#8a8a8a"/></svg>
<div style="left:954px;top:644px;width:200px;height:23px;line-height:23px;font-size:11.7px;color:#ececec;text-align:left;font-weight:normal;white-space:nowrap;overflow:hidden;">Dashboard</div>
<div style="left:933px;top:669px;width:290px;height:23px;background:#2b2b2b;"></div>
<svg style="left:940px;top:676px" width="8" height="10" viewBox="0 0 8 10"><path d="M1 1 L7 5 L1 9 Z" fill="#8a8a8a"/></svg>
<div style="left:954px;top:668px;width:200px;height:23px;line-height:23px;font-size:11.7px;color:#ececec;text-align:left;font-weight:normal;white-space:nowrap;overflow:hidden;">Transport</div>
<div style="left:1147px;top:669px;width:72px;height:22px;background:#39706a;border-radius:2px;"></div>
<div style="left:1153px;top:669px;width:50px;height:22px;line-height:22px;font-size:10.5px;color:#6d9e95;text-align:left;font-weight:normal;white-space:nowrap;overflow:hidden;">BPM Sync</div>
<svg style="left:1205px;top:678px" width="9" height="6"><path d="M0 0 H9 L4.5 5 Z" fill="#8fc0b5"/></svg>
<div style="left:933px;top:693px;width:290px;height:47px;background:#2a5046;"></div>
<svg style="left:940px;top:697px" width="8" height="10" viewBox="0 0 8 10"><path d="M1 1 L7 5 L1 9 Z" fill="#8a8a8a"/></svg>
<div style="left:1020px;top:693px;width:2px;height:47px;background:#1e3a33;"></div>
<svg style="left:965px;top:697px" width="49" height="38" viewBox="0 0 49 38"><rect x="0.5" y="0.5" width="48" height="37" fill="#2a5046" stroke="#6a6a6a"/><rect x="1" y="6" width="9.4" height="18" fill="#f080e8"/><rect x="10.4" y="6" width="9.4" height="18" fill="#0a3d70"/><rect x="19.8" y="6" width="9.4" height="18" fill="#052838"/><rect x="29.2" y="6" width="9.4" height="18" fill="#10c0f0"/><rect x="38.6" y="6" width="9.4" height="18" fill="#10f0f0"/><rect x="1" y="24" width="9.4" height="8" fill="#10f0f0"/><rect x="10.4" y="24" width="9.4" height="8" fill="#10c0f0"/><rect x="19.8" y="24" width="9.4" height="8" fill="#052838"/><rect x="29.2" y="24" width="9.4" height="8" fill="#0a3d70"/><rect x="38.6" y="24" width="9.4" height="8" fill="#f080e8"/></svg>
<div style="left:1028px;top:694px;width:140px;height:15px;line-height:15px;font-size:11px;color:#a8bdb6;text-align:left;font-weight:normal;white-space:nowrap;overflow:hidden;">Charte_&#201;lectrique.png</div>
<div style="left:1028px;top:707px;width:140px;height:15px;line-height:15px;font-size:11px;color:#a8bdb6;text-align:left;font-weight:normal;white-space:nowrap;overflow:hidden;">PNG, 1920x1080</div>
<div style="left:1174px;top:694px;width:24px;height:23px;background:#367266;border-radius:2px;"></div>
<svg style="left:1178px;top:698px" width="16" height="15" viewBox="0 0 16 15"><path d="M4 11 L12 4 M8.5 4 H12 V7.5 M4 7.5 V11 H7.5" stroke="#6fb0a0" stroke-width="1.4" fill="none"/></svg>
<svg style="left:1204px;top:699px" width="14" height="14" viewBox="0 0 14 14"><path d="M2 2 L12 12 M12 2 L2 12" stroke="#fff" stroke-width="1.6"/></svg>
<div style="left:1155px;top:720px;width:64px;height:15px;background:#4e9a88;border-radius:2px;"></div>
<div style="left:1155px;top:720px;width:16px;height:15px;line-height:15px;font-size:9px;color:#80b8aa;text-align:center;font-weight:normal;white-space:nowrap;overflow:hidden;">R</div>
<div style="left:1171px;top:721px;width:1px;height:13px;background:#3f8070;"></div>
<div style="left:1171px;top:720px;width:16px;height:15px;line-height:15px;font-size:9px;color:#80b8aa;text-align:center;font-weight:normal;white-space:nowrap;overflow:hidden;">G</div>
<div style="left:1187px;top:721px;width:1px;height:13px;background:#3f8070;"></div>
<div style="left:1187px;top:720px;width:16px;height:15px;line-height:15px;font-size:9px;color:#80b8aa;text-align:center;font-weight:normal;white-space:nowrap;overflow:hidden;">B</div>
<div style="left:1203px;top:721px;width:1px;height:13px;background:#3f8070;"></div>
<div style="left:1203px;top:720px;width:16px;height:15px;line-height:15px;font-size:9px;color:#80b8aa;text-align:center;font-weight:normal;white-space:nowrap;overflow:hidden;">A</div>
<div style="left:933px;top:741px;width:290px;height:23px;background:#2d5548;"></div>
<svg style="left:939px;top:749px" width="10" height="8" viewBox="0 0 10 8"><path d="M1 1 H9 L5 7 Z" fill="#8a8a8a"/></svg>
<div style="left:954px;top:740px;width:200px;height:23px;line-height:23px;font-size:11.7px;color:#ececec;text-align:left;font-weight:normal;white-space:nowrap;overflow:hidden;">Transform</div>
<div style="left:1176px;top:741px;width:1px;height:23px;background:#1a1a1a;"></div>
<div style="left:1199px;top:741px;width:1px;height:23px;background:#1a1a1a;"></div>
<div style="left:1177px;top:740px;width:22px;height:23px;line-height:23px;font-size:13px;color:#e8e8e8;text-align:center;font-weight:normal;white-space:nowrap;overflow:hidden;">P.</div>
<svg style="left:1205px;top:748px" width="12" height="10" viewBox="0 0 12 10"><path d="M1 1.5 H11 M1 5 H11 M1 8.5 H11" stroke="#e0e0e0" stroke-width="1.3"/></svg>
<div style="left:933px;top:765px;width:290px;height:23px;background:#151515;"></div>
<div style="left:933px;top:764px;width:80px;height:23px;line-height:23px;font-size:11.7px;color:#ececec;text-align:right;font-weight:normal;white-space:nowrap;overflow:hidden;">Position X</div>
<div style="left:1020px;top:765px;width:102px;height:23px;background:#2e665c;border-radius:2px;"></div>
<div style="left:1026px;top:765px;width:60px;height:23px;line-height:23px;font-size:11.5px;color:#6d9e95;text-align:left;font-weight:normal;white-space:nowrap;overflow:hidden;">627</div>
<div style="left:1080px;top:765px;width:12px;height:23px;line-height:23px;font-size:12px;color:#7aa9a0;text-align:center;font-weight:normal;white-space:nowrap;overflow:hidden;">-</div>
<div style="left:1103px;top:765px;width:12px;height:23px;line-height:23px;font-size:13px;color:#7aa9a0;text-align:center;font-weight:normal;white-space:nowrap;overflow:hidden;">+</div>
<div style="left:933px;top:789px;width:290px;height:23px;background:#151515;"></div>
<div style="left:933px;top:788px;width:80px;height:23px;line-height:23px;font-size:11.7px;color:#ececec;text-align:right;font-weight:normal;white-space:nowrap;overflow:hidden;">Position Y</div>
<div style="left:1020px;top:789px;width:102px;height:23px;background:#2e665c;border-radius:2px;"></div>
<div style="left:1026px;top:789px;width:60px;height:23px;line-height:23px;font-size:11.5px;color:#6d9e95;text-align:left;font-weight:normal;white-space:nowrap;overflow:hidden;">0</div>
<div style="left:1080px;top:789px;width:12px;height:23px;line-height:23px;font-size:12px;color:#7aa9a0;text-align:center;font-weight:normal;white-space:nowrap;overflow:hidden;">-</div>
<div style="left:1103px;top:789px;width:12px;height:23px;line-height:23px;font-size:13px;color:#7aa9a0;text-align:center;font-weight:normal;white-space:nowrap;overflow:hidden;">+</div>
<div style="left:933px;top:813px;width:290px;height:23px;background:#151515;"></div>
<svg style="left:940px;top:820px" width="8" height="10" viewBox="0 0 8 10"><path d="M1 1 L7 5 L1 9 Z" fill="#8a8a8a"/></svg>
<div style="left:954px;top:812px;width:80px;height:23px;line-height:23px;font-size:11.7px;color:#ececec;text-align:left;font-weight:normal;white-space:nowrap;overflow:hidden;">Scale</div>
<div style="left:1020px;top:813px;width:203px;height:23px;background:#2e665c;border-radius:2px;"></div>
<div style="left:1076px;top:814px;width:143px;height:21px;background:#2d6158;"></div>
<div style="left:1026px;top:813px;width:60px;height:23px;line-height:23px;font-size:11.5px;color:#6d9e95;text-align:left;font-weight:normal;white-space:nowrap;overflow:hidden;">100 %</div>
<div style="left:1076px;top:815px;width:13px;height:19px;background:#346f66;"></div>
<div style="left:1089px;top:816px;width:5px;height:17px;background:#3f8373;"></div>
<div style="left:933px;top:837px;width:290px;height:23px;background:#151515;"></div>
<svg style="left:940px;top:844px" width="8" height="10" viewBox="0 0 8 10"><path d="M1 1 L7 5 L1 9 Z" fill="#8a8a8a"/></svg>
<div style="left:954px;top:836px;width:80px;height:23px;line-height:23px;font-size:11.7px;color:#ececec;text-align:left;font-weight:normal;white-space:nowrap;overflow:hidden;">Rotation</div>
<div style="left:1020px;top:837px;width:203px;height:23px;background:#2e665c;border-radius:2px;"></div>
<div style="left:1076px;top:838px;width:143px;height:21px;background:#2d6158;"></div>
<div style="left:1026px;top:837px;width:60px;height:23px;line-height:23px;font-size:11.5px;color:#6d9e95;text-align:left;font-weight:normal;white-space:nowrap;overflow:hidden;">0 &#176;</div>
<div style="left:1143px;top:840px;width:5px;height:17px;background:#3f8373;"></div>
<div style="left:933px;top:861px;width:290px;height:23px;background:#151515;"></div>
<svg style="left:940px;top:868px" width="8" height="10" viewBox="0 0 8 10"><path d="M1 1 L7 5 L1 9 Z" fill="#8a8a8a"/></svg>
<div style="left:954px;top:860px;width:80px;height:23px;line-height:23px;font-size:11.7px;color:#ececec;text-align:left;font-weight:normal;white-space:nowrap;overflow:hidden;">Anchor</div>
<div style="left:1020px;top:861px;width:203px;height:23px;background:#2e665c;border-radius:2px;"></div>
<div style="left:1076px;top:862px;width:143px;height:21px;background:#2d6158;"></div>
<div style="left:1026px;top:861px;width:60px;height:23px;line-height:23px;font-size:11.5px;color:#6d9e95;text-align:left;font-weight:normal;white-space:nowrap;overflow:hidden;">0</div>
<div style="left:1143px;top:864px;width:5px;height:17px;background:#3f8373;"></div>
<div style="left:933px;top:957px;width:290px;height:24px;line-height:24px;font-size:12.3px;color:#242424;text-align:center;font-weight:normal;white-space:nowrap;overflow:hidden;">Drop audio, video, mask, source or effect here.</div>
<div style="left:1226px;top:587px;width:299px;height:21px;background:#2a2a2a;border-radius:3px 3px 0 0;"></div>
<div style="left:1240px;top:588px;width:120px;height:21px;line-height:21px;font-size:12px;color:#d0d0d0;text-align:center;font-weight:normal;white-space:nowrap;overflow:hidden;">Effects</div>
<div style="left:1226px;top:608px;width:288px;height:444px;background:#0b0b0b;"></div>
<div style="left:1514px;top:608px;width:11px;height:444px;background:#1b1b1b;"></div>
<div style="left:1226px;top:608px;width:299px;height:37px;background:#151515;"></div>
<div style="left:1266px;top:618px;width:108px;height:17px;background:#80ffd0;border-radius:3px;"></div>
<div style="left:1266px;top:618px;width:108px;height:17px;line-height:17px;font-size:9.8px;color:#1a3a30;text-align:center;font-weight:normal;white-space:nowrap;overflow:hidden;">Video | FFGL</div>
<div style="left:1226px;top:645px;width:299px;height:36px;background:#2a2a2a;"></div>
<div style="left:1240px;top:652px;width:200px;height:22px;background:#000;border-radius:4px;"></div>
<svg style="left:1248px;top:656px" width="16" height="16" viewBox="0 0 16 16"><circle cx="6.5" cy="6.5" r="4.3" fill="none" stroke="#7ff0c8" stroke-width="2"/><path d="M9.5 9.5 L13.5 13.5" stroke="#7ff0c8" stroke-width="2.2"/></svg>
<svg style="left:1228px;top:690px" width="10" height="8" viewBox="0 0 10 8"><path d="M1 1 H9 L5 7 Z" fill="#8a8a8a"/></svg>
<div style="left:1241px;top:683px;width:200px;height:23px;line-height:23px;font-size:12px;color:#f0f0f0;text-align:left;font-weight:normal;white-space:nowrap;overflow:hidden;">Add Subtract</div>
<div style="left:1261px;top:706px;width:200px;height:23px;line-height:23px;font-size:11px;color:#a8a8a8;text-align:left;font-weight:normal;white-space:nowrap;overflow:hidden;">Blue</div>
<div style="left:1261px;top:730px;width:200px;height:23px;line-height:23px;font-size:11px;color:#a8a8a8;text-align:left;font-weight:normal;white-space:nowrap;overflow:hidden;">Green</div>
<div style="left:1261px;top:754px;width:200px;height:23px;line-height:23px;font-size:11px;color:#a8a8a8;text-align:left;font-weight:normal;white-space:nowrap;overflow:hidden;">Red</div>
<div style="left:1241px;top:779px;width:200px;height:23px;line-height:23px;font-size:12px;color:#f0f0f0;text-align:left;font-weight:normal;white-space:nowrap;overflow:hidden;">Auto Mask</div>
<div style="left:1241px;top:803px;width:200px;height:23px;line-height:23px;font-size:12px;color:#f0f0f0;text-align:left;font-weight:normal;white-space:nowrap;overflow:hidden;">Bendoscope</div>
<svg style="left:1228px;top:834px" width="10" height="8" viewBox="0 0 10 8"><path d="M1 1 H9 L5 7 Z" fill="#8a8a8a"/></svg>
<div style="left:1241px;top:827px;width:200px;height:23px;line-height:23px;font-size:12px;color:#f0f0f0;text-align:left;font-weight:normal;white-space:nowrap;overflow:hidden;">Blow</div>
<div style="left:1261px;top:850px;width:200px;height:23px;line-height:23px;font-size:11px;color:#a8a8a8;text-align:left;font-weight:normal;white-space:nowrap;overflow:hidden;">Bright Lines</div>
<div style="left:1261px;top:874px;width:200px;height:23px;line-height:23px;font-size:11px;color:#a8a8a8;text-align:left;font-weight:normal;white-space:nowrap;overflow:hidden;">Solid</div>
<div style="left:1241px;top:899px;width:200px;height:23px;line-height:23px;font-size:12px;color:#f0f0f0;text-align:left;font-weight:normal;white-space:nowrap;overflow:hidden;">Blur</div>
<div style="left:1241px;top:923px;width:200px;height:23px;line-height:23px;font-size:12px;color:#f0f0f0;text-align:left;font-weight:normal;white-space:nowrap;overflow:hidden;">Bright.Contrast</div>
<div style="left:1241px;top:947px;width:200px;height:23px;line-height:23px;font-size:12px;color:#f0f0f0;text-align:left;font-weight:normal;white-space:nowrap;overflow:hidden;">ChromaKey</div>
<div style="left:1241px;top:971px;width:200px;height:23px;line-height:23px;font-size:12px;color:#f0f0f0;text-align:left;font-weight:normal;white-space:nowrap;overflow:hidden;">Circles</div>
<div style="left:1241px;top:995px;width:200px;height:23px;line-height:23px;font-size:12px;color:#f0f0f0;text-align:left;font-weight:normal;white-space:nowrap;overflow:hidden;">Color Pass</div>
<svg style="left:1228px;top:1026px" width="10" height="8" viewBox="0 0 10 8"><path d="M1 1 H9 L5 7 Z" fill="#8a8a8a"/></svg>
<div style="left:1241px;top:1019px;width:200px;height:23px;line-height:23px;font-size:12px;color:#f0f0f0;text-align:left;font-weight:normal;white-space:nowrap;overflow:hidden;">Colorize</div>
<div style="left:1261px;top:1042px;width:200px;height:23px;line-height:23px;font-size:11px;color:#a8a8a8;text-align:left;font-weight:normal;white-space:nowrap;overflow:hidden;">Blue</div>
<div style="left:1528px;top:587px;width:392px;height:364px;background:#161616;"></div>
<div style="left:1528px;top:585px;width:392px;height:24px;background:#0c0c0c;"></div>
<div style="left:1528px;top:609px;width:392px;height:35px;background:#2a2a2a;"></div>
<div style="left:1528px;top:644px;width:392px;height:4px;background:#1c1c1c;"></div>
<div style="left:1528px;top:648px;width:392px;height:27px;background:#333333;"></div>
<div style="left:1528px;top:675px;width:392px;height:37px;background:#2a2a2a;"></div>
<div style="left:1528px;top:712px;width:392px;height:2px;background:#000;"></div>
<div style="left:1539px;top:866px;width:60px;height:17px;line-height:17px;font-size:11.6px;color:#f4f4f4;text-align:left;font-weight:bold;white-space:nowrap;overflow:hidden;">Velocity</div>
<div style="left:1593px;top:866px;width:109px;height:17px;background:#262626;border-radius:3px;"></div>
<div style="left:1598px;top:866px;width:90px;height:17px;line-height:17px;font-size:10px;color:#cfcfcf;text-align:left;font-weight:normal;white-space:nowrap;overflow:hidden;letter-spacing:-0.3px;">30 - Akai APC40 m...</div>
<svg style="left:1693px;top:873px" width="6" height="4"><path d="M0 0 H6 L3 4 Z" fill="#888"/></svg>
<div style="left:1528px;top:954px;width:392px;height:20px;background:#2a2a2a;"></div>
<div style="left:1535px;top:954px;width:100px;height:20px;line-height:20px;font-size:12px;color:#f0f0f0;text-align:left;font-weight:normal;white-space:nowrap;overflow:hidden;">Help</div>
<svg style="left:1904px;top:958px" width="11" height="11" viewBox="0 0 11 11"><path d="M1.5 1.5 L9.5 9.5 M9.5 1.5 L1.5 9.5" stroke="#fff" stroke-width="1.3"/></svg>
<div style="left:1528px;top:974px;width:392px;height:80px;background:#0a0a0a;"></div>
<div style="left:1535px;top:975px;width:390px;height:18px;line-height:18px;font-size:10.55px;color:#d8d8d8;text-align:left;font-weight:normal;white-space:nowrap;overflow:hidden;">Move your mouse over the interface element that you would like more info about.</div>
<div style="left:0px;top:1057px;width:1920px;height:23px;background:#2b2b2b;"></div>
<div style="left:9px;top:1057px;width:200px;height:23px;line-height:23px;font-size:10.9px;color:#f0f0f0;text-align:left;font-weight:normal;white-space:nowrap;overflow:hidden;">Resolume Arena 6.1.5</div>
<div style="left:1858px;top:1057px;width:52px;height:23px;line-height:23px;font-size:11.5px;color:#f0f0f0;text-align:right;font-weight:normal;white-space:nowrap;overflow:hidden;">17:44</div>
<div style="left:48px;top:1078px;width:344px;height:2px;background:#5a5a5a;"></div>
<div style="left:1361px;top:131px;width:553px;height:735px;background:#2a2a2a;"></div>
<div style="left:1364px;top:134px;width:15px;height:15px;background:#000000"></div><div style="left:1390px;top:134px;height:17px;line-height:17px;font-size:13.2px;color:#f2f2f2;white-space:nowrap">0 - Akai APC40 mkII</div><div style="left:1364px;top:151px;width:15px;height:15px;background:#1E1E1E"></div><div style="left:1390px;top:151px;height:17px;line-height:17px;font-size:13.2px;color:#f2f2f2;white-space:nowrap">1 - Akai APC40 mkII</div><div style="left:1364px;top:168px;width:15px;height:15px;background:#7F7F7F"></div><div style="left:1390px;top:168px;height:17px;line-height:17px;font-size:13.2px;color:#f2f2f2;white-space:nowrap">2 - Akai APC40 mkII</div><div style="left:1364px;top:185px;width:15px;height:15px;background:#FFFFFF"></div><div style="left:1390px;top:185px;height:17px;line-height:17px;font-size:13.2px;color:#f2f2f2;white-space:nowrap">3 - Akai APC40 mkII</div><div style="left:1364px;top:202px;width:15px;height:15px;background:#FF4C4C"></div><div style="left:1390px;top:202px;height:17px;line-height:17px;font-size:13.2px;color:#f2f2f2;white-space:nowrap">4 - Akai APC40 mkII</div><div style="left:1364px;top:219px;width:15px;height:15px;background:#FF0000"></div><div style="left:1390px;top:219px;height:17px;line-height:17px;font-size:13.2px;color:#f2f2f2;white-space:nowrap">5 - Akai APC40 mkII</div><div style="left:1364px;top:236px;width:15px;height:15px;background:#590000"></div><div style="left:1390px;top:236px;height:17px;line-height:17px;font-size:13.2px;color:#f2f2f2;white-space:nowrap">6 - Akai APC40 mkII</div><div style="left:1364px;top:253px;width:15px;height:15px;background:#190000"></div><div style="left:1390px;top:253px;height:17px;line-height:17px;font-size:13.2px;color:#f2f2f2;white-space:nowrap">7 - Akai APC40 mkII</div><div style="left:1364px;top:270px;width:15px;height:15px;background:#FFBD6C"></div><div style="left:1390px;top:270px;height:17px;line-height:17px;font-size:13.2px;color:#f2f2f2;white-space:nowrap">8 - Akai APC40 mkII</div><div style="left:1364px;top:287px;width:15px;height:15px;background:#FF5400"></div><div style="left:1390px;top:287px;height:17px;line-height:17px;font-size:13.2px;color:#f2f2f2;white-space:nowrap">9 - Akai APC40 mkII</div><div style="left:1364px;top:304px;width:15px;height:15px;background:#591D00"></div><div style="left:1390px;top:304px;height:17px;line-height:17px;font-size:13.2px;color:#f2f2f2;white-space:nowrap">10 - Akai APC40 mkII</div><div style="left:1364px;top:321px;width:15px;height:15px;background:#271B00"></div><div style="left:1390px;top:321px;height:17px;line-height:17px;font-size:13.2px;color:#f2f2f2;white-space:nowrap">11 - Akai APC40 mkII</div><div style="left:1364px;top:338px;width:15px;height:15px;background:#FFFF4C"></div><div style="left:1390px;top:338px;height:17px;line-height:17px;font-size:13.2px;color:#f2f2f2;white-space:nowrap">12 - Akai APC40 mkII</div><div style="left:1364px;top:355px;width:15px;height:15px;background:#FFFF00"></div><div style="left:1390px;top:355px;height:17px;line-height:17px;font-size:13.2px;color:#f2f2f2;white-space:nowrap">13 - Akai APC40 mkII</div><div style="left:1364px;top:372px;width:15px;height:15px;background:#595900"></div><div style="left:1390px;top:372px;height:17px;line-height:17px;font-size:13.2px;color:#f2f2f2;white-space:nowrap">14 - Akai APC40 mkII</div><div style="left:1364px;top:389px;width:15px;height:15px;background:#191900"></div><div style="left:1390px;top:389px;height:17px;line-height:17px;font-size:13.2px;color:#f2f2f2;white-space:nowrap">15 - Akai APC40 mkII</div><div style="left:1364px;top:406px;width:15px;height:15px;background:#88FF4C"></div><div style="left:1390px;top:406px;height:17px;line-height:17px;font-size:13.2px;color:#f2f2f2;white-space:nowrap">16 - Akai APC40 mkII</div><div style="left:1364px;top:423px;width:15px;height:15px;background:#54FF00"></div><div style="left:1390px;top:423px;height:17px;line-height:17px;font-size:13.2px;color:#f2f2f2;white-space:nowrap">17 - Akai APC40 mkII</div><div style="left:1364px;top:440px;width:15px;height:15px;background:#1D5900"></div><div style="left:1390px;top:440px;height:17px;line-height:17px;font-size:13.2px;color:#f2f2f2;white-space:nowrap">18 - Akai APC40 mkII</div><div style="left:1364px;top:457px;width:15px;height:15px;background:#142B00"></div><div style="left:1390px;top:457px;height:17px;line-height:17px;font-size:13.2px;color:#f2f2f2;white-space:nowrap">19 - Akai APC40 mkII</div><div style="left:1364px;top:474px;width:15px;height:15px;background:#4CFF4C"></div><div style="left:1390px;top:474px;height:17px;line-height:17px;font-size:13.2px;color:#f2f2f2;white-space:nowrap">20 - Akai APC40 mkII</div><div style="left:1364px;top:491px;width:15px;height:15px;background:#00FF00"></div><div style="left:1390px;top:491px;height:17px;line-height:17px;font-size:13.2px;color:#f2f2f2;white-space:nowrap">21 - Akai APC40 mkII</div><div style="left:1364px;top:508px;width:15px;height:15px;background:#005900"></div><div style="left:1390px;top:508px;height:17px;line-height:17px;font-size:13.2px;color:#f2f2f2;white-space:nowrap">22 - Akai APC40 mkII</div><div style="left:1364px;top:525px;width:15px;height:15px;background:#001900"></div><div style="left:1390px;top:525px;height:17px;line-height:17px;font-size:13.2px;color:#f2f2f2;white-space:nowrap">23 - Akai APC40 mkII</div><div style="left:1364px;top:542px;width:15px;height:15px;background:#4CFF5E"></div><div style="left:1390px;top:542px;height:17px;line-height:17px;font-size:13.2px;color:#f2f2f2;white-space:nowrap">24 - Akai APC40 mkII</div><div style="left:1364px;top:559px;width:15px;height:15px;background:#00FF19"></div><div style="left:1390px;top:559px;height:17px;line-height:17px;font-size:13.2px;color:#f2f2f2;white-space:nowrap">25 - Akai APC40 mkII</div><div style="left:1364px;top:576px;width:15px;height:15px;background:#00590D"></div><div style="left:1390px;top:576px;height:17px;line-height:17px;font-size:13.2px;color:#f2f2f2;white-space:nowrap">26 - Akai APC40 mkII</div><div style="left:1364px;top:593px;width:15px;height:15px;background:#001902"></div><div style="left:1390px;top:593px;height:17px;line-height:17px;font-size:13.2px;color:#f2f2f2;white-space:nowrap">27 - Akai APC40 mkII</div><div style="left:1364px;top:610px;width:15px;height:15px;background:#4CFF88"></div><div style="left:1390px;top:610px;height:17px;line-height:17px;font-size:13.2px;color:#f2f2f2;white-space:nowrap">28 - Akai APC40 mkII</div><div style="left:1364px;top:627px;width:15px;height:15px;background:#00FF55"></div><div style="left:1390px;top:627px;height:17px;line-height:17px;font-size:13.2px;color:#f2f2f2;white-space:nowrap">29 - Akai APC40 mkII</div><div style="left:1364px;top:644px;width:15px;height:15px;background:#00591D"></div><div style="left:1390px;top:644px;height:17px;line-height:17px;font-size:13.2px;color:#f2f2f2;white-space:nowrap">30 - Akai APC40 mkII</div><div style="left:1364px;top:661px;width:15px;height:15px;background:#001F12"></div><div style="left:1390px;top:661px;height:17px;line-height:17px;font-size:13.2px;color:#f2f2f2;white-space:nowrap">31 - Akai APC40 mkII</div><div style="left:1364px;top:678px;width:15px;height:15px;background:#4CFFB7"></div><div style="left:1390px;top:678px;height:17px;line-height:17px;font-size:13.2px;color:#f2f2f2;white-space:nowrap">32 - Akai APC40 mkII</div><div style="left:1364px;top:695px;width:15px;height:15px;background:#00FF99"></div><div style="left:1390px;top:695px;height:17px;line-height:17px;font-size:13.2px;color:#f2f2f2;white-space:nowrap">33 - Akai APC40 mkII</div><div style="left:1364px;top:712px;width:15px;height:15px;background:#005935"></div><div style="left:1390px;top:712px;height:17px;line-height:17px;font-size:13.2px;color:#f2f2f2;white-space:nowrap">34 - Akai APC40 mkII</div><div style="left:1364px;top:729px;width:15px;height:15px;background:#001912"></div><div style="left:1390px;top:729px;height:17px;line-height:17px;font-size:13.2px;color:#f2f2f2;white-space:nowrap">35 - Akai APC40 mkII</div><div style="left:1364px;top:746px;width:15px;height:15px;background:#4CC3FF"></div><div style="left:1390px;top:746px;height:17px;line-height:17px;font-size:13.2px;color:#f2f2f2;white-space:nowrap">36 - Akai APC40 mkII</div><div style="left:1364px;top:763px;width:15px;height:15px;background:#00A9FF"></div><div style="left:1390px;top:763px;height:17px;line-height:17px;font-size:13.2px;color:#f2f2f2;white-space:nowrap">37 - Akai APC40 mkII</div><div style="left:1364px;top:780px;width:15px;height:15px;background:#004152"></div><div style="left:1390px;top:780px;height:17px;line-height:17px;font-size:13.2px;color:#f2f2f2;white-space:nowrap">38 - Akai APC40 mkII</div><div style="left:1364px;top:797px;width:15px;height:15px;background:#001019"></div><div style="left:1390px;top:797px;height:17px;line-height:17px;font-size:13.2px;color:#f2f2f2;white-space:nowrap">39 - Akai APC40 mkII</div><div style="left:1364px;top:814px;width:15px;height:15px;background:#4C88FF"></div><div style="left:1390px;top:814px;height:17px;line-height:17px;font-size:13.2px;color:#f2f2f2;white-space:nowrap">40 - Akai APC40 mkII</div><div style="left:1364px;top:831px;width:15px;height:15px;background:#0055FF"></div><div style="left:1390px;top:831px;height:17px;line-height:17px;font-size:13.2px;color:#f2f2f2;white-space:nowrap">41 - Akai APC40 mkII</div><div style="left:1364px;top:848px;width:15px;height:15px;background:#001D59"></div><div style="left:1390px;top:848px;height:17px;line-height:17px;font-size:13.2px;color:#f2f2f2;white-space:nowrap">42 - Akai APC40 mkII</div><div style="left:1546px;top:134px;width:15px;height:15px;background:#000819"></div><div style="left:1572px;top:134px;height:17px;line-height:17px;font-size:13.2px;color:#f2f2f2;white-space:nowrap">43 - Akai APC40 mkII</div><div style="left:1546px;top:151px;width:15px;height:15px;background:#4C4CFF"></div><div style="left:1572px;top:151px;height:17px;line-height:17px;font-size:13.2px;color:#f2f2f2;white-space:nowrap">44 - Akai APC40 mkII</div><div style="left:1546px;top:168px;width:15px;height:15px;background:#0000FF"></div><div style="left:1572px;top:168px;height:17px;line-height:17px;font-size:13.2px;color:#f2f2f2;white-space:nowrap">45 - Akai APC40 mkII</div><div style="left:1546px;top:185px;width:15px;height:15px;background:#000059"></div><div style="left:1572px;top:185px;height:17px;line-height:17px;font-size:13.2px;color:#f2f2f2;white-space:nowrap">46 - Akai APC40 mkII</div><div style="left:1546px;top:202px;width:15px;height:15px;background:#000019"></div><div style="left:1572px;top:202px;height:17px;line-height:17px;font-size:13.2px;color:#f2f2f2;white-space:nowrap">47 - Akai APC40 mkII</div><div style="left:1546px;top:219px;width:15px;height:15px;background:#874CFF"></div><div style="left:1572px;top:219px;height:17px;line-height:17px;font-size:13.2px;color:#f2f2f2;white-space:nowrap">48 - Akai APC40 mkII</div><div style="left:1546px;top:236px;width:15px;height:15px;background:#5400FF"></div><div style="left:1572px;top:236px;height:17px;line-height:17px;font-size:13.2px;color:#f2f2f2;white-space:nowrap">49 - Akai APC40 mkII</div><div style="left:1546px;top:253px;width:15px;height:15px;background:#190064"></div><div style="left:1572px;top:253px;height:17px;line-height:17px;font-size:13.2px;color:#f2f2f2;white-space:nowrap">50 - Akai APC40 mkII</div><div style="left:1546px;top:270px;width:15px;height:15px;background:#0F0030"></div><div style="left:1572px;top:270px;height:17px;line-height:17px;font-size:13.2px;color:#f2f2f2;white-space:nowrap">51 - Akai APC40 mkII</div><div style="left:1546px;top:287px;width:15px;height:15px;background:#FF4CFF"></div><div style="left:1572px;top:287px;height:17px;line-height:17px;font-size:13.2px;color:#f2f2f2;white-space:nowrap">52 - Akai APC40 mkII</div><div style="left:1546px;top:304px;width:15px;height:15px;background:#FF00FF"></div><div style="left:1572px;top:304px;height:17px;line-height:17px;font-size:13.2px;color:#f2f2f2;white-space:nowrap">53 - Akai APC40 mkII</div><div style="left:1546px;top:321px;width:15px;height:15px;background:#590059"></div><div style="left:1572px;top:321px;height:17px;line-height:17px;font-size:13.2px;color:#f2f2f2;white-space:nowrap">54 - Akai APC40 mkII</div><div style="left:1546px;top:338px;width:15px;height:15px;background:#190019"></div><div style="left:1572px;top:338px;height:17px;line-height:17px;font-size:13.2px;color:#f2f2f2;white-space:nowrap">55 - Akai APC40 mkII</div><div style="left:1546px;top:355px;width:15px;height:15px;background:#FF4C87"></div><div style="left:1572px;top:355px;height:17px;line-height:17px;font-size:13.2px;color:#f2f2f2;white-space:nowrap">56 - Akai APC40 mkII</div><div style="left:1546px;top:372px;width:15px;height:15px;background:#FF0054"></div><div style="left:1572px;top:372px;height:17px;line-height:17px;font-size:13.2px;color:#f2f2f2;white-space:nowrap">57 - Akai APC40 mkII</div><div style="left:1546px;top:389px;width:15px;height:15px;background:#59001D"></div><div style="left:1572px;top:389px;height:17px;line-height:17px;font-size:13.2px;color:#f2f2f2;white-space:nowrap">58 - Akai APC40 mkII</div><div style="left:1546px;top:406px;width:15px;height:15px;background:#220013"></div><div style="left:1572px;top:406px;height:17px;line-height:17px;font-size:13.2px;color:#f2f2f2;white-space:nowrap">59 - Akai APC40 mkII</div><div style="left:1546px;top:423px;width:15px;height:15px;background:#FF1500"></div><div style="left:1572px;top:423px;height:17px;line-height:17px;font-size:13.2px;color:#f2f2f2;white-space:nowrap">60 - Akai APC40 mkII</div><div style="left:1546px;top:440px;width:15px;height:15px;background:#993500"></div><div style="left:1572px;top:440px;height:17px;line-height:17px;font-size:13.2px;color:#f2f2f2;white-space:nowrap">61 - Akai APC40 mkII</div><div style="left:1546px;top:457px;width:15px;height:15px;background:#795100"></div><div style="left:1572px;top:457px;height:17px;line-height:17px;font-size:13.2px;color:#f2f2f2;white-space:nowrap">62 - Akai APC40 mkII</div><div style="left:1546px;top:474px;width:15px;height:15px;background:#436400"></div><div style="left:1572px;top:474px;height:17px;line-height:17px;font-size:13.2px;color:#f2f2f2;white-space:nowrap">63 - Akai APC40 mkII</div><div style="left:1546px;top:491px;width:15px;height:15px;background:#033900"></div><div style="left:1572px;top:491px;height:17px;line-height:17px;font-size:13.2px;color:#f2f2f2;white-space:nowrap">64 - Akai APC40 mkII</div><div style="left:1546px;top:508px;width:15px;height:15px;background:#005735"></div><div style="left:1572px;top:508px;height:17px;line-height:17px;font-size:13.2px;color:#f2f2f2;white-space:nowrap">65 - Akai APC40 mkII</div><div style="left:1546px;top:525px;width:15px;height:15px;background:#00547F"></div><div style="left:1572px;top:525px;height:17px;line-height:17px;font-size:13.2px;color:#f2f2f2;white-space:nowrap">66 - Akai APC40 mkII</div><div style="left:1546px;top:542px;width:15px;height:15px;background:#0000FF"></div><div style="left:1572px;top:542px;height:17px;line-height:17px;font-size:13.2px;color:#f2f2f2;white-space:nowrap">67 - Akai APC40 mkII</div><div style="left:1546px;top:559px;width:15px;height:15px;background:#00454F"></div><div style="left:1572px;top:559px;height:17px;line-height:17px;font-size:13.2px;color:#f2f2f2;white-space:nowrap">68 - Akai APC40 mkII</div><div style="left:1546px;top:576px;width:15px;height:15px;background:#2500CC"></div><div style="left:1572px;top:576px;height:17px;line-height:17px;font-size:13.2px;color:#f2f2f2;white-space:nowrap">69 - Akai APC40 mkII</div><div style="left:1546px;top:593px;width:15px;height:15px;background:#7F7F7F"></div><div style="left:1572px;top:593px;height:17px;line-height:17px;font-size:13.2px;color:#f2f2f2;white-space:nowrap">70 - Akai APC40 mkII</div><div style="left:1546px;top:610px;width:15px;height:15px;background:#202020"></div><div style="left:1572px;top:610px;height:17px;line-height:17px;font-size:13.2px;color:#f2f2f2;white-space:nowrap">71 - Akai APC40 mkII</div><div style="left:1546px;top:627px;width:15px;height:15px;background:#FF0000"></div><div style="left:1572px;top:627px;height:17px;line-height:17px;font-size:13.2px;color:#f2f2f2;white-space:nowrap">72 - Akai APC40 mkII</div><div style="left:1546px;top:644px;width:15px;height:15px;background:#BDFF2D"></div><div style="left:1572px;top:644px;height:17px;line-height:17px;font-size:13.2px;color:#f2f2f2;white-space:nowrap">73 - Akai APC40 mkII</div><div style="left:1546px;top:661px;width:15px;height:15px;background:#AFED06"></div><div style="left:1572px;top:661px;height:17px;line-height:17px;font-size:13.2px;color:#f2f2f2;white-space:nowrap">74 - Akai APC40 mkII</div><div style="left:1546px;top:678px;width:15px;height:15px;background:#64FF09"></div><div style="left:1572px;top:678px;height:17px;line-height:17px;font-size:13.2px;color:#f2f2f2;white-space:nowrap">75 - Akai APC40 mkII</div><div style="left:1546px;top:695px;width:15px;height:15px;background:#108B00"></div><div style="left:1572px;top:695px;height:17px;line-height:17px;font-size:13.2px;color:#f2f2f2;white-space:nowrap">76 - Akai APC40 mkII</div><div style="left:1546px;top:712px;width:15px;height:15px;background:#00FF87"></div><div style="left:1572px;top:712px;height:17px;line-height:17px;font-size:13.2px;color:#f2f2f2;white-space:nowrap">77 - Akai APC40 mkII</div><div style="left:1546px;top:729px;width:15px;height:15px;background:#00A9FF"></div><div style="left:1572px;top:729px;height:17px;line-height:17px;font-size:13.2px;color:#f2f2f2;white-space:nowrap">78 - Akai APC40 mkII</div><div style="left:1546px;top:746px;width:15px;height:15px;background:#002AFF"></div><div style="left:1572px;top:746px;height:17px;line-height:17px;font-size:13.2px;color:#f2f2f2;white-space:nowrap">79 - Akai APC40 mkII</div><div style="left:1546px;top:763px;width:15px;height:15px;background:#3F00FF"></div><div style="left:1572px;top:763px;height:17px;line-height:17px;font-size:13.2px;color:#f2f2f2;white-space:nowrap">80 - Akai APC40 mkII</div><div style="left:1546px;top:780px;width:15px;height:15px;background:#7A00FF"></div><div style="left:1572px;top:780px;height:17px;line-height:17px;font-size:13.2px;color:#f2f2f2;white-space:nowrap">81 - Akai APC40 mkII</div><div style="left:1546px;top:797px;width:15px;height:15px;background:#B21A7D"></div><div style="left:1572px;top:797px;height:17px;line-height:17px;font-size:13.2px;color:#f2f2f2;white-space:nowrap">82 - Akai APC40 mkII</div><div style="left:1546px;top:814px;width:15px;height:15px;background:#402100"></div><div style="left:1572px;top:814px;height:17px;line-height:17px;font-size:13.2px;color:#f2f2f2;white-space:nowrap">83 - Akai APC40 mkII</div><div style="left:1546px;top:831px;width:15px;height:15px;background:#FF4A00"></div><div style="left:1572px;top:831px;height:17px;line-height:17px;font-size:13.2px;color:#f2f2f2;white-space:nowrap">84 - Akai APC40 mkII</div><div style="left:1546px;top:848px;width:15px;height:15px;background:#88E106"></div><div style="left:1572px;top:848px;height:17px;line-height:17px;font-size:13.2px;color:#f2f2f2;white-space:nowrap">85 - Akai APC40 mkII</div><div style="left:1728px;top:134px;width:15px;height:15px;background:#72FF15"></div><div style="left:1754px;top:134px;height:17px;line-height:17px;font-size:13.2px;color:#f2f2f2;white-space:nowrap">86 - Akai APC40 mkII</div><div style="left:1728px;top:151px;width:15px;height:15px;background:#00FF00"></div><div style="left:1754px;top:151px;height:17px;line-height:17px;font-size:13.2px;color:#f2f2f2;white-space:nowrap">87 - Akai APC40 mkII</div><div style="left:1728px;top:168px;width:15px;height:15px;background:#3BFF26"></div><div style="left:1754px;top:168px;height:17px;line-height:17px;font-size:13.2px;color:#f2f2f2;white-space:nowrap">88 - Akai APC40 mkII</div><div style="left:1728px;top:185px;width:15px;height:15px;background:#59FF71"></div><div style="left:1754px;top:185px;height:17px;line-height:17px;font-size:13.2px;color:#f2f2f2;white-space:nowrap">89 - Akai APC40 mkII</div><div style="left:1728px;top:202px;width:15px;height:15px;background:#38FFCC"></div><div style="left:1754px;top:202px;height:17px;line-height:17px;font-size:13.2px;color:#f2f2f2;white-space:nowrap">90 - Akai APC40 mkII</div><div style="left:1728px;top:219px;width:15px;height:15px;background:#5B8AFF"></div><div style="left:1754px;top:219px;height:17px;line-height:17px;font-size:13.2px;color:#f2f2f2;white-space:nowrap">91 - Akai APC40 mkII</div><div style="left:1728px;top:236px;width:15px;height:15px;background:#3151C6"></div><div style="left:1754px;top:236px;height:17px;line-height:17px;font-size:13.2px;color:#f2f2f2;white-space:nowrap">92 - Akai APC40 mkII</div><div style="left:1728px;top:253px;width:15px;height:15px;background:#877FE9"></div><div style="left:1754px;top:253px;height:17px;line-height:17px;font-size:13.2px;color:#f2f2f2;white-space:nowrap">93 - Akai APC40 mkII</div><div style="left:1728px;top:270px;width:15px;height:15px;background:#D31DFF"></div><div style="left:1754px;top:270px;height:17px;line-height:17px;font-size:13.2px;color:#f2f2f2;white-space:nowrap">94 - Akai APC40 mkII</div><div style="left:1728px;top:287px;width:15px;height:15px;background:#FF005D"></div><div style="left:1754px;top:287px;height:17px;line-height:17px;font-size:13.2px;color:#f2f2f2;white-space:nowrap">95 - Akai APC40 mkII</div><div style="left:1728px;top:304px;width:15px;height:15px;background:#FF7F00"></div><div style="left:1754px;top:304px;height:17px;line-height:17px;font-size:13.2px;color:#f2f2f2;white-space:nowrap">96 - Akai APC40 mkII</div><div style="left:1728px;top:321px;width:15px;height:15px;background:#B9B000"></div><div style="left:1754px;top:321px;height:17px;line-height:17px;font-size:13.2px;color:#f2f2f2;white-space:nowrap">97 - Akai APC40 mkII</div><div style="left:1728px;top:338px;width:15px;height:15px;background:#90FF00"></div><div style="left:1754px;top:338px;height:17px;line-height:17px;font-size:13.2px;color:#f2f2f2;white-space:nowrap">98 - Akai APC40 mkII</div><div style="left:1728px;top:355px;width:15px;height:15px;background:#835D07"></div><div style="left:1754px;top:355px;height:17px;line-height:17px;font-size:13.2px;color:#f2f2f2;white-space:nowrap">99 - Akai APC40 mkII</div><div style="left:1728px;top:372px;width:15px;height:15px;background:#392B00"></div><div style="left:1754px;top:372px;height:17px;line-height:17px;font-size:13.2px;color:#f2f2f2;white-space:nowrap">100 - Akai APC40 mkII</div><div style="left:1728px;top:389px;width:15px;height:15px;background:#144C10"></div><div style="left:1754px;top:389px;height:17px;line-height:17px;font-size:13.2px;color:#f2f2f2;white-space:nowrap">101 - Akai APC40 mkII</div><div style="left:1728px;top:406px;width:15px;height:15px;background:#0D5038"></div><div style="left:1754px;top:406px;height:17px;line-height:17px;font-size:13.2px;color:#f2f2f2;white-space:nowrap">102 - Akai APC40 mkII</div><div style="left:1728px;top:423px;width:15px;height:15px;background:#15152A"></div><div style="left:1754px;top:423px;height:17px;line-height:17px;font-size:13.2px;color:#f2f2f2;white-space:nowrap">103 - Akai APC40 mkII</div><div style="left:1728px;top:440px;width:15px;height:15px;background:#16205A"></div><div style="left:1754px;top:440px;height:17px;line-height:17px;font-size:13.2px;color:#f2f2f2;white-space:nowrap">104 - Akai APC40 mkII</div><div style="left:1728px;top:457px;width:15px;height:15px;background:#693C1C"></div><div style="left:1754px;top:457px;height:17px;line-height:17px;font-size:13.2px;color:#f2f2f2;white-space:nowrap">105 - Akai APC40 mkII</div><div style="left:1728px;top:474px;width:15px;height:15px;background:#A8000A"></div><div style="left:1754px;top:474px;height:17px;line-height:17px;font-size:13.2px;color:#f2f2f2;white-space:nowrap">106 - Akai APC40 mkII</div><div style="left:1728px;top:491px;width:15px;height:15px;background:#DE513D"></div><div style="left:1754px;top:491px;height:17px;line-height:17px;font-size:13.2px;color:#f2f2f2;white-space:nowrap">107 - Akai APC40 mkII</div><div style="left:1728px;top:508px;width:15px;height:15px;background:#D86A1C"></div><div style="left:1754px;top:508px;height:17px;line-height:17px;font-size:13.2px;color:#f2f2f2;white-space:nowrap">108 - Akai APC40 mkII</div><div style="left:1728px;top:525px;width:15px;height:15px;background:#FFE126"></div><div style="left:1754px;top:525px;height:17px;line-height:17px;font-size:13.2px;color:#f2f2f2;white-space:nowrap">109 - Akai APC40 mkII</div><div style="left:1728px;top:542px;width:15px;height:15px;background:#9EE12F"></div><div style="left:1754px;top:542px;height:17px;line-height:17px;font-size:13.2px;color:#f2f2f2;white-space:nowrap">110 - Akai APC40 mkII</div><div style="left:1728px;top:559px;width:15px;height:15px;background:#67B50F"></div><div style="left:1754px;top:559px;height:17px;line-height:17px;font-size:13.2px;color:#f2f2f2;white-space:nowrap">111 - Akai APC40 mkII</div><div style="left:1728px;top:576px;width:15px;height:15px;background:#1E1E30"></div><div style="left:1754px;top:576px;height:17px;line-height:17px;font-size:13.2px;color:#f2f2f2;white-space:nowrap">112 - Akai APC40 mkII</div><div style="left:1728px;top:593px;width:15px;height:15px;background:#DCFF6B"></div><div style="left:1754px;top:593px;height:17px;line-height:17px;font-size:13.2px;color:#f2f2f2;white-space:nowrap">113 - Akai APC40 mkII</div><div style="left:1728px;top:610px;width:15px;height:15px;background:#80FFBD"></div><div style="left:1754px;top:610px;height:17px;line-height:17px;font-size:13.2px;color:#f2f2f2;white-space:nowrap">114 - Akai APC40 mkII</div><div style="left:1728px;top:627px;width:15px;height:15px;background:#9A99FF"></div><div style="left:1754px;top:627px;height:17px;line-height:17px;font-size:13.2px;color:#f2f2f2;white-space:nowrap">115 - Akai APC40 mkII</div><div style="left:1728px;top:644px;width:15px;height:15px;background:#8E66FF"></div><div style="left:1754px;top:644px;height:17px;line-height:17px;font-size:13.2px;color:#f2f2f2;white-space:nowrap">116 - Akai APC40 mkII</div><div style="left:1728px;top:661px;width:15px;height:15px;background:#404040"></div><div style="left:1754px;top:661px;height:17px;line-height:17px;font-size:13.2px;color:#f2f2f2;white-space:nowrap">117 - Akai APC40 mkII</div><div style="left:1728px;top:678px;width:15px;height:15px;background:#757575"></div><div style="left:1754px;top:678px;height:17px;line-height:17px;font-size:13.2px;color:#f2f2f2;white-space:nowrap">118 - Akai APC40 mkII</div><div style="left:1728px;top:695px;width:15px;height:15px;background:#E0FFFF"></div><div style="left:1754px;top:695px;height:17px;line-height:17px;font-size:13.2px;color:#f2f2f2;white-space:nowrap">119 - Akai APC40 mkII</div><div style="left:1728px;top:712px;width:15px;height:15px;background:#A00000"></div><div style="left:1754px;top:712px;height:17px;line-height:17px;font-size:13.2px;color:#f2f2f2;white-space:nowrap">120 - Akai APC40 mkII</div><div style="left:1728px;top:729px;width:15px;height:15px;background:#350000"></div><div style="left:1754px;top:729px;height:17px;line-height:17px;font-size:13.2px;color:#f2f2f2;white-space:nowrap">121 - Akai APC40 mkII</div><div style="left:1728px;top:746px;width:15px;height:15px;background:#1AD000"></div><div style="left:1754px;top:746px;height:17px;line-height:17px;font-size:13.2px;color:#f2f2f2;white-space:nowrap">122 - Akai APC40 mkII</div><div style="left:1728px;top:763px;width:15px;height:15px;background:#074200"></div><div style="left:1754px;top:763px;height:17px;line-height:17px;font-size:13.2px;color:#f2f2f2;white-space:nowrap">123 - Akai APC40 mkII</div><div style="left:1728px;top:780px;width:15px;height:15px;background:#B9B000"></div><div style="left:1754px;top:780px;height:17px;line-height:17px;font-size:13.2px;color:#f2f2f2;white-space:nowrap">124 - Akai APC40 mkII</div><div style="left:1728px;top:797px;width:15px;height:15px;background:#3F3100"></div><div style="left:1754px;top:797px;height:17px;line-height:17px;font-size:13.2px;color:#f2f2f2;white-space:nowrap">125 - Akai APC40 mkII</div><div style="left:1728px;top:814px;width:15px;height:15px;background:#B35F00"></div><div style="left:1754px;top:814px;height:17px;line-height:17px;font-size:13.2px;color:#f2f2f2;white-space:nowrap">126 - Akai APC40 mkII</div><div style="left:1728px;top:831px;width:15px;height:15px;background:#4B1502"></div><div style="left:1754px;top:831px;height:17px;line-height:17px;font-size:13.2px;color:#f2f2f2;white-space:nowrap">127 - Akai APC40 mkII</div>
</body></html>
